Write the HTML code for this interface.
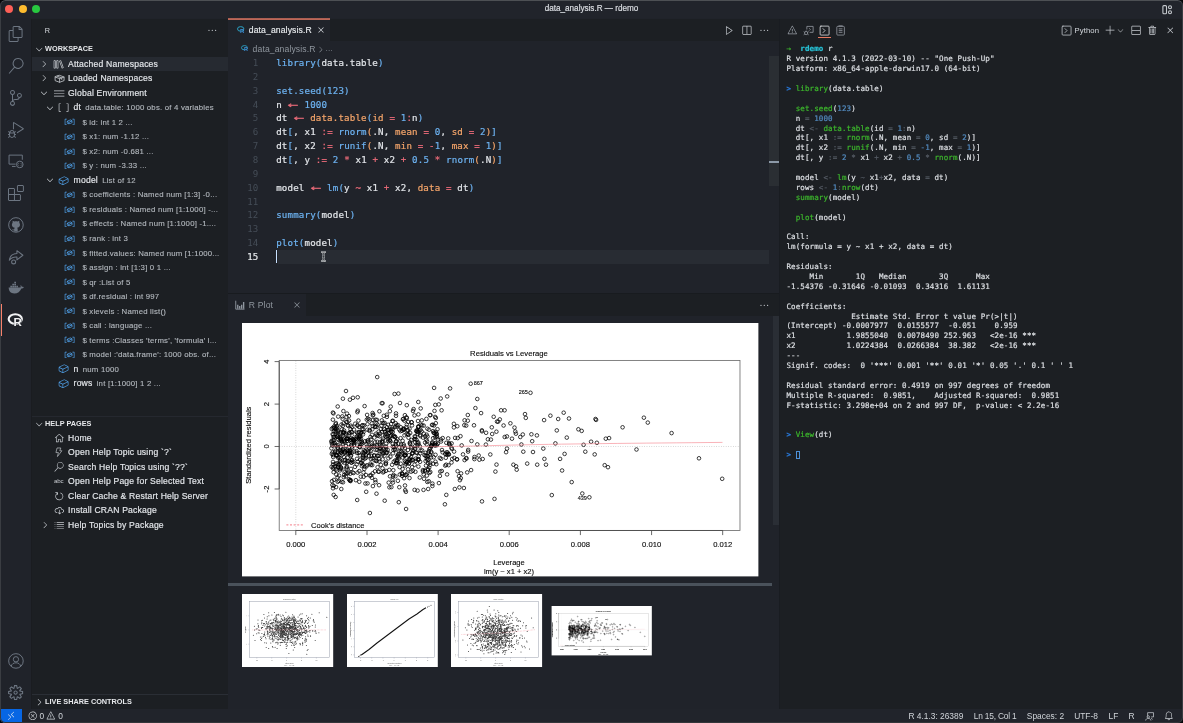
<!DOCTYPE html>
<html lang="en">
<head>
<meta charset="utf-8">
<title>data_analysis.R — rdemo</title>
<style>
*{box-sizing:border-box;margin:0;padding:0}
html,body{width:1183px;height:723px;overflow:hidden;background:#050608}
body{font-family:"Liberation Sans",sans-serif;color:#d5d9de;position:relative;-webkit-font-smoothing:antialiased}
.abs{position:absolute}
#win{will-change:transform;position:absolute;left:0;top:0;width:1183px;height:723px;background:#20232a;border-radius:5.5px;overflow:hidden}
#title{position:absolute;left:0;top:0;width:1183px;height:18.3px;background:#21242b}
#title .t{position:absolute;left:0;width:1183px;top:4.2px;text-align:center;font-size:8.15px;color:#d9dce1;line-height:10px;-webkit-text-stroke:0.2px}
.tl{position:absolute;top:5.2px;width:8px;height:8px;border-radius:50%}
#act{position:absolute;left:0;top:18.5px;width:31.5px;height:690px;background:#20232a;border-right:1px solid #1a1c20}
#side{position:absolute;left:31.5px;top:18.5px;width:196px;height:690px;background:#1c1f23}
#status{position:absolute;left:0;top:708.5px;width:1183px;height:14.5px;background:#21242b;font-size:8.4px;color:#d0d4d9}
.row{position:absolute;left:0;width:196px;height:14.54px;line-height:14.54px;font-size:8.6px;white-space:nowrap;color:#e3e6ea;letter-spacing:.19px;-webkit-text-stroke:0.17px}
.row .d{font-size:7.8px;color:#b3b8be;letter-spacing:.2px;-webkit-text-stroke:0.12px}
.row .l{position:absolute;top:0}
.sec{position:absolute;left:13.6px;font-size:7.3px;font-weight:bold;color:#e6e8eb;line-height:14.54px;letter-spacing:0}
svg{position:absolute;overflow:visible}
.ic{fill:none;stroke:#c5c9ce;stroke-width:1;stroke-linecap:round;stroke-linejoin:round}
#wb{position:absolute;left:0;top:0;width:1183px;height:723px;border-radius:5.5px;border:1px solid #3a3d42;border-top-color:#4d5054;border-bottom-color:#33363a;pointer-events:none;z-index:50}
</style>
</head>
<body>
<div id="win">
<div id="wb"></div>

<div id="title"><div class="t">data_analysis.R — rdemo</div>
<div class="tl" style="left:5.3px;background:#fe5f57"></div>
<div class="tl" style="left:18.5px;background:#febc2e"></div>
<div class="tl" style="left:31.6px;background:#28c840"></div>
<svg style="left:1161.5px;top:4.5px" width="11" height="10" viewBox="0 0 11 10"><rect x="0.9" y="0.6" width="3.6" height="8.2" rx="1" class="ic" style="stroke-width:1.1"/><circle cx="8" cy="2.3" r="1.5" class="ic" style="stroke-width:1.1"/><circle cx="8" cy="7.2" r="1.5" class="ic" style="stroke-width:1.1"/></svg>
</div>
<div id="act">
</div>
<svg style="left:7.85px;top:26.45px" width="15.9" height="15.9" viewBox="0 0 24 24"><path d="M17.5 0h-9L7 1.5V6H2.5L1 7.5v15.07L2.5 24h12.07L16 22.57V18h4.7l1.3-1.43V4.5L17.5 0zm0 2.12l2.38 2.38H17.5V2.12zm-3 20.38h-12v-15H7v9.07L8.5 18h6v4.5zm6-6h-12v-15H16V6h4.5v10.5z" fill="#6c7581" /></svg>
<svg style="left:7.85px;top:58.18px" width="15.9" height="15.9" viewBox="0 0 24 24"><path d="M15.25 0a8.25 8.25 0 0 0-6.18 13.72L1 22.88l1.12 1 8.05-9.12A8.251 8.251 0 1 0 15.25.01V0zm0 15a6.75 6.75 0 1 1 0-13.5 6.75 6.75 0 0 1 0 13.5z" fill="#6c7581" /></svg>
<svg style="left:7.85px;top:89.91px" width="15.9" height="15.9" viewBox="0 0 24 24"><path d="M21.007 8.222A3.738 3.738 0 0 0 15.045 5.2a3.737 3.737 0 0 0 1.156 6.583 2.988 2.988 0 0 1-2.668 1.67h-2.99a4.456 4.456 0 0 0-2.989 1.165V7.4a3.737 3.737 0 1 0-1.494 0v9.117a3.776 3.776 0 1 0 1.816.099 2.99 2.99 0 0 1 2.668-1.667h2.99a4.484 4.484 0 0 0 4.223-3.039 3.736 3.736 0 0 0 3.25-3.687zM4.565 3.738a2.242 2.242 0 1 1 4.484 0 2.242 2.242 0 0 1-4.484 0zm4.484 16.441a2.242 2.242 0 1 1-4.484 0 2.242 2.242 0 0 1 4.484 0zm8.221-9.715a2.242 2.242 0 1 1 0-4.485 2.242 2.242 0 0 1 0 4.485z" fill="#6c7581" /></svg>
<svg style="left:7.85px;top:121.64px" width="15.9" height="15.9" viewBox="0 0 24 24"><path d="M10.94 13.5l-1.32 1.32a3.73 3.73 0 0 0-7.24 0L1.06 13.5 0 14.56l1.72 1.72-.22.22V18H0v1.5h1.5v.08c.077.489.214.966.41 1.42L0 22.94 1.06 24l1.65-1.65A4.308 4.308 0 0 0 6 24a4.31 4.31 0 0 0 3.29-1.65L10.94 24 12 22.94 10.09 21c.198-.464.336-.951.41-1.45v-.1H12V18h-1.5v-1.5l-.22-.22L12 14.56l-1.06-1.06zM6 13.5a2.25 2.25 0 0 1 2.25 2.25h-4.5A2.25 2.25 0 0 1 6 13.5zm3 6a3.33 3.33 0 0 1-3 3 3.33 3.33 0 0 1-3-3v-2.25h6v2.25zm14.76-9.9v1.26L13.5 17.37V15.6l8.5-5.37L9 2v9.46a5.07 5.07 0 0 0-1.5-.72V.63L8.64 0l15.12 9.6z" fill="#6c7581" /></svg>
<svg style="left:7.85px;top:185.10px" width="15.9" height="15.9" viewBox="0 0 24 24"><path d="M13.5 1.5L15 0h7.5L24 1.5V9l-1.5 1.5H15L13.5 9V1.5zm1.5 0V9h7.5V1.5H15zM0 15V6l1.5-1.5H9L10.5 6v7.5H18l1.5 1.5v7.5L18 24H1.5L0 22.5V15zm9-1.5V6H1.5v7.5H9zM9 15H1.5v7.5H9V15zm1.5 7.5H18V15h-7.5v7.5z" fill="#6c7581" /></svg>
<svg style="left:7.85px;top:153.37px" width="15.9" height="15.9" viewBox="0 0 24 24" fill="none" stroke="#6c7581" stroke-width="1.5"><path d="M11.5 16.8H1.6V3.2h20v7"/><path d="M6 20.3h5.5"/><circle cx="17.8" cy="17.3" r="5"/><path d="M16.3 15.2l-1.9 2 1.9 2M19.3 15.4l1.9 2-1.9 2" stroke-width="1.1"/></svg>
<svg style="left:7.85px;top:216.83px" width="15.9" height="15.9" viewBox="0 0 24 24"><circle cx="12" cy="12" r="11" fill="none" stroke="#6c7581" stroke-width="1.5"/><path d="M7.2 5.6l2.3 1.3c1.6-.4 3.4-.4 5 0l2.3-1.3c.5 1.3.5 2.4.2 3.2 1 1.100 1.300 2.400 1.100 3.800-.4 2.300-2.200 3.400-4.300 3.700.6.600.8 1.300.8 2.200v3.300H9.400v-1.700c-2 .5-3.100-.4-3.800-1.900 1 .7 2.500 1.300 3.800.3 0-.8.300-1.600.8-2.200-2.100-.3-3.900-1.400-4.300-3.700-.2-1.400.1-2.700 1.100-3.800-.3-.8-.3-1.900.2-3.200z" fill="#6c7581"/></svg>
<svg style="left:7.85px;top:248.56px" width="15.9" height="15.9" viewBox="0 0 24 24" fill="none" stroke="#6c7581" stroke-width="1.6" stroke-linejoin="round"><path d="M13.500 2.500l9 7-9 7v-4.300c-5-.3-8.500 1-11.500 4.800.8-6.200 5-10 11.500-10.300z"/><circle cx="8.500" cy="19.500" r="3"/></svg>
<svg style="left:7.85px;top:280.29px" width="15.9" height="15.9" viewBox="0 0 24 24"><path d="M1 11.500h17.800c.6-1.600.3-3 .0-4 1.200.6 1.900 1.600 2.100 2.800 1-.3 2-.1 2.900.5-.7 1.500-2 2.200-3.600 2.200-1.800 4.800-5.500 7.500-10.700 7.500-5.300 0-8.400-3.200-8.500-9zM3.500 8.500h2.600v2.500H3.500zM6.500 8.500h2.600v2.500H6.500zM9.500 8.500h2.600v2.500H9.500zM12.500 8.500h2.600v2.500h-2.600zM6.500 5.500h2.600v2.500H6.500zM9.500 5.500h2.600v2.500H9.500zM9.500 2.500h2.600v2.500H9.500z" fill="#6c7581"/></svg>
<svg style="left:6.85px;top:312.02px" width="17.9" height="15.9" viewBox="-1.500 0 27 24"><ellipse cx="11" cy="10.500" rx="10" ry="7.200" fill="none" stroke="#f2f3f5" stroke-width="3.200"/><text x="8.200" y="21.500" font-family="Liberation Sans, sans-serif" font-weight="bold" font-size="17.500" fill="#f2f3f5" stroke="#20232a" stroke-width="1.200" paint-order="stroke">R</text></svg>
<div class="abs" style="left:0;top:304px;width:1.6px;height:31.5px;background:#f9826c"></div>
<svg style="left:7.85px;top:652.75px" width="15.9" height="15.9" viewBox="0 0 24 24" fill="none" stroke="#6c7581" stroke-width="1.5"><circle cx="12" cy="12" r="11"/><circle cx="12" cy="9.500" r="4"/><path d="M4.800 20c.8-3.500 3.700-5.200 7.200-5.200s6.400 1.700 7.200 5.200"/></svg>
<svg style="left:7.20px;top:683.70px" width="17.2" height="17.2" viewBox="0 0 16 16"><path d="M9.1 4.4L8.6 2H7.4l-.5 2.4-.7.3-2-1.3-.9.8 1.3 2-.2.7-2.4.5v1.2l2.4.5.3.8-1.3 2 .8.8 2-1.3.8.3.4 2.3h1.2l.5-2.4.8-.3 2 1.3.8-.8-1.3-2 .3-.8 2.3-.4V7.4l-2.4-.5-.3-.8 1.3-2-.8-.8-2 1.3-.7-.2zM9.4 1l.5 2.4L12 2.1l2 2-1.4 2.1 2.4.4v2.8l-2.4.5L14 12l-2 2-2.1-1.4-.5 2.4H6.6l-.5-2.4L4 13.9l-2-2 1.4-2.1L1 9.4V6.6l2.4-.5L2.1 4l2-2 2.1 1.4.4-2.4h2.8zm.6 7c0 1.1-.9 2-2 2s-2-.9-2-2 .9-2 2-2 2 .9 2 2zM8 9c.6 0 1-.4 1-1s-.4-1-1-1-1 .4-1 1 .4 1 1 1z" fill="#6c7581" /></svg>
<div id="status">
<div class="abs" style="left:0;top:0;width:22.3px;height:14.5px;background:#0766e4"></div>
<svg style="left:6.10px;top:2.20px" width="10.2" height="10.2" viewBox="0 0 16 16"><path d="M12.904 9.57L8.928 5.596l3.976-3.976-.619-.62L8 5.286v.619l4.285 4.285.62-.618zM3 5.62l4.072 4.05L3 13.647l.619.618L8 9.979v-.619L3.619 5 3 5.619z" fill="#e8ebef" /></svg>
<svg style="left:27.50px;top:2.20px" width="9.6" height="9.6" viewBox="0 0 16 16"><path d="M8.6 1c1.6.1 3.1.9 4.2 2 1.3 1.4 2 3.1 2 5.1 0 1.6-.6 3.1-1.6 4.4-1 1.2-2.4 2.1-4 2.4-1.6.3-3.2.1-4.6-.7-1.4-.8-2.5-2-3.1-3.5C.9 9.2.8 7.5 1.3 6c.5-1.6 1.4-2.9 2.8-3.8C5.4 1.3 7 .9 8.6 1zm.5 12.9c1.3-.3 2.5-1 3.4-2.1.8-1.1 1.3-2.4 1.2-3.8 0-1.6-.6-3.2-1.7-4.3-1-1-2.2-1.6-3.6-1.7-1.3-.1-2.7.2-3.8 1-1.1.8-1.9 1.9-2.3 3.3-.4 1.3-.4 2.7.2 4 .6 1.3 1.5 2.3 2.7 3 1.2.7 2.6.9 3.9.6zM7.9 7.5L10.3 5l.7.7-2.4 2.5 2.4 2.5-.7.7-2.4-2.5-2.4 2.5-.7-.7 2.4-2.5-2.4-2.5.7-.7 2.4 2.5z" fill="#d0d4d9" /></svg>
<span class="abs" style="left:39.5px;top:0;line-height:14.5px">0</span>
<svg style="left:46.40px;top:2.20px" width="9.6" height="9.6" viewBox="0 0 16 16"><path d="M7.56 1h.88l6.54 12.26-.44.74H1.44L1 13.26 7.56 1zM8 2.28L2.28 13H13.7L8 2.28zM8.625 12v-1h-1.25v1h1.25zm-1.25-2V6h1.25v4h-1.25z" fill="#d0d4d9" /></svg>
<span class="abs" style="left:58.2px;top:0;line-height:14.5px">0</span>
<span class="abs st" style="left:908.4px;top:0;line-height:14.5px;white-space:nowrap">R 4.1.3: 26389</span>
<span class="abs st" style="left:973.7px;top:0;line-height:14.5px;white-space:nowrap;letter-spacing:-0.2px">Ln 15, Col 1</span>
<span class="abs st" style="left:1026.8px;top:0;line-height:14.5px;white-space:nowrap">Spaces: 2</span>
<span class="abs st" style="left:1074.2px;top:0;line-height:14.5px;white-space:nowrap">UTF-8</span>
<span class="abs st" style="left:1108.6px;top:0;line-height:14.5px;white-space:nowrap">LF</span>
<span class="abs st" style="left:1128.5px;top:0;line-height:14.5px;white-space:nowrap">R</span>
<svg style="left:1143.500px;top:2.200px" width="10.500" height="10.500" viewBox="0 0 16 16" fill="none" stroke="#d0d4d9" stroke-width="1.100"><path d="M5.500 9.500v-7h9v6.500h-3.500"/><circle cx="6.500" cy="9" r="1.800" fill="#21242b"/><path d="M2.500 14.500c.4-2.200 1.900-3.300 4-3.300s3.600 1.100 4 3.300"/><path d="M11 10.500l1.800 2.500"/></svg>
<svg style="left:1164.00px;top:2.40px" width="9.8" height="9.8" viewBox="0 0 16 16"><path d="M13.377 10.573a7.63 7.63 0 0 1-.383-2.38V6.195a5.115 5.115 0 0 0-1.268-3.446 5.138 5.138 0 0 0-3.242-1.722c-.694-.072-1.4 0-2.07.227-.67.215-1.28.574-1.794 1.053a4.923 4.923 0 0 0-1.208 1.675 5.067 5.067 0 0 0-.431 2.022v2.2a7.61 7.61 0 0 1-.383 2.37L2 12.343l.479.658h3.505c0 .526.215 1.04.586 1.412.37.37.885.586 1.412.586.526 0 1.04-.215 1.411-.586s.587-.886.587-1.412h3.505l.478-.658-.586-1.77zm-4.69 3.147a.997.997 0 0 1-.705.299.997.997 0 0 1-.706-.3.997.997 0 0 1-.3-.705h1.999a.939.939 0 0 1-.287.706zm-5.515-1.71l.371-1.114a8.633 8.633 0 0 0 .443-2.691V6.004c0-.563.12-1.113.347-1.616.227-.514.55-.969.969-1.34.419-.382.91-.67 1.436-.837.538-.18 1.1-.24 1.65-.18a4.147 4.147 0 0 1 2.597 1.4 4.133 4.133 0 0 1 1.004 2.776v2.01c0 .909.144 1.818.443 2.691l.371 1.113h-9.63v-.012z" fill="#d0d4d9" /></svg>
</div>
<div id="side">
<div class="abs" style="left:13.300px;top:6.200px;font-size:7.300px;line-height:12px;color:#d5d9de">R</div>
<svg style="left:175.30px;top:6.70px" width="10.6" height="10.6" viewBox="0 0 16 16"><path d="M4 8a1 1 0 1 1-2 0 1 1 0 0 1 2 0zm5 0a1 1 0 1 1-2 0 1 1 0 0 1 2 0zm5 0a1 1 0 1 1-2 0 1 1 0 0 1 2 0z" fill="#c8ccd1" /></svg>
<svg style="left:2.60px;top:25.64px" width="10.4" height="10.4" viewBox="0 0 16 16"><path d="M7.976 10.072l4.357-4.357.62.618L8.284 11h-.618L3 6.333l.619-.618 4.357 4.357z" fill="#c8ccd1" /></svg><div class="sec" style="top:23.44px">WORKSPACE</div>
<div class="abs" style="left:0;top:38.13px;width:196px;height:14.53px;background:#262a31"></div>
<svg style="left:7.60px;top:40.43px" width="10" height="10" viewBox="0 0 16 16"><path d="M10.072 8.024L5.715 3.667l.618-.62L11 7.716v.618L6.333 13l-.618-.619 4.357-4.357z" fill="#c8ccd1" /></svg>
<svg style="left:21.90px;top:40.03px" width="10.8" height="10.8" viewBox="0 0 16 16"><path d="M5 2.5l.5-.5h2l.5.5v11l-.5.5h-2l-.5-.5v-11zM6 3v10h1V3H6zm3.171.345l.299-.641 1.88-.684.64.299 3.762 10.336-.299.641-1.879.684-.64-.299L9.17 3.345zm1.11.128l3.42 9.396.94-.341-3.42-9.397-.94.342zM1 2.5l.5-.5h2l.5.5v11l-.5.5h-2l-.5-.5v-11zM2 3v10h1V3H2z" fill="#c8ccd1" /></svg>
<div class="row" style="top:38.13px"><span class="l" style="left:36.50px">Attached Namespaces</span></div>
<svg style="left:7.60px;top:54.96px" width="10" height="10" viewBox="0 0 16 16"><path d="M10.072 8.024L5.715 3.667l.618-.62L11 7.716v.618L6.333 13l-.618-.619 4.357-4.357z" fill="#c8ccd1" /></svg>
<svg style="left:22.10px;top:54.26px" width="11.2" height="11.2" viewBox="0 0 16 16"><path d="M8 3.400l6.400 2.300v5.200L8 13.300 1.600 10.900V5.700zM1.800 5.800L8 8.100l6.200-2.300M8 8.100v5M4.800 4.600l6.300 2.400v2.200" fill="none" stroke="#c8ccd1" stroke-width="1.15" stroke-linejoin="round" stroke-linecap="round"/></svg>
<div class="row" style="top:52.66px"><span class="l" style="left:36.50px">Loaded Namespaces</span></div>
<svg style="left:7.70px;top:69.49px" width="10" height="10" viewBox="0 0 16 16"><path d="M7.976 10.072l4.357-4.357.62.618L8.284 11h-.618L3 6.333l.619-.618 4.357 4.357z" fill="#c8ccd1" /></svg>
<svg style="left:22.10px;top:69.29px" width="10.4" height="10.4" viewBox="0 0 16 16"><path d="M16 5H0V4h16v1zm0 8H0v-1h16v1zm0-4.008H0V8h16v.992z" fill="#c8ccd1" /></svg>
<div class="row" style="top:67.19px"><span class="l" style="left:36.50px">Global Environment</span></div>
<svg style="left:13.40px;top:84.02px" width="10" height="10" viewBox="0 0 16 16"><path d="M7.976 10.072l4.357-4.357.62.618L8.284 11h-.618L3 6.333l.619-.618 4.357 4.357z" fill="#c8ccd1" /></svg>
<svg style="left:26.90px;top:83.42px" width="11.2" height="11.2" viewBox="0 0 16 16"><path d="M1.5 2l-.5.5v11l.5.5H4v-1H2V3h2V2H1.5zm13 12l.5-.5v-11l-.5-.5H12v1h2v10h-2v1h2.5z" fill="#c8ccd1" /></svg>
<div class="row" style="top:81.72px"><span class="l" style="left:42.10px">dt<span class="d" style="margin-left:4.200px">data.table: 1000 obs. of 4 variables</span></span></div>
<svg style="left:32.20px;top:97.95px" width="11.2" height="11.2" viewBox="0 0 16 16"><path d="M2 5h2V4H1.5l-.5.5v8l.5.5H4v-1H2V5zm12.5-1H12v1h2v7h-2v1h2.5l.5-.5v-8l-.5-.5zm-2.74 2.57L12 7v2.51l-.3.45-4.5 2h-.46l-2.5-1.5-.24-.43v-2.5l.3-.46 4.5-2h.46l2.5 1.5zM5 9.71l1.5.9V9.28L5 8.38v1.33zm.58-2.15l1.45.87 3.39-1.5-1.45-.87-3.39 1.5zm1.95 3.17l3.5-1.56v-1.4l-3.5 1.55v1.41z" fill="#4f9fe6" /></svg><div class="row" style="top:96.25px"><span class="l" style="left:50.90px"><span class="d">$ id: int 1 2 ...</span></span></div>
<svg style="left:32.20px;top:112.48px" width="11.2" height="11.2" viewBox="0 0 16 16"><path d="M2 5h2V4H1.5l-.5.5v8l.5.5H4v-1H2V5zm12.5-1H12v1h2v7h-2v1h2.5l.5-.5v-8l-.5-.5zm-2.74 2.57L12 7v2.51l-.3.45-4.5 2h-.46l-2.5-1.5-.24-.43v-2.5l.3-.46 4.5-2h.46l2.5 1.5zM5 9.71l1.5.9V9.28L5 8.38v1.33zm.58-2.15l1.45.87 3.39-1.5-1.45-.87-3.39 1.5zm1.95 3.17l3.5-1.56v-1.4l-3.5 1.55v1.41z" fill="#4f9fe6" /></svg><div class="row" style="top:110.78px"><span class="l" style="left:50.90px"><span class="d">$ x1: num -1.12 ...</span></span></div>
<svg style="left:32.20px;top:127.01px" width="11.2" height="11.2" viewBox="0 0 16 16"><path d="M2 5h2V4H1.5l-.5.5v8l.5.5H4v-1H2V5zm12.5-1H12v1h2v7h-2v1h2.5l.5-.5v-8l-.5-.5zm-2.74 2.57L12 7v2.51l-.3.45-4.5 2h-.46l-2.5-1.5-.24-.43v-2.5l.3-.46 4.5-2h.46l2.5 1.5zM5 9.71l1.5.9V9.28L5 8.38v1.33zm.58-2.15l1.45.87 3.39-1.5-1.45-.87-3.39 1.5zm1.95 3.17l3.5-1.56v-1.4l-3.5 1.55v1.41z" fill="#4f9fe6" /></svg><div class="row" style="top:125.31px"><span class="l" style="left:50.90px"><span class="d">$ x2: num -0.681 ...</span></span></div>
<svg style="left:32.20px;top:141.54px" width="11.2" height="11.2" viewBox="0 0 16 16"><path d="M2 5h2V4H1.5l-.5.5v8l.5.5H4v-1H2V5zm12.5-1H12v1h2v7h-2v1h2.5l.5-.5v-8l-.5-.5zm-2.74 2.57L12 7v2.51l-.3.45-4.5 2h-.46l-2.5-1.5-.24-.43v-2.5l.3-.46 4.5-2h.46l2.5 1.5zM5 9.71l1.5.9V9.28L5 8.38v1.33zm.58-2.15l1.45.87 3.39-1.5-1.45-.87-3.39 1.5zm1.95 3.17l3.5-1.56v-1.4l-3.5 1.55v1.41z" fill="#4f9fe6" /></svg><div class="row" style="top:139.84px"><span class="l" style="left:50.90px"><span class="d">$ y : num -3.33 ...</span></span></div>
<svg style="left:13.40px;top:156.68px" width="10" height="10" viewBox="0 0 16 16"><path d="M7.976 10.072l4.357-4.357.62.618L8.284 11h-.618L3 6.333l.619-.618 4.357 4.357z" fill="#c8ccd1" /></svg>
<svg style="left:26.90px;top:156.07px" width="11.2" height="11.2" viewBox="0 0 16 16"><path d="M14.45 4.5l-5-2.5h-.9l-7 3.5-.55.89v4.5l.55.9 5 2.5h.9l7-3.5.55-.9v-4.5l-.55-.89zm-8 8.64l-4.5-2.25V7.17l4.5 2v3.97zm.5-4.8L2.29 6.23l6.66-3.34 4.67 2.34-6.67 3.11zm7 1.55l-6.5 3.25V9.21l6.5-3v3.68z" fill="#4f9fe6" /></svg>
<div class="row" style="top:154.38px"><span class="l" style="left:42.10px">model<span class="d" style="margin-left:4.200px">List of 12</span></span></div>
<svg style="left:32.20px;top:170.60px" width="11.2" height="11.2" viewBox="0 0 16 16"><path d="M2 5h2V4H1.5l-.5.5v8l.5.5H4v-1H2V5zm12.5-1H12v1h2v7h-2v1h2.5l.5-.5v-8l-.5-.5zm-2.74 2.57L12 7v2.51l-.3.45-4.5 2h-.46l-2.5-1.5-.24-.43v-2.5l.3-.46 4.5-2h.46l2.5 1.5zM5 9.71l1.5.9V9.28L5 8.38v1.33zm.58-2.15l1.45.87 3.39-1.5-1.45-.87-3.39 1.5zm1.95 3.17l3.5-1.56v-1.4l-3.5 1.55v1.41z" fill="#4f9fe6" /></svg><div class="row" style="top:168.91px"><span class="l" style="left:50.90px"><span class="d">$ coefficients : Named num [1:3] -0...</span></span></div>
<svg style="left:32.20px;top:185.13px" width="11.2" height="11.2" viewBox="0 0 16 16"><path d="M2 5h2V4H1.5l-.5.5v8l.5.5H4v-1H2V5zm12.5-1H12v1h2v7h-2v1h2.5l.5-.5v-8l-.5-.5zm-2.74 2.57L12 7v2.51l-.3.45-4.5 2h-.46l-2.5-1.5-.24-.43v-2.5l.3-.46 4.5-2h.46l2.5 1.5zM5 9.71l1.5.9V9.28L5 8.38v1.33zm.58-2.15l1.45.87 3.39-1.5-1.45-.87-3.39 1.5zm1.95 3.17l3.5-1.56v-1.4l-3.5 1.55v1.41z" fill="#4f9fe6" /></svg><div class="row" style="top:183.44px"><span class="l" style="left:50.90px"><span class="d">$ residuals : Named num [1:1000] -...</span></span></div>
<svg style="left:32.20px;top:199.66px" width="11.2" height="11.2" viewBox="0 0 16 16"><path d="M2 5h2V4H1.5l-.5.5v8l.5.5H4v-1H2V5zm12.5-1H12v1h2v7h-2v1h2.5l.5-.5v-8l-.5-.5zm-2.74 2.57L12 7v2.51l-.3.45-4.5 2h-.46l-2.5-1.5-.24-.43v-2.5l.3-.46 4.5-2h.46l2.5 1.5zM5 9.71l1.5.9V9.28L5 8.38v1.33zm.58-2.15l1.45.87 3.39-1.5-1.45-.87-3.39 1.5zm1.95 3.17l3.5-1.56v-1.4l-3.5 1.55v1.41z" fill="#4f9fe6" /></svg><div class="row" style="top:197.97px"><span class="l" style="left:50.90px"><span class="d">$ effects : Named num [1:1000] -1....</span></span></div>
<svg style="left:32.20px;top:214.19px" width="11.2" height="11.2" viewBox="0 0 16 16"><path d="M2 5h2V4H1.5l-.5.5v8l.5.5H4v-1H2V5zm12.5-1H12v1h2v7h-2v1h2.5l.5-.5v-8l-.5-.5zm-2.74 2.57L12 7v2.51l-.3.45-4.5 2h-.46l-2.5-1.5-.24-.43v-2.5l.3-.46 4.5-2h.46l2.5 1.5zM5 9.71l1.5.9V9.28L5 8.38v1.33zm.58-2.15l1.45.87 3.39-1.5-1.45-.87-3.39 1.5zm1.95 3.17l3.5-1.56v-1.4l-3.5 1.55v1.41z" fill="#4f9fe6" /></svg><div class="row" style="top:212.50px"><span class="l" style="left:50.90px"><span class="d">$ rank : int 3</span></span></div>
<svg style="left:32.20px;top:228.72px" width="11.2" height="11.2" viewBox="0 0 16 16"><path d="M2 5h2V4H1.5l-.5.5v8l.5.5H4v-1H2V5zm12.5-1H12v1h2v7h-2v1h2.5l.5-.5v-8l-.5-.5zm-2.74 2.57L12 7v2.51l-.3.45-4.5 2h-.46l-2.5-1.5-.24-.43v-2.5l.3-.46 4.5-2h.46l2.5 1.5zM5 9.71l1.5.9V9.28L5 8.38v1.33zm.58-2.15l1.45.87 3.39-1.5-1.45-.87-3.39 1.5zm1.95 3.17l3.5-1.56v-1.4l-3.5 1.55v1.41z" fill="#4f9fe6" /></svg><div class="row" style="top:227.03px"><span class="l" style="left:50.90px"><span class="d">$ fitted.values: Named num [1:1000...</span></span></div>
<svg style="left:32.20px;top:243.25px" width="11.2" height="11.2" viewBox="0 0 16 16"><path d="M2 5h2V4H1.5l-.5.5v8l.5.5H4v-1H2V5zm12.5-1H12v1h2v7h-2v1h2.5l.5-.5v-8l-.5-.5zm-2.74 2.57L12 7v2.51l-.3.45-4.5 2h-.46l-2.5-1.5-.24-.43v-2.5l.3-.46 4.5-2h.46l2.5 1.5zM5 9.71l1.5.9V9.28L5 8.38v1.33zm.58-2.15l1.45.87 3.39-1.5-1.45-.87-3.39 1.5zm1.95 3.17l3.5-1.56v-1.4l-3.5 1.55v1.41z" fill="#4f9fe6" /></svg><div class="row" style="top:241.56px"><span class="l" style="left:50.90px"><span class="d">$ assign : int [1:3] 0 1 ...</span></span></div>
<svg style="left:32.20px;top:257.78px" width="11.2" height="11.2" viewBox="0 0 16 16"><path d="M2 5h2V4H1.5l-.5.5v8l.5.5H4v-1H2V5zm12.5-1H12v1h2v7h-2v1h2.5l.5-.5v-8l-.5-.5zm-2.74 2.57L12 7v2.51l-.3.45-4.5 2h-.46l-2.5-1.5-.24-.43v-2.5l.3-.46 4.5-2h.46l2.5 1.5zM5 9.71l1.5.9V9.28L5 8.38v1.33zm.58-2.15l1.45.87 3.39-1.5-1.45-.87-3.39 1.5zm1.95 3.17l3.5-1.56v-1.4l-3.5 1.55v1.41z" fill="#4f9fe6" /></svg><div class="row" style="top:256.08px"><span class="l" style="left:50.90px"><span class="d">$ qr :List of 5</span></span></div>
<svg style="left:32.20px;top:272.31px" width="11.2" height="11.2" viewBox="0 0 16 16"><path d="M2 5h2V4H1.5l-.5.5v8l.5.5H4v-1H2V5zm12.5-1H12v1h2v7h-2v1h2.5l.5-.5v-8l-.5-.5zm-2.74 2.57L12 7v2.51l-.3.45-4.5 2h-.46l-2.5-1.5-.24-.43v-2.5l.3-.46 4.5-2h.46l2.5 1.5zM5 9.71l1.5.9V9.28L5 8.38v1.33zm.58-2.15l1.45.87 3.39-1.5-1.45-.87-3.39 1.5zm1.95 3.17l3.5-1.56v-1.4l-3.5 1.55v1.41z" fill="#4f9fe6" /></svg><div class="row" style="top:270.62px"><span class="l" style="left:50.90px"><span class="d">$ df.residual : int 997</span></span></div>
<svg style="left:32.20px;top:286.84px" width="11.2" height="11.2" viewBox="0 0 16 16"><path d="M2 5h2V4H1.5l-.5.5v8l.5.5H4v-1H2V5zm12.5-1H12v1h2v7h-2v1h2.5l.5-.5v-8l-.5-.5zm-2.74 2.57L12 7v2.51l-.3.45-4.5 2h-.46l-2.5-1.5-.24-.43v-2.5l.3-.46 4.5-2h.46l2.5 1.5zM5 9.71l1.5.9V9.28L5 8.38v1.33zm.58-2.15l1.45.87 3.39-1.5-1.45-.87-3.39 1.5zm1.95 3.17l3.5-1.56v-1.4l-3.5 1.55v1.41z" fill="#4f9fe6" /></svg><div class="row" style="top:285.14px"><span class="l" style="left:50.90px"><span class="d">$ xlevels : Named list()</span></span></div>
<svg style="left:32.20px;top:301.37px" width="11.2" height="11.2" viewBox="0 0 16 16"><path d="M2 5h2V4H1.5l-.5.5v8l.5.5H4v-1H2V5zm12.5-1H12v1h2v7h-2v1h2.5l.5-.5v-8l-.5-.5zm-2.74 2.57L12 7v2.51l-.3.45-4.5 2h-.46l-2.5-1.5-.24-.43v-2.5l.3-.46 4.5-2h.46l2.5 1.5zM5 9.71l1.5.9V9.28L5 8.38v1.33zm.58-2.15l1.45.87 3.39-1.5-1.45-.87-3.39 1.5zm1.95 3.17l3.5-1.56v-1.4l-3.5 1.55v1.41z" fill="#4f9fe6" /></svg><div class="row" style="top:299.67px"><span class="l" style="left:50.90px"><span class="d">$ call : language ...</span></span></div>
<svg style="left:32.20px;top:315.90px" width="11.2" height="11.2" viewBox="0 0 16 16"><path d="M2 5h2V4H1.5l-.5.5v8l.5.5H4v-1H2V5zm12.5-1H12v1h2v7h-2v1h2.5l.5-.5v-8l-.5-.5zm-2.74 2.57L12 7v2.51l-.3.45-4.5 2h-.46l-2.5-1.5-.24-.43v-2.5l.3-.46 4.5-2h.46l2.5 1.5zM5 9.71l1.5.9V9.28L5 8.38v1.33zm.58-2.15l1.45.87 3.39-1.5-1.45-.87-3.39 1.5zm1.95 3.17l3.5-1.56v-1.4l-3.5 1.55v1.41z" fill="#4f9fe6" /></svg><div class="row" style="top:314.20px"><span class="l" style="left:50.90px"><span class="d">$ terms :Classes 'terms', 'formula' l...</span></span></div>
<svg style="left:32.20px;top:330.43px" width="11.2" height="11.2" viewBox="0 0 16 16"><path d="M2 5h2V4H1.5l-.5.5v8l.5.5H4v-1H2V5zm12.5-1H12v1h2v7h-2v1h2.5l.5-.5v-8l-.5-.5zm-2.74 2.57L12 7v2.51l-.3.45-4.5 2h-.46l-2.5-1.5-.24-.43v-2.5l.3-.46 4.5-2h.46l2.5 1.5zM5 9.71l1.5.9V9.28L5 8.38v1.33zm.58-2.15l1.45.87 3.39-1.5-1.45-.87-3.39 1.5zm1.95 3.17l3.5-1.56v-1.4l-3.5 1.55v1.41z" fill="#4f9fe6" /></svg><div class="row" style="top:328.73px"><span class="l" style="left:50.90px"><span class="d">$ model :'data.frame': 1000 obs. of...</span></span></div>
<svg style="left:26.90px;top:344.96px" width="11.2" height="11.2" viewBox="0 0 16 16"><path d="M14.45 4.5l-5-2.5h-.9l-7 3.5-.55.89v4.5l.55.9 5 2.5h.9l7-3.5.55-.9v-4.5l-.55-.89zm-8 8.64l-4.5-2.25V7.17l4.5 2v3.97zm.5-4.8L2.29 6.23l6.66-3.34 4.67 2.34-6.67 3.11zm7 1.55l-6.5 3.25V9.21l6.5-3v3.68z" fill="#4f9fe6" /></svg>
<div class="row" style="top:343.26px"><span class="l" style="left:42.10px">n<span class="d" style="margin-left:4.200px">num 1000</span></span></div>
<svg style="left:26.90px;top:359.49px" width="11.2" height="11.2" viewBox="0 0 16 16"><path d="M14.45 4.5l-5-2.5h-.9l-7 3.5-.55.89v4.5l.55.9 5 2.5h.9l7-3.5.55-.9v-4.5l-.55-.89zm-8 8.64l-4.5-2.25V7.17l4.5 2v3.97zm.5-4.8L2.29 6.23l6.66-3.34 4.67 2.34-6.67 3.11zm7 1.55l-6.5 3.25V9.21l6.5-3v3.68z" fill="#4f9fe6" /></svg>
<div class="row" style="top:357.79px"><span class="l" style="left:42.10px">rows<span class="d" style="margin-left:4.200px">int [1:1000] 1 2 ...</span></span></div>
<div class="abs" style="left:0;top:397.00px;width:196px;height:1px;background:#25282f"></div>
<svg style="left:2.60px;top:400.33px" width="10.4" height="10.4" viewBox="0 0 16 16"><path d="M7.976 10.072l4.357-4.357.62.618L8.284 11h-.618L3 6.333l.619-.618 4.357 4.357z" fill="#c8ccd1" /></svg><div class="sec" style="top:398.13px">HELP PAGES</div>
<svg style="left:22.30px;top:414.04px" width="10.6" height="10.6" viewBox="0 0 16 16"><path d="M8.36 1.37l6.36 5.8-.71.71L13 6.964v6.526l-.5.5h-3l-.5-.5v-3.5H7v3.5l-.5.5h-3l-.5-.5V6.972L2 7.88l-.71-.71 6.35-5.8h.72zM4 6.063v6.927h2v-3.5l.5-.5h3l.5.5v3.5h2V6.057L8 2.43 4 6.063z" fill="#c8ccd1" /></svg>
<div class="row" style="top:412.04px"><span class="l" style="left:36.60px">Home</span></div>
<svg style="left:22.50px;top:428.56px" width="10.4" height="10.4" viewBox="0 0 16 16"><path d="M5.3 1.5h5.2l-1.6 4.3h3.3l-6.9 8.9 1.5-6.1H3.6z" fill="none" stroke="#c8ccd1" stroke-width="1.0" stroke-linejoin="round" stroke-linecap="round"/></svg>
<div class="row" style="top:426.56px"><span class="l" style="left:36.60px">Open Help Topic using `?`</span></div>
<svg style="left:22.80px;top:443.50px" width="9.8" height="9.8" viewBox="0 0 24 24"><path d="M15.25 0a8.25 8.25 0 0 0-6.18 13.72L1 22.88l1.12 1 8.05-9.12A8.251 8.251 0 1 0 15.25.01V0zm0 15a6.75 6.75 0 1 1 0-13.5 6.75 6.75 0 0 1 0 13.5z" fill="#c8ccd1" /></svg>
<div class="row" style="top:441.10px"><span class="l" style="left:36.60px">Search Help Topics using `??`</span></div>
<div class="abs" style="left:22.50px;top:455.62px;font-size:6.200px;line-height:13.53px;color:#c8ccd1;letter-spacing:-0.2px">abc</div>
<div class="row" style="top:455.62px"><span class="l" style="left:36.60px">Open Help Page for Selected Text</span></div>
<svg style="left:22.30px;top:472.16px" width="10.6" height="10.6" viewBox="0 0 16 16"><path d="M4.681 3H2V2h3.5l.5.5V6H5V4a5 5 0 1 0 4.53-.761l.302-.954A6 6 0 1 1 4.681 3z" fill="#c8ccd1" /></svg>
<div class="row" style="top:470.16px"><span class="l" style="left:36.60px">Clear Cache &amp; Restart Help Server</span></div>
<svg style="left:22.30px;top:486.69px" width="10.6" height="10.6" viewBox="0 0 16 16"><path d="M11.957 6h.05a2.99 2.99 0 0 1 2.116.879 3.003 3.003 0 0 1 0 4.242 2.99 2.99 0 0 1-2.117.879v-1a2.002 2.002 0 0 0 0-4h-.914l-.123-.857a2.49 2.49 0 0 0-2.126-2.122A2.478 2.478 0 0 0 6.231 5.5l-.333.762-.809-.189A2.49 2.49 0 0 0 4.523 6c-.662 0-1.297.263-1.764.732A2.503 2.503 0 0 0 4.523 11h.498v1h-.498a3.486 3.486 0 0 1-2.628-1.16 3.502 3.502 0 0 1 1.958-5.78 3.462 3.462 0 0 1 1.468.04 3.486 3.486 0 0 1 3.657-2.06A3.479 3.479 0 0 1 11.957 6zm-5.25 5.121l1.314 1.314V7h.994v5.4l1.278-1.279.707.707-2.146 2.147h-.708L6 11.829l.707-.708z" fill="#c8ccd1" /></svg>
<div class="row" style="top:484.69px"><span class="l" style="left:36.60px">Install CRAN Package</span></div>
<svg style="left:22.30px;top:501.22px" width="10.6" height="10.6" viewBox="0 0 16 16"><path d="M2 3H1v1h1V3zm0 3H1v1h1V6zM1 9h1v1H1V9zm1 3H1v1h1v-1zm2-9h11v1H4V3zm11 3H4v1h11V6zM4 9h11v1H4V9zm11 3H4v1h11v-1z" fill="#c8ccd1" /></svg>
<div class="row" style="top:499.22px"><span class="l" style="left:36.60px">Help Topics by Package</span></div>
<svg style="left:8.10px;top:501.52px" width="10" height="10" viewBox="0 0 16 16"><path d="M10.072 8.024L5.715 3.667l.618-.62L11 7.716v.618L6.333 13l-.618-.619 4.357-4.357z" fill="#c8ccd1" /></svg>
<div class="abs" style="left:0;top:675.90px;width:196px;height:1px;background:#2a2e35"></div>
<svg style="left:2.40px;top:678.64px" width="10.4" height="10.4" viewBox="0 0 16 16"><path d="M10.072 8.024L5.715 3.667l.618-.62L11 7.716v.618L6.333 13l-.618-.619 4.357-4.357z" fill="#c8ccd1" /></svg><div class="sec" style="top:676.44px">LIVE SHARE CONTROLS</div>
</div>
<style>
#ed{position:absolute;left:227.5px;top:18.5px;width:551.9px;height:275px;background:#20232a}
.tabs{position:absolute;left:0;top:0;width:551.9px;height:22.9px;background:#1c1f23}
.tab{position:absolute;left:0;top:0;height:22.9px;background:#20232a;font-size:8.6px;letter-spacing:.12px;line-height:22.9px;white-space:nowrap}
.code{position:absolute;font-family:"DejaVu Sans Mono","Liberation Mono",monospace;font-size:9.15px;letter-spacing:0.164px;white-space:pre;color:#e2e5e9;-webkit-text-stroke:0.2px;height:13.85px;line-height:13.85px}
.ln{position:absolute;left:0;width:31px;text-align:right;font-family:"DejaVu Sans Mono","Liberation Mono",monospace;font-size:9.15px;letter-spacing:0.164px;color:#454d57;height:13.85px;line-height:13.85px}
.f{color:#6db3f2}.n{color:#6db3f2}.p{color:#f5a56a}.o{color:#ee6c7a}
.arr{display:inline-block;width:11.32px;text-align:center;letter-spacing:0}.arr span{display:inline-block;transform:scale(1.95,1.15) translateY(-0.2px)}
</style>
<div id="ed">
<div class="tabs"></div>
<div class="tab" style="width:102.7px"><div class="abs" style="left:0;top:-0.500px;width:102.7px;height:2px;background:linear-gradient(#a35c52,#c46a58)"></div>
<svg style="left:9.10px;top:7.90px" width="8.6" height="6.88" viewBox="0 0 20 16"><ellipse cx="8.600" cy="6.800" rx="7.400" ry="5.300" fill="none" stroke="#2aa5c8" stroke-width="2.300"/><text x="7.200" y="15.800" font-family="Liberation Sans, sans-serif" font-weight="bold" font-size="14" fill="#3f93dc" stroke="#20232a" stroke-width="0.900" paint-order="stroke">R</text></svg>
<span class="abs" style="left:21.300px;top:0.300px;color:#e8ebee;-webkit-text-stroke:0.15px">data_analysis.R</span>
<svg style="left:88.10px;top:6.60px" width="10" height="10" viewBox="0 0 16 16"><path d="M8 8.707l3.646 3.647.708-.707L8.707 8l3.647-3.646-.707-.708L8 7.293 4.354 3.646l-.707.708L7.293 8l-3.646 3.646.707.708L8 8.707z" fill="#d5d9de" /></svg>
</div>
<svg style="left:496.70px;top:6.60px" width="10.6" height="10.6" viewBox="0 0 16 16"><path d="M3.78 2L3 2.41v12l.78.42 9-6V8l-9-6zM4 13.48V3.35l7.6 5.07L4 13.48z" fill="#c8ccd1" /></svg>
<svg style="left:513.70px;top:6.30px" width="11.2" height="11.2" viewBox="0 0 16 16"><path d="M14 1H3L2 2v11l1 1h11l1-1V2l-1-1zM8 13H3V2h5v11zm6 0H9V2h5v11z" fill="#c8ccd1" /></svg>
<svg style="left:531.30px;top:6.60px" width="10.6" height="10.6" viewBox="0 0 16 16"><path d="M4 8a1 1 0 1 1-2 0 1 1 0 0 1 2 0zm5 0a1 1 0 1 1-2 0 1 1 0 0 1 2 0zm5 0a1 1 0 1 1-2 0 1 1 0 0 1 2 0z" fill="#c8ccd1" /></svg>
<svg style="left:13.50px;top:26.90px" width="8" height="6.40" viewBox="0 0 20 16"><ellipse cx="8.600" cy="6.800" rx="7.400" ry="5.300" fill="none" stroke="#2aa5c8" stroke-width="2.300"/><text x="7.200" y="15.800" font-family="Liberation Sans, sans-serif" font-weight="bold" font-size="14" fill="#3f93dc" stroke="#20232a" stroke-width="0.900" paint-order="stroke">R</text></svg>
<div class="abs" style="left:25.10px;top:22.90px;height:14.6px;line-height:16.600px;font-size:8.6px;letter-spacing:.12px;color:#8f969e;white-space:nowrap">data_analysis.R</div>
<svg style="left:88.20px;top:26.40px" width="9.2" height="9.2" viewBox="0 0 16 16"><path d="M10.072 8.024L5.715 3.667l.618-.62L11 7.716v.618L6.333 13l-.618-.619 4.357-4.357z" fill="#8f969e" /></svg>
<div class="abs" style="left:97.80px;top:22.90px;height:14.6px;line-height:16.800px;font-size:7.800px;color:#8f969e">…</div>
<div class="abs" style="left:50.00px;top:231.40px;width:491.90px;height:13.85px;background:#282c33"></div>
<div class="ln" style="top:38.50px">1</div>
<div class="code" style="left:48.70px;top:38.50px"><span class="f">library(</span>data.table<span class="f">)</span></div>
<div class="ln" style="top:52.35px">2</div>
<div class="ln" style="top:66.20px">3</div>
<div class="code" style="left:48.70px;top:66.20px"><span class="f">set.seed(123)</span></div>
<div class="ln" style="top:80.05px">4</div>
<div class="code" style="left:48.70px;top:80.05px">n <span class="o"><span class="arr"><span>←</span></span></span><span class="n"> 1000</span></div>
<div class="ln" style="top:93.90px">5</div>
<div class="code" style="left:48.70px;top:93.90px">dt <span class="o"><span class="arr"><span>←</span></span></span><span class="p"> data.table</span><span class="f">(</span><span class="p">id</span><span class="o"> = </span><span class="n">1</span><span class="o">:</span>n<span class="f">)</span></div>
<div class="ln" style="top:107.75px">6</div>
<div class="code" style="left:48.70px;top:107.75px">dt<span class="f">[</span>, x1 <span class="o">:=</span><span class="f"> rnorm</span><span class="p">(</span>.N, <span class="p">mean</span><span class="o"> = </span><span class="n">0</span>, <span class="p">sd</span><span class="o"> = </span><span class="n">2</span><span class="p">)</span><span class="f">]</span></div>
<div class="ln" style="top:121.60px">7</div>
<div class="code" style="left:48.70px;top:121.60px">dt<span class="f">[</span>, x2 <span class="o">:=</span><span class="f"> runif</span><span class="p">(</span>.N, <span class="p">min</span><span class="o"> = -</span><span class="n">1</span>, <span class="p">max</span><span class="o"> = </span><span class="n">1</span><span class="p">)</span><span class="f">]</span></div>
<div class="ln" style="top:135.45px">8</div>
<div class="code" style="left:48.70px;top:135.45px">dt<span class="f">[</span>, y <span class="o">:=</span><span class="n"> 2</span><span class="o"> * </span>x1<span class="o"> + </span>x2<span class="o"> + </span><span class="n">0.5</span><span class="o"> * </span><span class="f">rnorm</span><span class="p">(</span>.N<span class="p">)</span><span class="f">]</span></div>
<div class="ln" style="top:149.30px">9</div>
<div class="ln" style="top:163.15px">10</div>
<div class="code" style="left:48.70px;top:163.15px">model <span class="o"><span class="arr"><span>←</span></span></span><span class="f"> lm(</span>y<span class="o"> ~ </span>x1<span class="o"> + </span>x2, <span class="p">data</span><span class="o"> = </span>dt<span class="f">)</span></div>
<div class="ln" style="top:177.00px">11</div>
<div class="ln" style="top:190.85px">12</div>
<div class="code" style="left:48.70px;top:190.85px"><span class="f">summary(</span>model<span class="f">)</span></div>
<div class="ln" style="top:204.70px">13</div>
<div class="ln" style="top:218.55px">14</div>
<div class="code" style="left:48.70px;top:218.55px"><span class="f">plot(</span>model<span class="f">)</span></div>
<div class="ln" style="top:232.40px;color:#e6e9ec;-webkit-text-stroke:0.2px">15</div>
<div class="abs" style="left:48.80px;top:231.70px;width:1px;height:13.25px;background:#c8e1ff"></div>
<svg style="left:92.00px;top:232.50px" width="7" height="11" viewBox="0 0 7 11"><path d="M1 0.800C2.300 0.800 3.500 1.300 3.500 2.500C3.500 1.300 4.700 0.800 6 0.800M1 10.200C2.300 10.200 3.500 9.700 3.500 8.500C3.500 9.700 4.700 10.200 6 10.200M3.500 2.500V8.500M2.300 5.600H4.700" fill="none" stroke="#e9ebee" stroke-width="1.700"/><path d="M1 0.800C2.300 0.800 3.500 1.300 3.500 2.500C3.500 1.300 4.700 0.800 6 0.800M1 10.200C2.300 10.200 3.500 9.700 3.500 8.500C3.500 9.700 4.700 10.200 6 10.200M3.500 2.500V8.500M2.300 5.600H4.700" fill="none" stroke="#23262b" stroke-width="0.700"/></svg>
<div class="abs" style="left:541.90px;top:37.50px;width:9.6px;height:130px;background:#2a2e33"></div>
<div class="abs" style="left:541.90px;top:142.80px;width:10px;height:1.5px;background:#8c99a8"></div>
</div>
<style>
#g2{position:absolute;left:227.5px;top:293px;width:551.9px;height:415.5px;background:#20232a;border-top:1px solid #181b1f}
</style>
<div id="g2">
<div class="abs" style="left:0;top:0;width:551.9px;height:22.3px;background:#1c1f23"></div>
<div class="abs" style="left:0;top:0;width:78.6px;height:22.3px;background:#20232a"></div>
<svg style="left:7.10px;top:6.10px" width="9.800" height="10" viewBox="0 0 16 16" fill="none" stroke="#9097a0" stroke-width="1.500"><path d="M1.200 1v13.800H15.500"/><path d="M4.500 14V7.500M7.700 14V9.500M10.900 14V7.500M14.100 14V3" stroke-width="2.200"/></svg>
<div class="abs" style="left:21.30px;top:0;height:22.3px;line-height:22.600px;font-size:8.6px;letter-spacing:.15px;color:#8f969e;white-space:nowrap">R Plot</div>
<svg style="left:64.65px;top:6.30px" width="10" height="10" viewBox="0 0 16 16"><path d="M8 8.707l3.646 3.647.708-.707L8.707 8l3.647-3.646-.707-.708L8 7.293 4.354 3.646l-.707.708L7.293 8l-3.646 3.646.707.708L8 8.707z" fill="#8f969e" /></svg>
<svg style="left:531.30px;top:6.00px" width="10.6" height="10.6" viewBox="0 0 16 16"><path d="M4 8a1 1 0 1 1-2 0 1 1 0 0 1 2 0zm5 0a1 1 0 1 1-2 0 1 1 0 0 1 2 0zm5 0a1 1 0 1 1-2 0 1 1 0 0 1 2 0z" fill="#c8ccd1" /></svg>
<svg style="left:14.40px;top:28.80px" width="516.400" height="253.400" viewBox="0 0 516.400 253.400"><rect width="516.400" height="253.400" fill="#fff"/><path d="M53.8 37.7V207.2M37.4 123.5H497.8" stroke="#b9b9b9" stroke-width="0.7" stroke-dasharray="0.8 1.6" fill="none"/><g fill="none" stroke="#000" stroke-width="0.76"><circle cx="120.3" cy="102.3" r="1.8"/><circle cx="89.7" cy="117.8" r="1.8"/><circle cx="150.8" cy="123.6" r="1.8"/><circle cx="188.2" cy="139.7" r="1.8"/><circle cx="175.2" cy="107.1" r="1.8"/><circle cx="140.6" cy="130.3" r="1.8"/><circle cx="145.9" cy="116.2" r="1.8"/><circle cx="106.9" cy="156.2" r="1.8"/><circle cx="139.9" cy="109.1" r="1.8"/><circle cx="115.0" cy="135.8" r="1.8"/><circle cx="123.0" cy="135.6" r="1.8"/><circle cx="189.5" cy="129.7" r="1.8"/><circle cx="180.1" cy="127.4" r="1.8"/><circle cx="149.2" cy="108.4" r="1.8"/><circle cx="98.3" cy="115.0" r="1.8"/><circle cx="155.5" cy="140.0" r="1.8"/><circle cx="188.2" cy="141.8" r="1.8"/><circle cx="169.5" cy="117.0" r="1.8"/><circle cx="142.6" cy="106.3" r="1.8"/><circle cx="148.0" cy="153.3" r="1.8"/><circle cx="189.4" cy="123.0" r="1.8"/><circle cx="99.5" cy="129.6" r="1.8"/><circle cx="138.2" cy="121.8" r="1.8"/><circle cx="116.8" cy="130.0" r="1.8"/><circle cx="122.1" cy="130.4" r="1.8"/><circle cx="137.4" cy="138.5" r="1.8"/><circle cx="245.9" cy="116.3" r="1.8"/><circle cx="170.0" cy="102.4" r="1.8"/><circle cx="210.2" cy="135.9" r="1.8"/><circle cx="186.0" cy="147.1" r="1.8"/><circle cx="95.0" cy="102.9" r="1.8"/><circle cx="130.2" cy="142.1" r="1.8"/><circle cx="173.1" cy="123.2" r="1.8"/><circle cx="151.0" cy="153.3" r="1.8"/><circle cx="123.9" cy="132.2" r="1.8"/><circle cx="195.8" cy="120.7" r="1.8"/><circle cx="144.0" cy="139.5" r="1.8"/><circle cx="104.1" cy="150.4" r="1.8"/><circle cx="98.4" cy="135.4" r="1.8"/><circle cx="119.0" cy="115.6" r="1.8"/><circle cx="121.0" cy="111.4" r="1.8"/><circle cx="185.3" cy="158.9" r="1.8"/><circle cx="153.0" cy="113.6" r="1.8"/><circle cx="198.3" cy="148.5" r="1.8"/><circle cx="148.4" cy="118.2" r="1.8"/><circle cx="243.9" cy="121.6" r="1.8"/><circle cx="95.5" cy="128.6" r="1.8"/><circle cx="95.9" cy="124.8" r="1.8"/><circle cx="209.5" cy="139.5" r="1.8"/><circle cx="142.8" cy="109.0" r="1.8"/><circle cx="117.7" cy="119.1" r="1.8"/><circle cx="150.7" cy="109.0" r="1.8"/><circle cx="152.8" cy="126.2" r="1.8"/><circle cx="97.9" cy="110.4" r="1.8"/><circle cx="166.8" cy="140.9" r="1.8"/><circle cx="119.0" cy="139.9" r="1.8"/><circle cx="191.7" cy="134.3" r="1.8"/><circle cx="211.9" cy="104.4" r="1.8"/><circle cx="256.2" cy="98.7" r="1.8"/><circle cx="172.6" cy="141.7" r="1.8"/><circle cx="196.9" cy="160.1" r="1.8"/><circle cx="177.8" cy="154.5" r="1.8"/><circle cx="109.0" cy="145.9" r="1.8"/><circle cx="126.1" cy="128.4" r="1.8"/><circle cx="130.7" cy="103.0" r="1.8"/><circle cx="190.0" cy="102.0" r="1.8"/><circle cx="120.4" cy="137.8" r="1.8"/><circle cx="95.0" cy="113.4" r="1.8"/><circle cx="150.7" cy="106.2" r="1.8"/><circle cx="164.9" cy="95.1" r="1.8"/><circle cx="157.5" cy="128.3" r="1.8"/><circle cx="191.2" cy="140.7" r="1.8"/><circle cx="121.5" cy="109.0" r="1.8"/><circle cx="154.0" cy="92.8" r="1.8"/><circle cx="137.2" cy="136.0" r="1.8"/><circle cx="148.7" cy="83.6" r="1.8"/><circle cx="107.8" cy="130.5" r="1.8"/><circle cx="90.0" cy="158.2" r="1.8"/><circle cx="162.2" cy="132.4" r="1.8"/><circle cx="95.7" cy="113.6" r="1.8"/><circle cx="125.5" cy="160.4" r="1.8"/><circle cx="94.9" cy="140.3" r="1.8"/><circle cx="217.4" cy="164.4" r="1.8"/><circle cx="98.2" cy="128.5" r="1.8"/><circle cx="105.8" cy="115.9" r="1.8"/><circle cx="257.8" cy="96.4" r="1.8"/><circle cx="107.5" cy="109.9" r="1.8"/><circle cx="99.6" cy="114.1" r="1.8"/><circle cx="95.5" cy="107.1" r="1.8"/><circle cx="140.6" cy="131.6" r="1.8"/><circle cx="119.3" cy="119.2" r="1.8"/><circle cx="144.2" cy="120.7" r="1.8"/><circle cx="178.3" cy="130.2" r="1.8"/><circle cx="121.5" cy="149.5" r="1.8"/><circle cx="97.6" cy="117.7" r="1.8"/><circle cx="167.5" cy="155.1" r="1.8"/><circle cx="96.1" cy="144.1" r="1.8"/><circle cx="181.0" cy="114.6" r="1.8"/><circle cx="143.7" cy="140.5" r="1.8"/><circle cx="109.2" cy="117.0" r="1.8"/><circle cx="95.7" cy="129.5" r="1.8"/><circle cx="115.0" cy="113.7" r="1.8"/><circle cx="138.8" cy="141.8" r="1.8"/><circle cx="150.9" cy="159.6" r="1.8"/><circle cx="206.7" cy="131.0" r="1.8"/><circle cx="162.7" cy="132.5" r="1.8"/><circle cx="108.6" cy="157.0" r="1.8"/><circle cx="99.1" cy="139.7" r="1.8"/><circle cx="190.4" cy="160.6" r="1.8"/><circle cx="139.8" cy="122.6" r="1.8"/><circle cx="132.2" cy="133.0" r="1.8"/><circle cx="209.5" cy="124.8" r="1.8"/><circle cx="207.8" cy="121.7" r="1.8"/><circle cx="130.0" cy="111.8" r="1.8"/><circle cx="107.9" cy="128.0" r="1.8"/><circle cx="98.1" cy="137.6" r="1.8"/><circle cx="99.9" cy="106.5" r="1.8"/><circle cx="215.3" cy="103.2" r="1.8"/><circle cx="112.1" cy="128.5" r="1.8"/><circle cx="94.1" cy="132.3" r="1.8"/><circle cx="155.1" cy="137.1" r="1.8"/><circle cx="104.2" cy="98.8" r="1.8"/><circle cx="215.0" cy="136.5" r="1.8"/><circle cx="145.8" cy="106.8" r="1.8"/><circle cx="237.4" cy="136.7" r="1.8"/><circle cx="148.4" cy="133.8" r="1.8"/><circle cx="107.3" cy="109.7" r="1.8"/><circle cx="163.7" cy="140.8" r="1.8"/><circle cx="226.1" cy="128.6" r="1.8"/><circle cx="253.4" cy="148.6" r="1.8"/><circle cx="112.9" cy="143.9" r="1.8"/><circle cx="244.1" cy="109.8" r="1.8"/><circle cx="145.6" cy="112.7" r="1.8"/><circle cx="141.1" cy="149.4" r="1.8"/><circle cx="105.7" cy="150.3" r="1.8"/><circle cx="178.1" cy="138.8" r="1.8"/><circle cx="105.0" cy="143.7" r="1.8"/><circle cx="193.1" cy="114.3" r="1.8"/><circle cx="120.9" cy="141.6" r="1.8"/><circle cx="155.3" cy="132.9" r="1.8"/><circle cx="195.5" cy="106.2" r="1.8"/><circle cx="145.0" cy="104.0" r="1.8"/><circle cx="121.3" cy="129.4" r="1.8"/><circle cx="90.9" cy="96.7" r="1.8"/><circle cx="187.0" cy="128.2" r="1.8"/><circle cx="146.6" cy="130.3" r="1.8"/><circle cx="138.9" cy="125.3" r="1.8"/><circle cx="163.1" cy="131.7" r="1.8"/><circle cx="128.5" cy="114.0" r="1.8"/><circle cx="140.2" cy="119.2" r="1.8"/><circle cx="254.5" cy="141.6" r="1.8"/><circle cx="176.6" cy="121.4" r="1.8"/><circle cx="118.3" cy="136.7" r="1.8"/><circle cx="106.4" cy="128.2" r="1.8"/><circle cx="154.7" cy="103.6" r="1.8"/><circle cx="102.7" cy="119.3" r="1.8"/><circle cx="188.5" cy="92.1" r="1.8"/><circle cx="209.9" cy="125.9" r="1.8"/><circle cx="105.3" cy="138.0" r="1.8"/><circle cx="168.1" cy="119.3" r="1.8"/><circle cx="178.6" cy="106.8" r="1.8"/><circle cx="131.3" cy="91.6" r="1.8"/><circle cx="160.2" cy="152.9" r="1.8"/><circle cx="261.6" cy="102.5" r="1.8"/><circle cx="119.4" cy="121.2" r="1.8"/><circle cx="172.8" cy="125.8" r="1.8"/><circle cx="107.7" cy="157.3" r="1.8"/><circle cx="180.9" cy="148.5" r="1.8"/><circle cx="108.0" cy="157.6" r="1.8"/><circle cx="200.0" cy="127.0" r="1.8"/><circle cx="174.6" cy="116.9" r="1.8"/><circle cx="175.5" cy="108.9" r="1.8"/><circle cx="121.8" cy="127.0" r="1.8"/><circle cx="181.7" cy="102.6" r="1.8"/><circle cx="180.1" cy="102.4" r="1.8"/><circle cx="150.5" cy="157.2" r="1.8"/><circle cx="105.5" cy="130.8" r="1.8"/><circle cx="94.3" cy="151.5" r="1.8"/><circle cx="104.5" cy="145.7" r="1.8"/><circle cx="106.6" cy="121.0" r="1.8"/><circle cx="171.4" cy="127.6" r="1.8"/><circle cx="193.1" cy="93.9" r="1.8"/><circle cx="104.4" cy="116.0" r="1.8"/><circle cx="93.2" cy="129.0" r="1.8"/><circle cx="163.0" cy="125.1" r="1.8"/><circle cx="101.2" cy="112.7" r="1.8"/><circle cx="186.3" cy="140.4" r="1.8"/><circle cx="134.7" cy="112.4" r="1.8"/><circle cx="170.2" cy="130.0" r="1.8"/><circle cx="122.1" cy="102.4" r="1.8"/><circle cx="161.4" cy="95.9" r="1.8"/><circle cx="192.5" cy="87.9" r="1.8"/><circle cx="114.5" cy="128.1" r="1.8"/><circle cx="103.8" cy="153.4" r="1.8"/><circle cx="123.4" cy="160.5" r="1.8"/><circle cx="89.8" cy="130.9" r="1.8"/><circle cx="129.9" cy="154.8" r="1.8"/><circle cx="146.7" cy="159.6" r="1.8"/><circle cx="156.3" cy="132.2" r="1.8"/><circle cx="99.4" cy="145.6" r="1.8"/><circle cx="101.8" cy="110.0" r="1.8"/><circle cx="90.6" cy="129.4" r="1.8"/><circle cx="229.5" cy="118.0" r="1.8"/><circle cx="89.9" cy="120.7" r="1.8"/><circle cx="109.6" cy="139.5" r="1.8"/><circle cx="143.9" cy="147.9" r="1.8"/><circle cx="149.4" cy="164.1" r="1.8"/><circle cx="105.0" cy="90.6" r="1.8"/><circle cx="117.3" cy="158.8" r="1.8"/><circle cx="159.8" cy="150.2" r="1.8"/><circle cx="117.9" cy="124.3" r="1.8"/><circle cx="102.1" cy="118.4" r="1.8"/><circle cx="154.3" cy="118.3" r="1.8"/><circle cx="134.7" cy="122.2" r="1.8"/><circle cx="124.5" cy="143.4" r="1.8"/><circle cx="158.4" cy="108.2" r="1.8"/><circle cx="190.0" cy="120.3" r="1.8"/><circle cx="162.1" cy="155.2" r="1.8"/><circle cx="91.5" cy="90.4" r="1.8"/><circle cx="163.5" cy="131.7" r="1.8"/><circle cx="218.8" cy="155.2" r="1.8"/><circle cx="175.7" cy="136.5" r="1.8"/><circle cx="165.3" cy="139.0" r="1.8"/><circle cx="106.2" cy="102.8" r="1.8"/><circle cx="99.5" cy="158.8" r="1.8"/><circle cx="150.8" cy="120.8" r="1.8"/><circle cx="98.5" cy="145.8" r="1.8"/><circle cx="183.2" cy="113.3" r="1.8"/><circle cx="112.0" cy="119.9" r="1.8"/><circle cx="240.7" cy="136.0" r="1.8"/><circle cx="110.1" cy="125.2" r="1.8"/><circle cx="149.1" cy="101.0" r="1.8"/><circle cx="129.0" cy="152.4" r="1.8"/><circle cx="153.4" cy="126.9" r="1.8"/><circle cx="175.4" cy="122.3" r="1.8"/><circle cx="205.5" cy="131.5" r="1.8"/><circle cx="150.1" cy="141.8" r="1.8"/><circle cx="215.0" cy="136.2" r="1.8"/><circle cx="122.5" cy="143.6" r="1.8"/><circle cx="144.7" cy="129.6" r="1.8"/><circle cx="89.7" cy="105.9" r="1.8"/><circle cx="192.0" cy="102.5" r="1.8"/><circle cx="134.1" cy="110.7" r="1.8"/><circle cx="136.7" cy="108.6" r="1.8"/><circle cx="91.4" cy="111.5" r="1.8"/><circle cx="163.4" cy="129.6" r="1.8"/><circle cx="203.2" cy="130.9" r="1.8"/><circle cx="107.7" cy="116.9" r="1.8"/><circle cx="239.9" cy="107.3" r="1.8"/><circle cx="205.1" cy="151.4" r="1.8"/><circle cx="154.2" cy="118.2" r="1.8"/><circle cx="104.9" cy="115.3" r="1.8"/><circle cx="136.1" cy="112.7" r="1.8"/><circle cx="197.9" cy="152.9" r="1.8"/><circle cx="91.8" cy="162.9" r="1.8"/><circle cx="94.5" cy="132.2" r="1.8"/><circle cx="173.1" cy="119.1" r="1.8"/><circle cx="225.2" cy="149.4" r="1.8"/><circle cx="195.9" cy="116.5" r="1.8"/><circle cx="106.2" cy="130.1" r="1.8"/><circle cx="193.4" cy="120.0" r="1.8"/><circle cx="184.4" cy="133.2" r="1.8"/><circle cx="160.1" cy="151.1" r="1.8"/><circle cx="212.3" cy="134.9" r="1.8"/><circle cx="174.9" cy="108.5" r="1.8"/><circle cx="107.1" cy="97.6" r="1.8"/><circle cx="166.0" cy="146.3" r="1.8"/><circle cx="125.5" cy="101.2" r="1.8"/><circle cx="112.1" cy="122.2" r="1.8"/><circle cx="190.3" cy="119.3" r="1.8"/><circle cx="134.9" cy="96.9" r="1.8"/><circle cx="138.1" cy="126.1" r="1.8"/><circle cx="112.1" cy="117.9" r="1.8"/><circle cx="147.2" cy="109.7" r="1.8"/><circle cx="138.9" cy="105.9" r="1.8"/><circle cx="126.0" cy="95.7" r="1.8"/><circle cx="96.0" cy="111.8" r="1.8"/><circle cx="95.6" cy="132.4" r="1.8"/><circle cx="125.3" cy="123.6" r="1.8"/><circle cx="213.1" cy="114.9" r="1.8"/><circle cx="193.5" cy="138.7" r="1.8"/><circle cx="165.0" cy="139.3" r="1.8"/><circle cx="235.3" cy="121.4" r="1.8"/><circle cx="103.5" cy="111.5" r="1.8"/><circle cx="92.8" cy="122.2" r="1.8"/><circle cx="135.6" cy="101.7" r="1.8"/><circle cx="178.7" cy="101.8" r="1.8"/><circle cx="154.0" cy="122.6" r="1.8"/><circle cx="153.6" cy="121.0" r="1.8"/><circle cx="107.6" cy="127.3" r="1.8"/><circle cx="143.9" cy="141.2" r="1.8"/><circle cx="130.8" cy="92.4" r="1.8"/><circle cx="188.3" cy="149.0" r="1.8"/><circle cx="129.0" cy="124.2" r="1.8"/><circle cx="165.8" cy="106.9" r="1.8"/><circle cx="91.5" cy="117.9" r="1.8"/><circle cx="186.2" cy="129.7" r="1.8"/><circle cx="99.9" cy="118.5" r="1.8"/><circle cx="167.8" cy="120.4" r="1.8"/><circle cx="164.8" cy="101.5" r="1.8"/><circle cx="149.4" cy="112.5" r="1.8"/><circle cx="186.8" cy="158.3" r="1.8"/><circle cx="169.6" cy="99.2" r="1.8"/><circle cx="161.2" cy="105.7" r="1.8"/><circle cx="108.5" cy="106.3" r="1.8"/><circle cx="162.5" cy="112.3" r="1.8"/><circle cx="102.5" cy="137.6" r="1.8"/><circle cx="112.8" cy="111.3" r="1.8"/><circle cx="160.6" cy="130.3" r="1.8"/><circle cx="105.1" cy="127.6" r="1.8"/><circle cx="186.0" cy="146.1" r="1.8"/><circle cx="183.7" cy="129.8" r="1.8"/><circle cx="225.8" cy="92.0" r="1.8"/><circle cx="95.9" cy="134.7" r="1.8"/><circle cx="176.4" cy="91.4" r="1.8"/><circle cx="141.1" cy="115.6" r="1.8"/><circle cx="129.4" cy="133.1" r="1.8"/><circle cx="102.1" cy="107.4" r="1.8"/><circle cx="124.9" cy="142.2" r="1.8"/><circle cx="95.1" cy="147.5" r="1.8"/><circle cx="120.6" cy="102.4" r="1.8"/><circle cx="121.4" cy="133.5" r="1.8"/><circle cx="192.9" cy="122.3" r="1.8"/><circle cx="90.8" cy="104.9" r="1.8"/><circle cx="91.5" cy="120.3" r="1.8"/><circle cx="191.1" cy="108.1" r="1.8"/><circle cx="135.7" cy="132.7" r="1.8"/><circle cx="117.1" cy="103.9" r="1.8"/><circle cx="120.4" cy="120.2" r="1.8"/><circle cx="172.5" cy="92.4" r="1.8"/><circle cx="107.7" cy="129.4" r="1.8"/><circle cx="184.7" cy="111.7" r="1.8"/><circle cx="175.0" cy="129.9" r="1.8"/><circle cx="236.7" cy="132.5" r="1.8"/><circle cx="173.3" cy="125.8" r="1.8"/><circle cx="268.4" cy="100.3" r="1.8"/><circle cx="109.8" cy="119.5" r="1.8"/><circle cx="153.4" cy="153.3" r="1.8"/><circle cx="203.2" cy="142.6" r="1.8"/><circle cx="204.6" cy="129.3" r="1.8"/><circle cx="111.2" cy="116.1" r="1.8"/><circle cx="119.8" cy="139.8" r="1.8"/><circle cx="184.8" cy="152.6" r="1.8"/><circle cx="135.6" cy="144.2" r="1.8"/><circle cx="157.3" cy="133.7" r="1.8"/><circle cx="114.7" cy="141.4" r="1.8"/><circle cx="184.4" cy="116.7" r="1.8"/><circle cx="102.8" cy="140.0" r="1.8"/><circle cx="162.0" cy="122.9" r="1.8"/><circle cx="115.4" cy="89.2" r="1.8"/><circle cx="127.1" cy="124.8" r="1.8"/><circle cx="157.8" cy="151.5" r="1.8"/><circle cx="95.7" cy="158.8" r="1.8"/><circle cx="141.5" cy="130.0" r="1.8"/><circle cx="137.6" cy="125.0" r="1.8"/><circle cx="113.9" cy="157.2" r="1.8"/><circle cx="135.1" cy="123.6" r="1.8"/><circle cx="101.0" cy="159.3" r="1.8"/><circle cx="117.3" cy="123.9" r="1.8"/><circle cx="144.3" cy="110.9" r="1.8"/><circle cx="117.3" cy="116.0" r="1.8"/><circle cx="99.4" cy="101.6" r="1.8"/><circle cx="176.3" cy="103.7" r="1.8"/><circle cx="159.3" cy="128.4" r="1.8"/><circle cx="108.8" cy="102.7" r="1.8"/><circle cx="104.9" cy="139.9" r="1.8"/><circle cx="144.5" cy="114.1" r="1.8"/><circle cx="144.5" cy="129.7" r="1.8"/><circle cx="100.5" cy="131.5" r="1.8"/><circle cx="211.9" cy="100.8" r="1.8"/><circle cx="96.3" cy="122.2" r="1.8"/><circle cx="147.9" cy="88.2" r="1.8"/><circle cx="129.6" cy="120.4" r="1.8"/><circle cx="127.4" cy="128.9" r="1.8"/><circle cx="90.6" cy="111.2" r="1.8"/><circle cx="131.0" cy="96.9" r="1.8"/><circle cx="138.0" cy="110.5" r="1.8"/><circle cx="96.2" cy="93.6" r="1.8"/><circle cx="179.7" cy="108.5" r="1.8"/><circle cx="98.7" cy="116.1" r="1.8"/><circle cx="232.0" cy="102.3" r="1.8"/><circle cx="164.4" cy="94.3" r="1.8"/><circle cx="130.6" cy="90.0" r="1.8"/><circle cx="141.7" cy="105.8" r="1.8"/><circle cx="178.1" cy="112.0" r="1.8"/><circle cx="102.0" cy="134.1" r="1.8"/><circle cx="102.0" cy="117.5" r="1.8"/><circle cx="116.8" cy="109.4" r="1.8"/><circle cx="121.6" cy="153.8" r="1.8"/><circle cx="120.2" cy="106.4" r="1.8"/><circle cx="156.5" cy="120.7" r="1.8"/><circle cx="174.1" cy="107.9" r="1.8"/><circle cx="141.8" cy="126.0" r="1.8"/><circle cx="207.1" cy="121.1" r="1.8"/><circle cx="176.0" cy="108.6" r="1.8"/><circle cx="126.1" cy="119.1" r="1.8"/><circle cx="194.6" cy="110.6" r="1.8"/><circle cx="153.3" cy="137.4" r="1.8"/><circle cx="169.2" cy="148.7" r="1.8"/><circle cx="189.1" cy="134.4" r="1.8"/><circle cx="97.1" cy="152.6" r="1.8"/><circle cx="151.8" cy="138.7" r="1.8"/><circle cx="115.6" cy="114.7" r="1.8"/><circle cx="91.9" cy="156.9" r="1.8"/><circle cx="133.0" cy="148.3" r="1.8"/><circle cx="147.1" cy="106.6" r="1.8"/><circle cx="155.8" cy="133.5" r="1.8"/><circle cx="193.3" cy="122.4" r="1.8"/><circle cx="136.2" cy="148.5" r="1.8"/><circle cx="99.0" cy="144.4" r="1.8"/><circle cx="189.1" cy="128.7" r="1.8"/><circle cx="151.8" cy="112.8" r="1.8"/><circle cx="155.9" cy="157.8" r="1.8"/><circle cx="148.7" cy="112.7" r="1.8"/><circle cx="139.5" cy="102.7" r="1.8"/><circle cx="177.4" cy="107.6" r="1.8"/><circle cx="215.6" cy="148.2" r="1.8"/><circle cx="143.9" cy="123.6" r="1.8"/><circle cx="128.8" cy="142.0" r="1.8"/><circle cx="200.7" cy="115.1" r="1.8"/><circle cx="155.2" cy="138.2" r="1.8"/><circle cx="102.6" cy="149.2" r="1.8"/><circle cx="221.0" cy="131.4" r="1.8"/><circle cx="134.4" cy="100.4" r="1.8"/><circle cx="162.3" cy="97.6" r="1.8"/><circle cx="166.9" cy="132.3" r="1.8"/><circle cx="98.9" cy="109.3" r="1.8"/><circle cx="154.0" cy="90.4" r="1.8"/><circle cx="132.1" cy="132.1" r="1.8"/><circle cx="104.5" cy="94.0" r="1.8"/><circle cx="166.2" cy="99.0" r="1.8"/><circle cx="200.6" cy="129.3" r="1.8"/><circle cx="109.3" cy="122.2" r="1.8"/><circle cx="114.9" cy="129.9" r="1.8"/><circle cx="111.8" cy="117.0" r="1.8"/><circle cx="204.2" cy="141.7" r="1.8"/><circle cx="98.0" cy="147.4" r="1.8"/><circle cx="92.1" cy="103.5" r="1.8"/><circle cx="193.4" cy="120.8" r="1.8"/><circle cx="137.1" cy="162.2" r="1.8"/><circle cx="93.0" cy="143.5" r="1.8"/><circle cx="197.8" cy="134.9" r="1.8"/><circle cx="109.3" cy="115.1" r="1.8"/><circle cx="169.6" cy="125.4" r="1.8"/><circle cx="89.4" cy="118.8" r="1.8"/><circle cx="162.8" cy="137.7" r="1.8"/><circle cx="101.6" cy="100.3" r="1.8"/><circle cx="100.3" cy="93.4" r="1.8"/><circle cx="98.8" cy="127.5" r="1.8"/><circle cx="134.1" cy="137.6" r="1.8"/><circle cx="93.5" cy="140.8" r="1.8"/><circle cx="96.8" cy="157.8" r="1.8"/><circle cx="103.0" cy="128.1" r="1.8"/><circle cx="127.3" cy="96.4" r="1.8"/><circle cx="176.7" cy="133.4" r="1.8"/><circle cx="135.2" cy="127.0" r="1.8"/><circle cx="117.9" cy="132.3" r="1.8"/><circle cx="93.6" cy="108.0" r="1.8"/><circle cx="162.9" cy="92.2" r="1.8"/><circle cx="142.0" cy="148.5" r="1.8"/><circle cx="123.1" cy="127.9" r="1.8"/><circle cx="101.1" cy="126.0" r="1.8"/><circle cx="224.2" cy="135.0" r="1.8"/><circle cx="180.9" cy="147.1" r="1.8"/><circle cx="158.8" cy="104.3" r="1.8"/><circle cx="185.1" cy="118.4" r="1.8"/><circle cx="121.3" cy="106.4" r="1.8"/><circle cx="90.9" cy="89.6" r="1.8"/><circle cx="205.6" cy="129.5" r="1.8"/><circle cx="151.0" cy="130.3" r="1.8"/><circle cx="118.1" cy="123.6" r="1.8"/><circle cx="132.4" cy="114.6" r="1.8"/><circle cx="188.4" cy="125.1" r="1.8"/><circle cx="118.8" cy="153.7" r="1.8"/><circle cx="199.0" cy="118.5" r="1.8"/><circle cx="122.3" cy="146.0" r="1.8"/><circle cx="194.8" cy="122.2" r="1.8"/><circle cx="160.1" cy="107.8" r="1.8"/><circle cx="193.8" cy="100.2" r="1.8"/><circle cx="150.4" cy="97.9" r="1.8"/><circle cx="99.2" cy="129.7" r="1.8"/><circle cx="127.5" cy="107.9" r="1.8"/><circle cx="95.6" cy="154.4" r="1.8"/><circle cx="99.9" cy="118.4" r="1.8"/><circle cx="222.3" cy="102.2" r="1.8"/><circle cx="124.2" cy="134.6" r="1.8"/><circle cx="138.0" cy="119.4" r="1.8"/><circle cx="119.9" cy="118.7" r="1.8"/><circle cx="187.2" cy="144.6" r="1.8"/><circle cx="106.9" cy="93.1" r="1.8"/><circle cx="183.1" cy="148.1" r="1.8"/><circle cx="199.1" cy="135.8" r="1.8"/><circle cx="134.6" cy="138.1" r="1.8"/><circle cx="130.6" cy="123.5" r="1.8"/><circle cx="182.4" cy="132.1" r="1.8"/><circle cx="143.2" cy="111.4" r="1.8"/><circle cx="159.1" cy="121.4" r="1.8"/><circle cx="264.9" cy="113.4" r="1.8"/><circle cx="165.9" cy="127.0" r="1.8"/><circle cx="92.1" cy="113.7" r="1.8"/><circle cx="194.0" cy="108.9" r="1.8"/><circle cx="265.0" cy="125.6" r="1.8"/><circle cx="97.8" cy="138.7" r="1.8"/><circle cx="160.6" cy="117.8" r="1.8"/><circle cx="134.6" cy="103.9" r="1.8"/><circle cx="177.9" cy="123.4" r="1.8"/><circle cx="191.7" cy="109.6" r="1.8"/><circle cx="91.3" cy="132.1" r="1.8"/><circle cx="172.3" cy="116.1" r="1.8"/><circle cx="151.0" cy="97.9" r="1.8"/><circle cx="141.8" cy="92.8" r="1.8"/><circle cx="103.3" cy="129.5" r="1.8"/><circle cx="126.1" cy="117.3" r="1.8"/><circle cx="119.9" cy="143.1" r="1.8"/><circle cx="115.5" cy="102.1" r="1.8"/><circle cx="170.4" cy="130.7" r="1.8"/><circle cx="115.6" cy="149.6" r="1.8"/><circle cx="109.1" cy="132.2" r="1.8"/><circle cx="155.3" cy="116.3" r="1.8"/><circle cx="164.4" cy="151.7" r="1.8"/><circle cx="113.2" cy="100.7" r="1.8"/><circle cx="175.5" cy="119.6" r="1.8"/><circle cx="94.7" cy="122.6" r="1.8"/><circle cx="182.0" cy="155.8" r="1.8"/><circle cx="140.6" cy="99.9" r="1.8"/><circle cx="161.7" cy="106.8" r="1.8"/><circle cx="140.5" cy="145.3" r="1.8"/><circle cx="102.0" cy="109.4" r="1.8"/><circle cx="179.8" cy="97.4" r="1.8"/><circle cx="139.6" cy="128.6" r="1.8"/><circle cx="101.0" cy="127.0" r="1.8"/><circle cx="193.5" cy="131.8" r="1.8"/><circle cx="117.0" cy="109.0" r="1.8"/><circle cx="145.6" cy="126.7" r="1.8"/><circle cx="123.2" cy="128.5" r="1.8"/><circle cx="127.8" cy="152.6" r="1.8"/><circle cx="133.3" cy="157.0" r="1.8"/><circle cx="146.2" cy="101.8" r="1.8"/><circle cx="137.4" cy="88.3" r="1.8"/><circle cx="176.6" cy="103.4" r="1.8"/><circle cx="108.7" cy="133.2" r="1.8"/><circle cx="189.4" cy="122.8" r="1.8"/><circle cx="91.5" cy="113.9" r="1.8"/><circle cx="89.4" cy="125.3" r="1.8"/><circle cx="111.6" cy="150.0" r="1.8"/><circle cx="91.2" cy="134.0" r="1.8"/><circle cx="264.1" cy="129.2" r="1.8"/><circle cx="103.1" cy="136.8" r="1.8"/><circle cx="110.1" cy="103.9" r="1.8"/><circle cx="157.3" cy="164.2" r="1.8"/><circle cx="225.8" cy="97.7" r="1.8"/><circle cx="215.7" cy="115.1" r="1.8"/><circle cx="187.9" cy="92.2" r="1.8"/><circle cx="105.0" cy="117.9" r="1.8"/><circle cx="130.3" cy="106.3" r="1.8"/><circle cx="147.9" cy="113.4" r="1.8"/><circle cx="181.8" cy="110.6" r="1.8"/><circle cx="94.7" cy="132.4" r="1.8"/><circle cx="176.6" cy="136.9" r="1.8"/><circle cx="254.4" cy="108.7" r="1.8"/><circle cx="142.5" cy="132.7" r="1.8"/><circle cx="190.6" cy="101.8" r="1.8"/><circle cx="95.4" cy="104.7" r="1.8"/><circle cx="156.4" cy="131.0" r="1.8"/><circle cx="173.2" cy="113.8" r="1.8"/><circle cx="204.3" cy="119.8" r="1.8"/><circle cx="95.7" cy="124.4" r="1.8"/><circle cx="139.8" cy="97.4" r="1.8"/><circle cx="100.9" cy="120.6" r="1.8"/><circle cx="198.9" cy="116.5" r="1.8"/><circle cx="163.0" cy="162.5" r="1.8"/><circle cx="149.2" cy="108.7" r="1.8"/><circle cx="151.5" cy="151.9" r="1.8"/><circle cx="102.2" cy="129.6" r="1.8"/><circle cx="109.9" cy="129.6" r="1.8"/><circle cx="199.8" cy="148.0" r="1.8"/><circle cx="194.6" cy="112.9" r="1.8"/><circle cx="125.9" cy="129.8" r="1.8"/><circle cx="153.2" cy="114.1" r="1.8"/><circle cx="187.4" cy="149.9" r="1.8"/><circle cx="116.4" cy="97.6" r="1.8"/><circle cx="124.0" cy="152.0" r="1.8"/><circle cx="168.9" cy="137.7" r="1.8"/><circle cx="128.9" cy="136.0" r="1.8"/><circle cx="185.4" cy="105.7" r="1.8"/><circle cx="190.4" cy="163.0" r="1.8"/><circle cx="147.9" cy="116.9" r="1.8"/><circle cx="143.9" cy="126.1" r="1.8"/><circle cx="183.6" cy="138.1" r="1.8"/><circle cx="149.1" cy="106.4" r="1.8"/><circle cx="130.7" cy="150.3" r="1.8"/><circle cx="173.7" cy="137.9" r="1.8"/><circle cx="93.4" cy="106.2" r="1.8"/><circle cx="159.6" cy="128.6" r="1.8"/><circle cx="163.7" cy="138.8" r="1.8"/><circle cx="164.6" cy="111.0" r="1.8"/><circle cx="204.6" cy="131.4" r="1.8"/><circle cx="121.3" cy="134.9" r="1.8"/><circle cx="142.9" cy="127.6" r="1.8"/><circle cx="262.7" cy="114.0" r="1.8"/><circle cx="170.1" cy="144.2" r="1.8"/><circle cx="191.1" cy="115.2" r="1.8"/><circle cx="157.4" cy="124.4" r="1.8"/><circle cx="105.6" cy="126.6" r="1.8"/><circle cx="187.0" cy="106.7" r="1.8"/><circle cx="91.0" cy="138.9" r="1.8"/><circle cx="166.5" cy="114.7" r="1.8"/><circle cx="226.2" cy="126.9" r="1.8"/><circle cx="185.9" cy="133.0" r="1.8"/><circle cx="161.3" cy="106.6" r="1.8"/><circle cx="93.8" cy="146.4" r="1.8"/><circle cx="166.8" cy="136.2" r="1.8"/><circle cx="176.4" cy="104.1" r="1.8"/><circle cx="111.9" cy="106.6" r="1.8"/><circle cx="111.1" cy="138.8" r="1.8"/><circle cx="167.5" cy="105.8" r="1.8"/><circle cx="173.7" cy="135.7" r="1.8"/><circle cx="125.1" cy="91.9" r="1.8"/><circle cx="133.2" cy="103.9" r="1.8"/><circle cx="175.6" cy="110.8" r="1.8"/><circle cx="101.4" cy="88.1" r="1.8"/><circle cx="178.4" cy="113.2" r="1.8"/><circle cx="232.5" cy="134.0" r="1.8"/><circle cx="117.3" cy="113.2" r="1.8"/><circle cx="112.2" cy="117.2" r="1.8"/><circle cx="100.6" cy="95.8" r="1.8"/><circle cx="151.3" cy="147.2" r="1.8"/><circle cx="249.8" cy="104.3" r="1.8"/><circle cx="90.4" cy="162.0" r="1.8"/><circle cx="108.6" cy="158.1" r="1.8"/><circle cx="219.1" cy="150.4" r="1.8"/><circle cx="206.2" cy="115.4" r="1.8"/><circle cx="250.2" cy="111.0" r="1.8"/><circle cx="109.6" cy="137.6" r="1.8"/><circle cx="133.1" cy="103.6" r="1.8"/><circle cx="185.5" cy="113.5" r="1.8"/><circle cx="153.7" cy="100.2" r="1.8"/><circle cx="203.8" cy="134.8" r="1.8"/><circle cx="106.4" cy="116.0" r="1.8"/><circle cx="109.9" cy="123.7" r="1.8"/><circle cx="193.0" cy="110.4" r="1.8"/><circle cx="104.9" cy="115.8" r="1.8"/><circle cx="183.1" cy="119.6" r="1.8"/><circle cx="92.2" cy="105.0" r="1.8"/><circle cx="135.4" cy="118.8" r="1.8"/><circle cx="150.4" cy="104.5" r="1.8"/><circle cx="133.1" cy="119.3" r="1.8"/><circle cx="189.2" cy="123.4" r="1.8"/><circle cx="129.9" cy="100.5" r="1.8"/><circle cx="142.7" cy="99.9" r="1.8"/><circle cx="251.7" cy="93.8" r="1.8"/><circle cx="125.4" cy="106.7" r="1.8"/><circle cx="160.3" cy="124.5" r="1.8"/><circle cx="113.9" cy="116.0" r="1.8"/><circle cx="91.6" cy="116.7" r="1.8"/><circle cx="217.9" cy="157.2" r="1.8"/><circle cx="89.6" cy="143.8" r="1.8"/><circle cx="115.8" cy="87.7" r="1.8"/><circle cx="161.6" cy="121.3" r="1.8"/><circle cx="115.2" cy="122.5" r="1.8"/><circle cx="248.9" cy="116.6" r="1.8"/><circle cx="160.6" cy="146.0" r="1.8"/><circle cx="160.9" cy="96.2" r="1.8"/><circle cx="100.8" cy="102.9" r="1.8"/><circle cx="169.0" cy="124.1" r="1.8"/><circle cx="191.9" cy="109.9" r="1.8"/><circle cx="156.2" cy="102.2" r="1.8"/><circle cx="168.2" cy="110.0" r="1.8"/><circle cx="97.0" cy="134.3" r="1.8"/><circle cx="99.1" cy="116.1" r="1.8"/><circle cx="147.7" cy="117.3" r="1.8"/><circle cx="117.5" cy="113.9" r="1.8"/><circle cx="95.8" cy="142.2" r="1.8"/><circle cx="117.4" cy="114.6" r="1.8"/><circle cx="92.8" cy="120.1" r="1.8"/><circle cx="158.6" cy="115.2" r="1.8"/><circle cx="173.2" cy="116.0" r="1.8"/><circle cx="160.4" cy="150.7" r="1.8"/><circle cx="105.6" cy="102.2" r="1.8"/><circle cx="93.7" cy="104.5" r="1.8"/><circle cx="137.0" cy="148.8" r="1.8"/><circle cx="219.7" cy="122.4" r="1.8"/><circle cx="106.6" cy="138.4" r="1.8"/><circle cx="170.7" cy="130.0" r="1.8"/><circle cx="169.6" cy="99.3" r="1.8"/><circle cx="109.5" cy="109.3" r="1.8"/><circle cx="91.4" cy="144.3" r="1.8"/><circle cx="122.9" cy="118.3" r="1.8"/><circle cx="122.6" cy="83.1" r="1.8"/><circle cx="116.6" cy="115.3" r="1.8"/><circle cx="107.2" cy="111.5" r="1.8"/><circle cx="125.3" cy="117.8" r="1.8"/><circle cx="139.5" cy="123.6" r="1.8"/><circle cx="120.9" cy="132.0" r="1.8"/><circle cx="93.6" cy="114.3" r="1.8"/><circle cx="147.3" cy="146.9" r="1.8"/><circle cx="157.6" cy="144.1" r="1.8"/><circle cx="164.4" cy="104.1" r="1.8"/><circle cx="130.6" cy="135.2" r="1.8"/><circle cx="117.3" cy="148.1" r="1.8"/><circle cx="95.4" cy="113.7" r="1.8"/><circle cx="111.3" cy="118.5" r="1.8"/><circle cx="133.5" cy="126.8" r="1.8"/><circle cx="132.3" cy="123.4" r="1.8"/><circle cx="146.4" cy="135.4" r="1.8"/><circle cx="137.6" cy="113.3" r="1.8"/><circle cx="162.9" cy="132.6" r="1.8"/><circle cx="189.5" cy="122.0" r="1.8"/><circle cx="105.4" cy="99.1" r="1.8"/><circle cx="165.1" cy="150.6" r="1.8"/><circle cx="105.6" cy="134.7" r="1.8"/><circle cx="110.1" cy="137.0" r="1.8"/><circle cx="109.3" cy="139.6" r="1.8"/><circle cx="109.6" cy="108.8" r="1.8"/><circle cx="91.9" cy="108.3" r="1.8"/><circle cx="190.5" cy="121.6" r="1.8"/><circle cx="98.7" cy="144.3" r="1.8"/><circle cx="96.7" cy="141.3" r="1.8"/><circle cx="164.8" cy="82.2" r="1.8"/><circle cx="172.7" cy="113.3" r="1.8"/><circle cx="184.0" cy="142.6" r="1.8"/><circle cx="124.8" cy="96.7" r="1.8"/><circle cx="171.0" cy="88.0" r="1.8"/><circle cx="156.8" cy="135.5" r="1.8"/><circle cx="118.4" cy="113.5" r="1.8"/><circle cx="93.4" cy="127.8" r="1.8"/><circle cx="165.3" cy="107.5" r="1.8"/><circle cx="170.4" cy="136.8" r="1.8"/><circle cx="152.9" cy="104.1" r="1.8"/><circle cx="248.3" cy="131.5" r="1.8"/><circle cx="206.6" cy="142.2" r="1.8"/><circle cx="166.4" cy="111.4" r="1.8"/><circle cx="113.4" cy="118.5" r="1.8"/><circle cx="152.0" cy="124.3" r="1.8"/><circle cx="124.5" cy="121.3" r="1.8"/><circle cx="176.4" cy="119.5" r="1.8"/><circle cx="167.4" cy="137.0" r="1.8"/><circle cx="98.5" cy="123.8" r="1.8"/><circle cx="133.5" cy="159.3" r="1.8"/><circle cx="101.8" cy="154.2" r="1.8"/><circle cx="224.5" cy="135.6" r="1.8"/><circle cx="187.4" cy="126.2" r="1.8"/><circle cx="178.6" cy="127.7" r="1.8"/><circle cx="118.9" cy="110.1" r="1.8"/><circle cx="154.6" cy="102.2" r="1.8"/><circle cx="151.5" cy="127.0" r="1.8"/><circle cx="115.7" cy="138.7" r="1.8"/><circle cx="104.8" cy="115.9" r="1.8"/><circle cx="143.4" cy="113.3" r="1.8"/><circle cx="169.1" cy="134.1" r="1.8"/><circle cx="170.8" cy="137.3" r="1.8"/><circle cx="185.4" cy="137.0" r="1.8"/><circle cx="168.3" cy="121.3" r="1.8"/><circle cx="96.2" cy="116.5" r="1.8"/><circle cx="100.0" cy="127.9" r="1.8"/><circle cx="108.3" cy="150.7" r="1.8"/><circle cx="108.0" cy="129.8" r="1.8"/><circle cx="173.4" cy="148.8" r="1.8"/><circle cx="110.5" cy="116.1" r="1.8"/><circle cx="144.9" cy="91.7" r="1.8"/><circle cx="93.6" cy="101.3" r="1.8"/><circle cx="232.4" cy="136.1" r="1.8"/><circle cx="104.5" cy="144.4" r="1.8"/><circle cx="217.0" cy="153.1" r="1.8"/><circle cx="195.1" cy="114.2" r="1.8"/><circle cx="166.3" cy="111.5" r="1.8"/><circle cx="127.7" cy="106.9" r="1.8"/><circle cx="129.1" cy="116.4" r="1.8"/><circle cx="91.6" cy="149.2" r="1.8"/><circle cx="147.4" cy="164.3" r="1.8"/><circle cx="93.9" cy="100.0" r="1.8"/><circle cx="91.2" cy="141.4" r="1.8"/><circle cx="95.7" cy="83.5" r="1.8"/><circle cx="229.1" cy="147.1" r="1.8"/><circle cx="176.4" cy="143.6" r="1.8"/><circle cx="146.5" cy="118.2" r="1.8"/><circle cx="115.0" cy="109.7" r="1.8"/><circle cx="184.9" cy="135.5" r="1.8"/><circle cx="194.6" cy="111.2" r="1.8"/><circle cx="181.7" cy="151.4" r="1.8"/><circle cx="160.6" cy="134.5" r="1.8"/><circle cx="110.6" cy="149.5" r="1.8"/><circle cx="168.0" cy="135.7" r="1.8"/><circle cx="132.7" cy="137.5" r="1.8"/><circle cx="140.5" cy="117.5" r="1.8"/><circle cx="129.0" cy="128.2" r="1.8"/><circle cx="119.4" cy="109.4" r="1.8"/><circle cx="129.7" cy="122.4" r="1.8"/><circle cx="144.9" cy="93.9" r="1.8"/><circle cx="91.2" cy="145.6" r="1.8"/><circle cx="145.8" cy="107.5" r="1.8"/><circle cx="128.4" cy="140.6" r="1.8"/><circle cx="157.3" cy="106.6" r="1.8"/><circle cx="209.6" cy="120.4" r="1.8"/><circle cx="140.4" cy="118.7" r="1.8"/><circle cx="186.5" cy="136.4" r="1.8"/><circle cx="130.9" cy="163.1" r="1.8"/><circle cx="182.9" cy="147.4" r="1.8"/><circle cx="174.0" cy="129.5" r="1.8"/><circle cx="240.0" cy="108.3" r="1.8"/><circle cx="163.7" cy="152.0" r="1.8"/><circle cx="103.6" cy="110.4" r="1.8"/><circle cx="224.2" cy="102.6" r="1.8"/><circle cx="98.8" cy="117.1" r="1.8"/><circle cx="167.2" cy="139.9" r="1.8"/><circle cx="115.5" cy="102.8" r="1.8"/><circle cx="104.0" cy="123.0" r="1.8"/><circle cx="162.2" cy="105.8" r="1.8"/><circle cx="188.1" cy="132.1" r="1.8"/><circle cx="154.1" cy="140.3" r="1.8"/><circle cx="136.8" cy="132.9" r="1.8"/><circle cx="206.9" cy="131.6" r="1.8"/><circle cx="140.6" cy="136.3" r="1.8"/><circle cx="162.9" cy="142.5" r="1.8"/><circle cx="141.6" cy="100.4" r="1.8"/><circle cx="176.6" cy="136.1" r="1.8"/><circle cx="106.5" cy="149.4" r="1.8"/><circle cx="96.6" cy="143.7" r="1.8"/><circle cx="151.5" cy="113.5" r="1.8"/><circle cx="218.5" cy="113.2" r="1.8"/><circle cx="95.9" cy="108.6" r="1.8"/><circle cx="133.5" cy="96.7" r="1.8"/><circle cx="126.9" cy="133.1" r="1.8"/><circle cx="194.3" cy="141.2" r="1.8"/><circle cx="207.1" cy="120.1" r="1.8"/><circle cx="184.4" cy="95.9" r="1.8"/><circle cx="90.5" cy="122.6" r="1.8"/><circle cx="183.5" cy="132.7" r="1.8"/><circle cx="102.2" cy="151.9" r="1.8"/><circle cx="137.4" cy="128.1" r="1.8"/><circle cx="255.0" cy="98.6" r="1.8"/><circle cx="184.7" cy="121.4" r="1.8"/><circle cx="193.9" cy="95.0" r="1.8"/><circle cx="222.6" cy="97.3" r="1.8"/><circle cx="154.3" cy="139.9" r="1.8"/><circle cx="170.8" cy="147.8" r="1.8"/><circle cx="222.6" cy="137.1" r="1.8"/><circle cx="212.1" cy="128.6" r="1.8"/><circle cx="158.7" cy="140.7" r="1.8"/><circle cx="93.9" cy="108.8" r="1.8"/><circle cx="101.0" cy="109.3" r="1.8"/><circle cx="176.0" cy="98.0" r="1.8"/><circle cx="135.3" cy="132.8" r="1.8"/><circle cx="288.5" cy="69.8" r="1.8"/><circle cx="283.0" cy="91.1" r="1.8"/><circle cx="283.8" cy="94.9" r="1.8"/><circle cx="308.4" cy="92.7" r="1.8"/><circle cx="302.1" cy="97.1" r="1.8"/><circle cx="316.2" cy="96.0" r="1.8"/><circle cx="321.7" cy="89.7" r="1.8"/><circle cx="327.0" cy="95.5" r="1.8"/><circle cx="353.5" cy="96.0" r="1.8"/><circle cx="354.1" cy="96.9" r="1.8"/><circle cx="401.9" cy="94.7" r="1.8"/><circle cx="405.8" cy="99.6" r="1.8"/><circle cx="380.6" cy="104.3" r="1.8"/><circle cx="429.6" cy="110.1" r="1.8"/><circle cx="272.5" cy="104.6" r="1.8"/><circle cx="273.3" cy="108.5" r="1.8"/><circle cx="273.9" cy="110.7" r="1.8"/><circle cx="280.8" cy="111.5" r="1.8"/><circle cx="278.3" cy="114.0" r="1.8"/><circle cx="270.0" cy="115.7" r="1.8"/><circle cx="289.4" cy="111.3" r="1.8"/><circle cx="294.9" cy="112.4" r="1.8"/><circle cx="290.2" cy="118.2" r="1.8"/><circle cx="314.8" cy="107.4" r="1.8"/><circle cx="324.8" cy="114.6" r="1.8"/><circle cx="336.4" cy="106.3" r="1.8"/><circle cx="339.7" cy="107.9" r="1.8"/><circle cx="279.4" cy="121.5" r="1.8"/><circle cx="313.4" cy="120.4" r="1.8"/><circle cx="341.6" cy="121.8" r="1.8"/><circle cx="349.1" cy="118.7" r="1.8"/><circle cx="354.9" cy="119.8" r="1.8"/><circle cx="363.8" cy="115.7" r="1.8"/><circle cx="367.1" cy="115.1" r="1.8"/><circle cx="301.3" cy="125.6" r="1.8"/><circle cx="281.3" cy="128.7" r="1.8"/><circle cx="291.0" cy="129.0" r="1.8"/><circle cx="322.6" cy="130.9" r="1.8"/><circle cx="343.3" cy="128.7" r="1.8"/><circle cx="352.7" cy="131.4" r="1.8"/><circle cx="394.5" cy="126.5" r="1.8"/><circle cx="302.4" cy="135.9" r="1.8"/><circle cx="318.1" cy="135.9" r="1.8"/><circle cx="285.2" cy="140.6" r="1.8"/><circle cx="295.2" cy="141.7" r="1.8"/><circle cx="304.0" cy="141.7" r="1.8"/><circle cx="271.4" cy="141.7" r="1.8"/><circle cx="274.1" cy="143.3" r="1.8"/><circle cx="362.7" cy="142.2" r="1.8"/><circle cx="366.0" cy="144.2" r="1.8"/><circle cx="274.7" cy="146.7" r="1.8"/><circle cx="320.1" cy="147.5" r="1.8"/><circle cx="457.0" cy="135.3" r="1.8"/><circle cx="329.7" cy="159.1" r="1.8"/><circle cx="480.2" cy="155.8" r="1.8"/><circle cx="309.8" cy="172.1" r="1.8"/><circle cx="340.3" cy="170.5" r="1.8"/><circle cx="347.4" cy="174.3" r="1.8"/><circle cx="135.2" cy="54.1" r="1.8"/><circle cx="104.0" cy="68.0" r="1.8"/><circle cx="100.9" cy="75.7" r="1.8"/><circle cx="107.9" cy="76.7" r="1.8"/><circle cx="111.0" cy="74.8" r="1.8"/><circle cx="115.7" cy="74.3" r="1.8"/><circle cx="152.6" cy="71.0" r="1.8"/><circle cx="156.4" cy="70.6" r="1.8"/><circle cx="158.0" cy="80.0" r="1.8"/><circle cx="139.7" cy="80.2" r="1.8"/><circle cx="140.6" cy="80.2" r="1.8"/><circle cx="176.3" cy="79.0" r="1.8"/><circle cx="192.1" cy="64.9" r="1.8"/><circle cx="208.1" cy="65.4" r="1.8"/><circle cx="205.2" cy="73.4" r="1.8"/><circle cx="198.7" cy="75.5" r="1.8"/><circle cx="193.3" cy="81.9" r="1.8"/><circle cx="196.8" cy="81.4" r="1.8"/><circle cx="199.6" cy="87.3" r="1.8"/><circle cx="171.6" cy="86.1" r="1.8"/><circle cx="178.7" cy="85.4" r="1.8"/><circle cx="228.7" cy="60.7" r="1.8"/><circle cx="235.3" cy="76.0" r="1.8"/><circle cx="233.4" cy="85.1" r="1.8"/><circle cx="239.1" cy="90.1" r="1.8"/><circle cx="259.1" cy="87.3" r="1.8"/><circle cx="262.6" cy="87.3" r="1.8"/><circle cx="127.9" cy="190.0" r="1.8"/><circle cx="164.1" cy="186.0" r="1.8"/><circle cx="156.8" cy="179.2" r="1.8"/><circle cx="142.7" cy="177.7" r="1.8"/><circle cx="115.2" cy="177.0" r="1.8"/><circle cx="93.6" cy="174.0" r="1.8"/><circle cx="91.7" cy="171.9" r="1.8"/><circle cx="202.9" cy="181.3" r="1.8"/><circle cx="204.3" cy="171.9" r="1.8"/><circle cx="212.8" cy="166.0" r="1.8"/><circle cx="221.9" cy="165.0" r="1.8"/><circle cx="240.0" cy="178.4" r="1.8"/><circle cx="252.5" cy="175.9" r="1.8"/><circle cx="91.0" cy="165.3" r="1.8"/><circle cx="94.1" cy="164.1" r="1.8"/><circle cx="99.3" cy="166.0" r="1.8"/><circle cx="124.2" cy="168.8" r="1.8"/><circle cx="134.5" cy="170.7" r="1.8"/><circle cx="163.2" cy="167.2" r="1.8"/><circle cx="163.9" cy="168.8" r="1.8"/><circle cx="172.6" cy="166.9" r="1.8"/><circle cx="175.6" cy="167.6" r="1.8"/><circle cx="181.5" cy="166.9" r="1.8"/><circle cx="186.2" cy="166.0" r="1.8"/></g><path d="M89.1 123.1C138.1 124.4 198.1 124.0 258.1 122.4S398.1 120.2 480.5 119.4" stroke="#f5808a" stroke-width="0.6" fill="none"/><rect x="37.2" y="37.4" width="460.8" height="170.1" fill="none" stroke="#666" stroke-width="0.8"/><path d="M37.2 38.6h-4.6M37.2 81.1h-4.6M37.2 123.5h-4.6M37.2 166.0h-4.6M37.2 38.6V166.0M53.8 207.5v4.6M125.0 207.5v4.6M196.1 207.5v4.6M267.2 207.5v4.6M338.4 207.5v4.6M409.6 207.5v4.6M480.7 207.5v4.6M53.8 207.5H480.7" stroke="#444" stroke-width="0.8" fill="none"/><g font-family="Liberation Sans, sans-serif" fill="#0a0a0a" stroke="#0a0a0a" stroke-width="0.12" font-size="7.600" text-anchor="middle"><text x="267.0" y="32.9" font-size="7.700">Residuals vs Leverage</text><text x="53.8" y="224.4" font-size="7.650">0.000</text><text x="125.0" y="224.4" font-size="7.650">0.002</text><text x="196.1" y="224.4" font-size="7.650">0.004</text><text x="267.2" y="224.4" font-size="7.650">0.006</text><text x="338.4" y="224.4" font-size="7.650">0.008</text><text x="409.6" y="224.4" font-size="7.650">0.010</text><text x="480.7" y="224.4" font-size="7.650">0.012</text><text x="267.0" y="241.9">Leverage</text><text x="267.0" y="251.4">lm(y ~ x1 + x2)</text><text transform="translate(27.3 38.6) rotate(-90)" font-size="7.650">4</text><text transform="translate(27.3 81.1) rotate(-90)" font-size="7.650">2</text><text transform="translate(27.3 123.5) rotate(-90)" font-size="7.650">0</text><text transform="translate(27.3 166.0) rotate(-90)" font-size="7.650">-2</text><text transform="translate(8.5 122.2) rotate(-90)">Standardized residuals</text><text x="69.1" y="204.6" text-anchor="start">Cook's distance</text><text x="231.7" y="62.2" text-anchor="start" font-size="5.500">867</text><text x="285.9" y="71.2" text-anchor="end" font-size="5.500">265</text><text x="344.9" y="176.6" text-anchor="end" font-size="5.500">439</text></g><path d="M44.4 201.9H60.8" stroke="#f2606e" stroke-width="0.8" stroke-dasharray="2 1.6" fill="none"/></svg>
<div class="abs" style="left:0;top:289.20px;width:544.2px;height:2.6px;background:#4a525b"></div>
<svg style="left:14.40px;top:299.90px" width="91.2" height="73" viewBox="0 0 91.2 73"><rect width="91.2" height="73" fill="#fff"/><rect x="7.3" y="7.3" width="80.3" height="56.2" fill="none" stroke="#8d93a3" stroke-width="0.45"/><g fill="#111" opacity="0.85"><circle cx="65.8" cy="41.0" r="0.520"/><circle cx="41.1" cy="26.8" r="0.520"/><circle cx="38.7" cy="43.0" r="0.520"/><circle cx="12.4" cy="32.3" r="0.520"/><circle cx="44.5" cy="26.7" r="0.520"/><circle cx="40.7" cy="42.6" r="0.520"/><circle cx="38.1" cy="20.9" r="0.520"/><circle cx="48.4" cy="29.7" r="0.520"/><circle cx="49.7" cy="51.3" r="0.520"/><circle cx="31.7" cy="25.9" r="0.520"/><circle cx="33.9" cy="22.3" r="0.520"/><circle cx="38.8" cy="37.6" r="0.520"/><circle cx="53.0" cy="37.1" r="0.520"/><circle cx="51.4" cy="33.1" r="0.520"/><circle cx="28.8" cy="49.1" r="0.520"/><circle cx="31.0" cy="34.6" r="0.520"/><circle cx="53.5" cy="29.2" r="0.520"/><circle cx="63.7" cy="39.6" r="0.520"/><circle cx="44.2" cy="27.9" r="0.520"/><circle cx="36.3" cy="20.2" r="0.520"/><circle cx="57.9" cy="49.6" r="0.520"/><circle cx="40.8" cy="48.5" r="0.520"/><circle cx="53.4" cy="40.7" r="0.520"/><circle cx="63.4" cy="31.3" r="0.520"/><circle cx="52.2" cy="33.1" r="0.520"/><circle cx="45.5" cy="42.2" r="0.520"/><circle cx="53.5" cy="43.8" r="0.520"/><circle cx="36.8" cy="40.9" r="0.520"/><circle cx="42.4" cy="23.8" r="0.520"/><circle cx="37.6" cy="42.5" r="0.520"/><circle cx="42.1" cy="39.9" r="0.520"/><circle cx="38.7" cy="29.0" r="0.520"/><circle cx="42.3" cy="37.7" r="0.520"/><circle cx="40.0" cy="42.8" r="0.520"/><circle cx="45.7" cy="25.7" r="0.520"/><circle cx="45.4" cy="33.4" r="0.520"/><circle cx="48.2" cy="40.6" r="0.520"/><circle cx="61.6" cy="38.4" r="0.520"/><circle cx="25.9" cy="29.2" r="0.520"/><circle cx="60.3" cy="38.3" r="0.520"/><circle cx="41.7" cy="33.9" r="0.520"/><circle cx="29.7" cy="29.4" r="0.520"/><circle cx="42.5" cy="28.7" r="0.520"/><circle cx="45.7" cy="48.6" r="0.520"/><circle cx="57.5" cy="39.1" r="0.520"/><circle cx="31.7" cy="38.0" r="0.520"/><circle cx="47.2" cy="34.9" r="0.520"/><circle cx="46.0" cy="30.2" r="0.520"/><circle cx="24.2" cy="27.4" r="0.520"/><circle cx="30.2" cy="38.8" r="0.520"/><circle cx="51.9" cy="43.4" r="0.520"/><circle cx="53.0" cy="34.2" r="0.520"/><circle cx="57.8" cy="39.8" r="0.520"/><circle cx="51.1" cy="23.4" r="0.520"/><circle cx="49.4" cy="33.0" r="0.520"/><circle cx="46.1" cy="35.2" r="0.520"/><circle cx="59.3" cy="28.5" r="0.520"/><circle cx="34.4" cy="40.2" r="0.520"/><circle cx="42.9" cy="37.9" r="0.520"/><circle cx="49.3" cy="36.8" r="0.520"/><circle cx="25.5" cy="30.9" r="0.520"/><circle cx="60.5" cy="26.3" r="0.520"/><circle cx="35.0" cy="30.0" r="0.520"/><circle cx="43.7" cy="30.2" r="0.520"/><circle cx="70.7" cy="37.1" r="0.520"/><circle cx="34.5" cy="32.9" r="0.520"/><circle cx="38.2" cy="37.1" r="0.520"/><circle cx="63.5" cy="27.4" r="0.520"/><circle cx="31.5" cy="39.9" r="0.520"/><circle cx="39.4" cy="36.0" r="0.520"/><circle cx="50.9" cy="33.8" r="0.520"/><circle cx="50.1" cy="30.0" r="0.520"/><circle cx="51.8" cy="40.6" r="0.520"/><circle cx="49.1" cy="37.1" r="0.520"/><circle cx="60.9" cy="41.3" r="0.520"/><circle cx="56.9" cy="44.9" r="0.520"/><circle cx="51.8" cy="27.9" r="0.520"/><circle cx="36.3" cy="32.3" r="0.520"/><circle cx="36.0" cy="46.1" r="0.520"/><circle cx="21.5" cy="42.4" r="0.520"/><circle cx="52.9" cy="31.6" r="0.520"/><circle cx="22.5" cy="39.8" r="0.520"/><circle cx="55.3" cy="42.9" r="0.520"/><circle cx="67.0" cy="26.7" r="0.520"/><circle cx="31.7" cy="39.0" r="0.520"/><circle cx="36.3" cy="38.2" r="0.520"/><circle cx="38.8" cy="31.6" r="0.520"/><circle cx="54.7" cy="40.6" r="0.520"/><circle cx="34.1" cy="35.4" r="0.520"/><circle cx="43.0" cy="34.4" r="0.520"/><circle cx="38.3" cy="30.4" r="0.520"/><circle cx="41.6" cy="40.8" r="0.520"/><circle cx="60.3" cy="28.0" r="0.520"/><circle cx="32.9" cy="33.2" r="0.520"/><circle cx="45.5" cy="23.0" r="0.520"/><circle cx="47.9" cy="34.1" r="0.520"/><circle cx="55.0" cy="39.4" r="0.520"/><circle cx="29.3" cy="39.4" r="0.520"/><circle cx="58.1" cy="43.6" r="0.520"/><circle cx="49.9" cy="35.7" r="0.520"/><circle cx="55.2" cy="36.1" r="0.520"/><circle cx="45.5" cy="29.4" r="0.520"/><circle cx="24.7" cy="35.1" r="0.520"/><circle cx="36.8" cy="41.6" r="0.520"/><circle cx="54.5" cy="28.5" r="0.520"/><circle cx="45.0" cy="38.7" r="0.520"/><circle cx="44.0" cy="33.8" r="0.520"/><circle cx="66.3" cy="25.5" r="0.520"/><circle cx="71.3" cy="26.8" r="0.520"/><circle cx="44.2" cy="40.9" r="0.520"/><circle cx="68.0" cy="36.6" r="0.520"/><circle cx="20.4" cy="26.3" r="0.520"/><circle cx="19.8" cy="28.8" r="0.520"/><circle cx="55.1" cy="32.0" r="0.520"/><circle cx="41.4" cy="29.5" r="0.520"/><circle cx="51.6" cy="51.0" r="0.520"/><circle cx="50.9" cy="37.9" r="0.520"/><circle cx="43.5" cy="46.0" r="0.520"/><circle cx="52.9" cy="40.3" r="0.520"/><circle cx="46.4" cy="38.6" r="0.520"/><circle cx="26.0" cy="32.6" r="0.520"/><circle cx="47.3" cy="27.7" r="0.520"/><circle cx="46.9" cy="30.4" r="0.520"/><circle cx="66.8" cy="34.1" r="0.520"/><circle cx="30.9" cy="38.5" r="0.520"/><circle cx="44.8" cy="27.0" r="0.520"/><circle cx="39.5" cy="34.2" r="0.520"/><circle cx="43.0" cy="48.5" r="0.520"/><circle cx="64.7" cy="36.6" r="0.520"/><circle cx="49.2" cy="32.6" r="0.520"/><circle cx="39.0" cy="42.9" r="0.520"/><circle cx="46.5" cy="34.6" r="0.520"/><circle cx="53.9" cy="25.5" r="0.520"/><circle cx="32.6" cy="38.0" r="0.520"/><circle cx="41.4" cy="36.6" r="0.520"/><circle cx="63.3" cy="36.5" r="0.520"/><circle cx="55.0" cy="43.1" r="0.520"/><circle cx="44.1" cy="39.6" r="0.520"/><circle cx="38.8" cy="43.4" r="0.520"/><circle cx="42.7" cy="38.4" r="0.520"/><circle cx="25.8" cy="42.0" r="0.520"/><circle cx="56.0" cy="29.6" r="0.520"/><circle cx="48.7" cy="37.2" r="0.520"/><circle cx="46.3" cy="30.4" r="0.520"/><circle cx="28.9" cy="45.3" r="0.520"/><circle cx="35.9" cy="36.6" r="0.520"/><circle cx="50.8" cy="32.3" r="0.520"/><circle cx="47.7" cy="31.5" r="0.520"/><circle cx="38.6" cy="40.8" r="0.520"/><circle cx="50.7" cy="37.2" r="0.520"/><circle cx="56.0" cy="35.7" r="0.520"/><circle cx="36.4" cy="38.9" r="0.520"/><circle cx="38.2" cy="39.4" r="0.520"/><circle cx="34.1" cy="32.7" r="0.520"/><circle cx="30.6" cy="44.8" r="0.520"/><circle cx="54.3" cy="49.2" r="0.520"/><circle cx="50.8" cy="39.9" r="0.520"/><circle cx="48.7" cy="34.4" r="0.520"/><circle cx="30.4" cy="52.6" r="0.520"/><circle cx="31.9" cy="26.8" r="0.520"/><circle cx="43.8" cy="35.7" r="0.520"/><circle cx="39.6" cy="32.3" r="0.520"/><circle cx="46.1" cy="42.3" r="0.520"/><circle cx="36.1" cy="36.7" r="0.520"/><circle cx="52.5" cy="23.5" r="0.520"/><circle cx="66.4" cy="23.2" r="0.520"/><circle cx="63.3" cy="31.9" r="0.520"/><circle cx="64.1" cy="38.3" r="0.520"/><circle cx="45.5" cy="37.1" r="0.520"/><circle cx="55.8" cy="27.0" r="0.520"/><circle cx="40.0" cy="41.4" r="0.520"/><circle cx="55.8" cy="42.9" r="0.520"/><circle cx="40.0" cy="37.3" r="0.520"/><circle cx="38.7" cy="29.9" r="0.520"/><circle cx="36.8" cy="44.0" r="0.520"/><circle cx="53.1" cy="33.9" r="0.520"/><circle cx="47.9" cy="33.8" r="0.520"/><circle cx="46.9" cy="35.5" r="0.520"/><circle cx="30.8" cy="37.5" r="0.520"/><circle cx="46.3" cy="29.9" r="0.520"/><circle cx="27.1" cy="32.4" r="0.520"/><circle cx="62.5" cy="46.8" r="0.520"/><circle cx="43.0" cy="25.1" r="0.520"/><circle cx="47.0" cy="33.3" r="0.520"/><circle cx="43.3" cy="34.3" r="0.520"/><circle cx="25.4" cy="39.1" r="0.520"/><circle cx="28.0" cy="38.6" r="0.520"/><circle cx="44.3" cy="54.4" r="0.520"/><circle cx="62.7" cy="38.3" r="0.520"/><circle cx="31.1" cy="32.4" r="0.520"/><circle cx="36.1" cy="32.3" r="0.520"/><circle cx="44.0" cy="41.5" r="0.520"/><circle cx="24.2" cy="53.4" r="0.520"/><circle cx="24.0" cy="44.7" r="0.520"/><circle cx="39.6" cy="38.9" r="0.520"/><circle cx="44.1" cy="27.7" r="0.520"/><circle cx="39.9" cy="48.2" r="0.520"/><circle cx="63.2" cy="36.6" r="0.520"/><circle cx="42.6" cy="32.5" r="0.520"/><circle cx="49.0" cy="32.3" r="0.520"/><circle cx="64.0" cy="37.4" r="0.520"/><circle cx="65.2" cy="56.4" r="0.520"/><circle cx="25.3" cy="32.4" r="0.520"/><circle cx="40.0" cy="35.8" r="0.520"/><circle cx="58.7" cy="32.9" r="0.520"/><circle cx="27.9" cy="43.4" r="0.520"/><circle cx="33.4" cy="40.1" r="0.520"/><circle cx="28.9" cy="26.0" r="0.520"/><circle cx="28.1" cy="37.3" r="0.520"/><circle cx="30.9" cy="36.7" r="0.520"/><circle cx="46.7" cy="41.7" r="0.520"/><circle cx="60.0" cy="27.7" r="0.520"/><circle cx="63.1" cy="48.2" r="0.520"/><circle cx="44.7" cy="40.2" r="0.520"/><circle cx="20.7" cy="33.5" r="0.520"/><circle cx="43.9" cy="36.8" r="0.520"/><circle cx="40.5" cy="30.2" r="0.520"/><circle cx="48.9" cy="33.5" r="0.520"/><circle cx="43.0" cy="26.2" r="0.520"/><circle cx="22.8" cy="38.0" r="0.520"/><circle cx="49.6" cy="37.3" r="0.520"/><circle cx="19.5" cy="34.4" r="0.520"/><circle cx="36.2" cy="49.0" r="0.520"/><circle cx="48.4" cy="26.3" r="0.520"/><circle cx="48.8" cy="42.8" r="0.520"/><circle cx="63.6" cy="28.2" r="0.520"/><circle cx="16.0" cy="26.0" r="0.520"/><circle cx="48.7" cy="29.1" r="0.520"/><circle cx="53.0" cy="34.8" r="0.520"/><circle cx="40.6" cy="40.7" r="0.520"/><circle cx="52.3" cy="51.3" r="0.520"/><circle cx="31.2" cy="32.2" r="0.520"/><circle cx="52.6" cy="37.9" r="0.520"/><circle cx="51.1" cy="24.0" r="0.520"/><circle cx="32.7" cy="38.2" r="0.520"/><circle cx="36.5" cy="31.7" r="0.520"/><circle cx="42.3" cy="39.0" r="0.520"/><circle cx="36.6" cy="33.1" r="0.520"/><circle cx="57.3" cy="38.6" r="0.520"/><circle cx="46.7" cy="37.3" r="0.520"/><circle cx="60.5" cy="49.5" r="0.520"/><circle cx="58.8" cy="41.2" r="0.520"/><circle cx="45.3" cy="37.2" r="0.520"/><circle cx="42.3" cy="27.1" r="0.520"/><circle cx="33.1" cy="34.2" r="0.520"/><circle cx="34.8" cy="44.8" r="0.520"/><circle cx="34.9" cy="24.8" r="0.520"/><circle cx="48.8" cy="33.6" r="0.520"/><circle cx="33.9" cy="28.2" r="0.520"/><circle cx="45.6" cy="42.5" r="0.520"/><circle cx="46.9" cy="59.5" r="0.520"/><circle cx="38.6" cy="41.6" r="0.520"/><circle cx="42.3" cy="43.4" r="0.520"/><circle cx="62.1" cy="34.2" r="0.520"/><circle cx="64.1" cy="47.1" r="0.520"/><circle cx="35.1" cy="42.5" r="0.520"/><circle cx="42.2" cy="45.8" r="0.520"/><circle cx="40.1" cy="35.1" r="0.520"/><circle cx="41.3" cy="42.7" r="0.520"/><circle cx="63.2" cy="26.3" r="0.520"/><circle cx="52.9" cy="30.4" r="0.520"/><circle cx="59.9" cy="30.1" r="0.520"/><circle cx="66.1" cy="37.6" r="0.520"/><circle cx="39.3" cy="34.3" r="0.520"/><circle cx="42.3" cy="29.9" r="0.520"/><circle cx="45.1" cy="42.0" r="0.520"/><circle cx="57.0" cy="27.1" r="0.520"/><circle cx="43.5" cy="36.5" r="0.520"/><circle cx="52.4" cy="27.0" r="0.520"/><circle cx="58.8" cy="19.9" r="0.520"/><circle cx="58.7" cy="24.8" r="0.520"/><circle cx="50.0" cy="43.6" r="0.520"/><circle cx="35.0" cy="27.3" r="0.520"/><circle cx="25.8" cy="38.2" r="0.520"/><circle cx="58.2" cy="39.0" r="0.520"/><circle cx="50.1" cy="37.6" r="0.520"/><circle cx="33.2" cy="44.3" r="0.520"/><circle cx="38.5" cy="34.2" r="0.520"/><circle cx="39.2" cy="41.0" r="0.520"/><circle cx="24.3" cy="28.0" r="0.520"/><circle cx="47.6" cy="33.6" r="0.520"/><circle cx="35.1" cy="54.4" r="0.520"/><circle cx="41.0" cy="42.8" r="0.520"/><circle cx="53.6" cy="43.2" r="0.520"/><circle cx="43.4" cy="40.9" r="0.520"/><circle cx="51.2" cy="40.7" r="0.520"/><circle cx="49.7" cy="34.5" r="0.520"/><circle cx="45.0" cy="37.1" r="0.520"/><circle cx="45.2" cy="43.8" r="0.520"/><circle cx="67.2" cy="32.9" r="0.520"/><circle cx="42.5" cy="29.5" r="0.520"/><circle cx="64.3" cy="35.9" r="0.520"/><circle cx="33.5" cy="27.6" r="0.520"/><circle cx="53.4" cy="32.9" r="0.520"/><circle cx="46.7" cy="40.0" r="0.520"/><circle cx="35.8" cy="38.8" r="0.520"/><circle cx="12.5" cy="36.0" r="0.520"/><circle cx="63.9" cy="32.2" r="0.520"/><circle cx="30.6" cy="34.8" r="0.520"/><circle cx="32.9" cy="29.0" r="0.520"/><circle cx="46.2" cy="27.8" r="0.520"/><circle cx="45.3" cy="43.1" r="0.520"/><circle cx="48.0" cy="44.2" r="0.520"/><circle cx="41.5" cy="36.7" r="0.520"/><circle cx="26.4" cy="32.8" r="0.520"/><circle cx="55.1" cy="29.5" r="0.520"/><circle cx="33.6" cy="31.4" r="0.520"/><circle cx="47.3" cy="31.6" r="0.520"/><circle cx="51.6" cy="42.6" r="0.520"/><circle cx="58.9" cy="33.3" r="0.520"/><circle cx="42.0" cy="40.5" r="0.520"/><circle cx="40.9" cy="33.0" r="0.520"/><circle cx="41.8" cy="29.6" r="0.520"/><circle cx="22.2" cy="40.7" r="0.520"/><circle cx="35.5" cy="37.7" r="0.520"/><circle cx="32.4" cy="18.6" r="0.520"/><circle cx="30.7" cy="41.3" r="0.520"/><circle cx="46.6" cy="39.5" r="0.520"/><circle cx="40.8" cy="43.7" r="0.520"/><circle cx="63.9" cy="46.1" r="0.520"/><circle cx="62.6" cy="28.9" r="0.520"/><circle cx="21.8" cy="40.8" r="0.520"/><circle cx="46.1" cy="40.4" r="0.520"/><circle cx="32.5" cy="41.6" r="0.520"/><circle cx="51.3" cy="55.9" r="0.520"/><circle cx="46.5" cy="30.7" r="0.520"/><circle cx="55.9" cy="39.9" r="0.520"/><circle cx="48.4" cy="36.4" r="0.520"/><circle cx="53.8" cy="26.3" r="0.520"/><circle cx="41.0" cy="37.0" r="0.520"/><circle cx="14.2" cy="35.1" r="0.520"/><circle cx="30.2" cy="34.7" r="0.520"/><circle cx="34.2" cy="26.9" r="0.520"/><circle cx="38.7" cy="45.5" r="0.520"/><circle cx="32.3" cy="40.0" r="0.520"/><circle cx="64.4" cy="51.4" r="0.520"/><circle cx="42.6" cy="35.8" r="0.520"/><circle cx="60.3" cy="31.4" r="0.520"/><circle cx="40.5" cy="39.0" r="0.520"/><circle cx="64.6" cy="21.8" r="0.520"/><circle cx="30.1" cy="29.0" r="0.520"/><circle cx="51.9" cy="22.0" r="0.520"/><circle cx="28.5" cy="34.7" r="0.520"/><circle cx="50.0" cy="23.0" r="0.520"/><circle cx="63.8" cy="39.4" r="0.520"/><circle cx="24.8" cy="32.8" r="0.520"/><circle cx="34.0" cy="34.8" r="0.520"/><circle cx="47.6" cy="38.7" r="0.520"/><circle cx="42.3" cy="24.0" r="0.520"/><circle cx="28.0" cy="26.3" r="0.520"/><circle cx="58.6" cy="40.5" r="0.520"/><circle cx="45.2" cy="30.7" r="0.520"/><circle cx="60.3" cy="34.9" r="0.520"/><circle cx="48.5" cy="34.4" r="0.520"/><circle cx="30.6" cy="31.2" r="0.520"/><circle cx="38.8" cy="39.0" r="0.520"/><circle cx="61.4" cy="34.1" r="0.520"/><circle cx="27.8" cy="33.3" r="0.520"/><circle cx="39.0" cy="39.7" r="0.520"/><circle cx="51.9" cy="39.0" r="0.520"/><circle cx="56.9" cy="29.3" r="0.520"/><circle cx="54.6" cy="35.2" r="0.520"/><circle cx="26.7" cy="18.7" r="0.520"/><circle cx="69.9" cy="20.3" r="0.520"/><circle cx="42.6" cy="40.6" r="0.520"/><circle cx="44.7" cy="33.3" r="0.520"/><circle cx="44.6" cy="49.9" r="0.520"/><circle cx="41.8" cy="40.3" r="0.520"/><circle cx="32.9" cy="42.1" r="0.520"/><circle cx="40.6" cy="41.2" r="0.520"/><circle cx="60.6" cy="51.0" r="0.520"/><circle cx="28.1" cy="33.9" r="0.520"/><circle cx="15.1" cy="34.8" r="0.520"/><circle cx="51.1" cy="41.6" r="0.520"/><circle cx="48.7" cy="36.4" r="0.520"/><circle cx="53.4" cy="29.4" r="0.520"/><circle cx="65.5" cy="24.5" r="0.520"/><circle cx="35.8" cy="45.3" r="0.520"/><circle cx="46.7" cy="24.7" r="0.520"/><circle cx="50.7" cy="48.1" r="0.520"/><circle cx="59.5" cy="41.8" r="0.520"/><circle cx="57.0" cy="38.7" r="0.520"/><circle cx="34.4" cy="25.0" r="0.520"/><circle cx="27.9" cy="31.7" r="0.520"/><circle cx="41.3" cy="31.8" r="0.520"/><circle cx="25.1" cy="24.9" r="0.520"/><circle cx="58.0" cy="34.3" r="0.520"/><circle cx="39.8" cy="39.1" r="0.520"/><circle cx="40.3" cy="25.6" r="0.520"/><circle cx="33.8" cy="37.5" r="0.520"/><circle cx="63.1" cy="44.9" r="0.520"/><circle cx="48.1" cy="48.2" r="0.520"/><circle cx="39.6" cy="34.8" r="0.520"/><circle cx="52.0" cy="22.7" r="0.520"/><circle cx="43.6" cy="30.7" r="0.520"/><circle cx="51.8" cy="35.6" r="0.520"/><circle cx="60.6" cy="27.3" r="0.520"/><circle cx="41.4" cy="46.5" r="0.520"/><circle cx="50.8" cy="32.9" r="0.520"/><circle cx="50.4" cy="39.7" r="0.520"/><circle cx="58.3" cy="26.2" r="0.520"/><circle cx="51.8" cy="41.9" r="0.520"/><circle cx="45.0" cy="30.3" r="0.520"/><circle cx="36.8" cy="34.5" r="0.520"/><circle cx="48.2" cy="35.8" r="0.520"/><circle cx="31.9" cy="31.0" r="0.520"/><circle cx="52.5" cy="36.9" r="0.520"/><circle cx="45.3" cy="25.8" r="0.520"/><circle cx="51.3" cy="37.4" r="0.520"/><circle cx="38.3" cy="51.3" r="0.520"/><circle cx="34.9" cy="25.7" r="0.520"/><circle cx="33.5" cy="26.5" r="0.520"/><circle cx="58.0" cy="32.3" r="0.520"/><circle cx="41.9" cy="26.1" r="0.520"/><circle cx="41.8" cy="31.0" r="0.520"/><circle cx="22.9" cy="41.8" r="0.520"/><circle cx="43.9" cy="50.4" r="0.520"/><circle cx="61.1" cy="38.0" r="0.520"/><circle cx="41.7" cy="32.3" r="0.520"/><circle cx="44.9" cy="46.0" r="0.520"/><circle cx="27.3" cy="42.3" r="0.520"/><circle cx="31.3" cy="25.2" r="0.520"/><circle cx="51.9" cy="40.9" r="0.520"/><circle cx="42.1" cy="41.1" r="0.520"/><circle cx="49.8" cy="42.7" r="0.520"/><circle cx="60.0" cy="24.5" r="0.520"/><circle cx="52.6" cy="30.4" r="0.520"/><circle cx="21.6" cy="29.6" r="0.520"/><circle cx="32.7" cy="24.3" r="0.520"/><circle cx="30.8" cy="29.1" r="0.520"/><circle cx="33.6" cy="26.5" r="0.520"/><circle cx="19.4" cy="33.4" r="0.520"/><circle cx="19.7" cy="29.8" r="0.520"/><circle cx="35.6" cy="31.5" r="0.520"/><circle cx="37.4" cy="31.0" r="0.520"/><circle cx="50.9" cy="44.2" r="0.520"/><circle cx="40.7" cy="37.5" r="0.520"/><circle cx="61.8" cy="38.5" r="0.520"/><circle cx="22.5" cy="40.6" r="0.520"/><circle cx="27.7" cy="36.3" r="0.520"/><circle cx="47.6" cy="23.2" r="0.520"/><circle cx="41.3" cy="29.3" r="0.520"/><circle cx="32.6" cy="35.3" r="0.520"/><circle cx="53.9" cy="33.6" r="0.520"/><circle cx="57.8" cy="26.0" r="0.520"/><circle cx="60.5" cy="44.6" r="0.520"/><circle cx="39.7" cy="33.2" r="0.520"/><circle cx="44.5" cy="24.3" r="0.520"/><circle cx="47.3" cy="23.3" r="0.520"/><circle cx="45.3" cy="29.7" r="0.520"/><circle cx="56.9" cy="32.1" r="0.520"/><circle cx="38.6" cy="48.8" r="0.520"/><circle cx="49.1" cy="41.0" r="0.520"/><circle cx="17.8" cy="36.3" r="0.520"/><circle cx="53.7" cy="33.4" r="0.520"/><circle cx="64.4" cy="33.1" r="0.520"/><circle cx="44.3" cy="52.2" r="0.520"/><circle cx="57.1" cy="39.8" r="0.520"/><circle cx="24.4" cy="34.1" r="0.520"/><circle cx="40.5" cy="41.5" r="0.520"/><circle cx="25.9" cy="37.7" r="0.520"/><circle cx="48.4" cy="32.5" r="0.520"/><circle cx="50.9" cy="33.9" r="0.520"/><circle cx="28.0" cy="34.8" r="0.520"/><circle cx="34.3" cy="30.9" r="0.520"/><circle cx="37.5" cy="28.1" r="0.520"/><circle cx="73.9" cy="38.1" r="0.520"/><circle cx="43.7" cy="43.5" r="0.520"/><circle cx="46.0" cy="41.0" r="0.520"/><circle cx="49.0" cy="39.5" r="0.520"/><circle cx="48.2" cy="36.4" r="0.520"/><circle cx="41.7" cy="46.7" r="0.520"/><circle cx="28.4" cy="41.4" r="0.520"/><circle cx="36.3" cy="37.8" r="0.520"/><circle cx="64.4" cy="26.5" r="0.520"/><circle cx="47.7" cy="32.4" r="0.520"/><circle cx="40.1" cy="37.1" r="0.520"/><circle cx="28.2" cy="29.8" r="0.520"/><circle cx="43.9" cy="34.8" r="0.520"/><circle cx="45.0" cy="34.4" r="0.520"/><circle cx="36.7" cy="28.5" r="0.520"/><circle cx="55.4" cy="33.6" r="0.520"/><circle cx="37.4" cy="34.9" r="0.520"/><circle cx="42.5" cy="30.9" r="0.520"/><circle cx="54.8" cy="39.8" r="0.520"/><circle cx="47.3" cy="35.6" r="0.520"/><circle cx="58.2" cy="50.7" r="0.520"/><circle cx="41.8" cy="38.9" r="0.520"/><circle cx="39.3" cy="25.1" r="0.520"/><circle cx="50.3" cy="38.5" r="0.520"/><circle cx="47.2" cy="35.9" r="0.520"/><circle cx="59.0" cy="38.9" r="0.520"/><circle cx="49.5" cy="43.1" r="0.520"/><circle cx="44.3" cy="32.5" r="0.520"/><circle cx="50.0" cy="36.1" r="0.520"/><circle cx="52.5" cy="28.3" r="0.520"/><circle cx="31.0" cy="42.2" r="0.520"/><circle cx="42.9" cy="35.7" r="0.520"/><circle cx="40.5" cy="38.3" r="0.520"/><circle cx="59.1" cy="40.0" r="0.520"/><circle cx="38.7" cy="28.3" r="0.520"/><circle cx="57.5" cy="41.0" r="0.520"/><circle cx="29.3" cy="41.0" r="0.520"/><circle cx="43.9" cy="18.2" r="0.520"/><circle cx="57.5" cy="36.4" r="0.520"/><circle cx="41.4" cy="37.3" r="0.520"/><circle cx="58.6" cy="32.6" r="0.520"/><circle cx="20.0" cy="42.9" r="0.520"/><circle cx="44.9" cy="33.4" r="0.520"/><circle cx="46.6" cy="44.2" r="0.520"/><circle cx="43.1" cy="39.2" r="0.520"/><circle cx="26.3" cy="39.9" r="0.520"/><circle cx="52.7" cy="26.4" r="0.520"/><circle cx="16.4" cy="31.4" r="0.520"/><circle cx="56.1" cy="22.9" r="0.520"/><circle cx="48.1" cy="24.1" r="0.520"/><circle cx="56.6" cy="40.7" r="0.520"/><circle cx="41.5" cy="32.2" r="0.520"/><circle cx="31.1" cy="38.9" r="0.520"/><circle cx="38.3" cy="40.3" r="0.520"/><circle cx="39.0" cy="27.5" r="0.520"/><circle cx="51.9" cy="25.8" r="0.520"/><circle cx="40.8" cy="35.0" r="0.520"/><circle cx="49.6" cy="33.5" r="0.520"/><circle cx="50.5" cy="33.8" r="0.520"/><circle cx="61.8" cy="33.6" r="0.520"/><circle cx="20.5" cy="33.4" r="0.520"/><circle cx="39.7" cy="42.9" r="0.520"/><circle cx="53.0" cy="31.6" r="0.520"/><circle cx="53.0" cy="40.7" r="0.520"/><circle cx="37.9" cy="44.2" r="0.520"/><circle cx="41.5" cy="36.9" r="0.520"/><circle cx="43.6" cy="34.0" r="0.520"/><circle cx="46.3" cy="30.0" r="0.520"/><circle cx="37.9" cy="33.2" r="0.520"/><circle cx="37.0" cy="33.8" r="0.520"/><circle cx="31.2" cy="40.5" r="0.520"/><circle cx="40.2" cy="33.1" r="0.520"/><circle cx="61.6" cy="34.4" r="0.520"/><circle cx="33.3" cy="33.8" r="0.520"/><circle cx="56.5" cy="41.1" r="0.520"/><circle cx="68.3" cy="24.0" r="0.520"/><circle cx="47.3" cy="30.6" r="0.520"/><circle cx="73.4" cy="31.1" r="0.520"/><circle cx="43.2" cy="35.2" r="0.520"/><circle cx="65.1" cy="37.9" r="0.520"/><circle cx="44.4" cy="29.4" r="0.520"/><circle cx="30.3" cy="45.2" r="0.520"/><circle cx="49.2" cy="39.1" r="0.520"/><circle cx="67.8" cy="38.0" r="0.520"/><circle cx="37.9" cy="31.9" r="0.520"/><circle cx="50.8" cy="38.1" r="0.520"/><circle cx="33.0" cy="26.0" r="0.520"/><circle cx="34.3" cy="48.3" r="0.520"/><circle cx="50.6" cy="24.9" r="0.520"/><circle cx="42.8" cy="33.7" r="0.520"/><circle cx="51.9" cy="29.3" r="0.520"/><circle cx="60.5" cy="39.5" r="0.520"/><circle cx="30.8" cy="28.7" r="0.520"/><circle cx="36.8" cy="38.2" r="0.520"/><circle cx="45.7" cy="34.1" r="0.520"/><circle cx="73.2" cy="46.4" r="0.520"/><circle cx="41.3" cy="32.1" r="0.520"/><circle cx="39.4" cy="35.1" r="0.520"/><circle cx="50.5" cy="49.2" r="0.520"/><circle cx="70.8" cy="36.7" r="0.520"/><circle cx="38.2" cy="38.2" r="0.520"/><circle cx="41.6" cy="30.2" r="0.520"/><circle cx="45.8" cy="40.7" r="0.520"/><circle cx="54.5" cy="34.6" r="0.520"/><circle cx="71.8" cy="26.9" r="0.520"/><circle cx="30.3" cy="42.1" r="0.520"/><circle cx="25.3" cy="22.8" r="0.520"/><circle cx="47.4" cy="34.2" r="0.520"/><circle cx="52.0" cy="37.6" r="0.520"/><circle cx="18.5" cy="45.6" r="0.520"/><circle cx="38.1" cy="48.5" r="0.520"/><circle cx="57.2" cy="29.2" r="0.520"/><circle cx="39.2" cy="39.2" r="0.520"/><circle cx="51.5" cy="40.4" r="0.520"/><circle cx="47.7" cy="28.5" r="0.520"/><circle cx="53.5" cy="31.2" r="0.520"/><circle cx="50.9" cy="35.1" r="0.520"/><circle cx="48.8" cy="46.3" r="0.520"/><circle cx="60.8" cy="49.7" r="0.520"/><circle cx="38.9" cy="29.3" r="0.520"/><circle cx="47.2" cy="36.3" r="0.520"/><circle cx="59.4" cy="37.8" r="0.520"/><circle cx="39.0" cy="22.5" r="0.520"/><circle cx="41.3" cy="38.9" r="0.520"/><circle cx="36.7" cy="33.4" r="0.520"/><circle cx="34.4" cy="20.8" r="0.520"/><circle cx="70.3" cy="31.6" r="0.520"/><circle cx="51.5" cy="39.8" r="0.520"/><circle cx="68.6" cy="41.9" r="0.520"/><circle cx="54.7" cy="27.4" r="0.520"/><circle cx="46.8" cy="44.6" r="0.520"/><circle cx="42.5" cy="30.0" r="0.520"/><circle cx="49.1" cy="24.5" r="0.520"/><circle cx="45.3" cy="36.6" r="0.520"/><circle cx="56.9" cy="30.1" r="0.520"/><circle cx="35.3" cy="35.4" r="0.520"/><circle cx="47.9" cy="25.9" r="0.520"/><circle cx="51.5" cy="33.9" r="0.520"/><circle cx="43.1" cy="40.8" r="0.520"/><circle cx="43.1" cy="33.3" r="0.520"/><circle cx="52.5" cy="34.8" r="0.520"/><circle cx="52.7" cy="40.2" r="0.520"/><circle cx="44.6" cy="37.5" r="0.520"/><circle cx="45.7" cy="44.3" r="0.520"/><circle cx="39.1" cy="41.7" r="0.520"/><circle cx="52.6" cy="31.3" r="0.520"/><circle cx="44.4" cy="48.8" r="0.520"/><circle cx="26.9" cy="33.9" r="0.520"/><circle cx="42.0" cy="35.7" r="0.520"/><circle cx="53.2" cy="40.0" r="0.520"/><circle cx="49.2" cy="25.9" r="0.520"/><circle cx="35.0" cy="31.0" r="0.520"/><circle cx="54.6" cy="40.0" r="0.520"/><circle cx="53.0" cy="34.4" r="0.520"/><circle cx="53.0" cy="29.4" r="0.520"/><circle cx="64.1" cy="46.9" r="0.520"/><circle cx="41.6" cy="34.3" r="0.520"/><circle cx="52.9" cy="37.6" r="0.520"/><circle cx="42.4" cy="33.1" r="0.520"/><circle cx="57.4" cy="21.0" r="0.520"/><circle cx="59.5" cy="40.4" r="0.520"/><circle cx="51.4" cy="38.2" r="0.520"/><circle cx="54.4" cy="44.3" r="0.520"/><circle cx="35.6" cy="34.3" r="0.520"/><circle cx="52.9" cy="31.5" r="0.520"/><circle cx="30.9" cy="53.2" r="0.520"/><circle cx="71.5" cy="25.5" r="0.520"/><circle cx="59.2" cy="24.6" r="0.520"/><circle cx="26.7" cy="54.6" r="0.520"/><circle cx="13.0" cy="46.5" r="0.520"/><circle cx="60.9" cy="32.5" r="0.520"/><circle cx="34.7" cy="35.2" r="0.520"/><circle cx="51.6" cy="27.5" r="0.520"/><circle cx="29.3" cy="37.8" r="0.520"/><circle cx="45.8" cy="26.7" r="0.520"/><circle cx="37.1" cy="45.4" r="0.520"/><circle cx="52.2" cy="32.8" r="0.520"/><circle cx="40.9" cy="38.8" r="0.520"/><circle cx="62.9" cy="39.0" r="0.520"/><circle cx="35.7" cy="48.2" r="0.520"/><circle cx="60.4" cy="38.6" r="0.520"/><circle cx="44.6" cy="26.0" r="0.520"/><circle cx="51.1" cy="40.2" r="0.520"/><circle cx="25.5" cy="37.3" r="0.520"/><circle cx="23.6" cy="34.7" r="0.520"/><circle cx="57.5" cy="42.5" r="0.520"/><circle cx="29.9" cy="33.8" r="0.520"/><circle cx="40.6" cy="31.7" r="0.520"/><circle cx="40.9" cy="37.3" r="0.520"/><circle cx="33.8" cy="48.7" r="0.520"/><circle cx="47.2" cy="24.8" r="0.520"/><circle cx="27.6" cy="35.2" r="0.520"/><circle cx="30.3" cy="35.7" r="0.520"/><circle cx="55.9" cy="37.1" r="0.520"/><circle cx="35.0" cy="39.8" r="0.520"/><circle cx="53.7" cy="47.3" r="0.520"/><circle cx="52.7" cy="35.9" r="0.520"/><circle cx="63.1" cy="34.5" r="0.520"/><circle cx="50.2" cy="28.6" r="0.520"/><circle cx="22.5" cy="24.1" r="0.520"/><circle cx="36.8" cy="40.7" r="0.520"/><circle cx="39.7" cy="24.2" r="0.520"/><circle cx="59.5" cy="34.9" r="0.520"/><circle cx="48.8" cy="31.4" r="0.520"/><circle cx="38.7" cy="42.7" r="0.520"/><circle cx="49.9" cy="33.1" r="0.520"/><circle cx="40.3" cy="42.2" r="0.520"/><circle cx="51.3" cy="30.8" r="0.520"/><circle cx="46.5" cy="44.4" r="0.520"/><circle cx="58.0" cy="35.3" r="0.520"/><circle cx="48.7" cy="38.5" r="0.520"/><circle cx="56.7" cy="33.0" r="0.520"/><circle cx="44.5" cy="33.7" r="0.520"/><circle cx="53.2" cy="34.4" r="0.520"/><circle cx="42.8" cy="39.1" r="0.520"/><circle cx="52.4" cy="29.4" r="0.520"/><circle cx="47.3" cy="31.5" r="0.520"/><circle cx="43.1" cy="41.0" r="0.520"/><circle cx="39.5" cy="30.2" r="0.520"/><circle cx="41.3" cy="40.0" r="0.520"/><circle cx="50.3" cy="34.8" r="0.520"/><circle cx="16.8" cy="36.1" r="0.520"/><circle cx="59.6" cy="36.1" r="0.520"/><circle cx="15.9" cy="29.8" r="0.520"/><circle cx="42.3" cy="48.1" r="0.520"/><circle cx="40.6" cy="26.4" r="0.520"/><circle cx="53.6" cy="47.9" r="0.520"/><circle cx="47.5" cy="26.6" r="0.520"/><circle cx="44.1" cy="31.4" r="0.520"/><circle cx="45.6" cy="45.8" r="0.520"/><circle cx="56.1" cy="32.8" r="0.520"/><circle cx="73.0" cy="37.5" r="0.520"/><circle cx="49.2" cy="43.6" r="0.520"/><circle cx="19.6" cy="26.7" r="0.520"/><circle cx="39.5" cy="27.3" r="0.520"/><circle cx="49.7" cy="32.5" r="0.520"/><circle cx="84.8" cy="23.3" r="0.520"/><circle cx="35.3" cy="34.1" r="0.520"/><circle cx="40.1" cy="37.1" r="0.520"/><circle cx="51.4" cy="25.8" r="0.520"/><circle cx="48.5" cy="40.3" r="0.520"/><circle cx="28.6" cy="29.5" r="0.520"/><circle cx="56.1" cy="27.2" r="0.520"/><circle cx="28.6" cy="33.5" r="0.520"/><circle cx="41.4" cy="34.3" r="0.520"/><circle cx="60.7" cy="31.6" r="0.520"/><circle cx="28.6" cy="33.3" r="0.520"/><circle cx="40.4" cy="40.0" r="0.520"/><circle cx="64.8" cy="60.3" r="0.520"/><circle cx="41.4" cy="38.6" r="0.520"/><circle cx="31.9" cy="45.4" r="0.520"/><circle cx="37.5" cy="28.1" r="0.520"/><circle cx="54.7" cy="38.2" r="0.520"/><circle cx="25.6" cy="33.3" r="0.520"/><circle cx="36.9" cy="29.7" r="0.520"/><circle cx="26.9" cy="27.7" r="0.520"/><circle cx="30.6" cy="41.6" r="0.520"/><circle cx="60.2" cy="19.7" r="0.520"/><circle cx="43.6" cy="28.5" r="0.520"/><circle cx="39.3" cy="30.4" r="0.520"/><circle cx="49.8" cy="41.4" r="0.520"/><circle cx="35.9" cy="20.7" r="0.520"/><circle cx="30.0" cy="30.3" r="0.520"/><circle cx="58.5" cy="27.0" r="0.520"/><circle cx="55.2" cy="37.1" r="0.520"/><circle cx="34.3" cy="21.5" r="0.520"/><circle cx="53.1" cy="24.5" r="0.520"/><circle cx="62.3" cy="35.7" r="0.520"/><circle cx="50.6" cy="20.8" r="0.520"/><circle cx="50.7" cy="42.5" r="0.520"/><circle cx="29.5" cy="28.8" r="0.520"/><circle cx="43.0" cy="30.4" r="0.520"/><circle cx="21.9" cy="30.1" r="0.520"/><circle cx="58.1" cy="40.1" r="0.520"/><circle cx="42.5" cy="37.7" r="0.520"/><circle cx="60.7" cy="28.3" r="0.520"/><circle cx="35.2" cy="27.6" r="0.520"/><circle cx="55.2" cy="35.6" r="0.520"/><circle cx="25.3" cy="37.1" r="0.520"/><circle cx="39.6" cy="39.0" r="0.520"/><circle cx="51.2" cy="25.9" r="0.520"/><circle cx="48.9" cy="36.4" r="0.520"/><circle cx="43.9" cy="39.3" r="0.520"/><circle cx="24.5" cy="49.0" r="0.520"/><circle cx="60.7" cy="48.2" r="0.520"/><circle cx="52.6" cy="43.6" r="0.520"/><circle cx="58.5" cy="50.1" r="0.520"/><circle cx="58.3" cy="38.6" r="0.520"/><circle cx="40.0" cy="37.9" r="0.520"/><circle cx="49.4" cy="42.9" r="0.520"/><circle cx="76.9" cy="38.8" r="0.520"/><circle cx="34.4" cy="36.5" r="0.520"/><circle cx="49.5" cy="48.4" r="0.520"/><circle cx="37.7" cy="30.9" r="0.520"/><circle cx="66.0" cy="55.5" r="0.520"/><circle cx="46.7" cy="22.0" r="0.520"/><circle cx="31.9" cy="46.4" r="0.520"/><circle cx="37.2" cy="35.7" r="0.520"/><circle cx="27.4" cy="38.5" r="0.520"/><circle cx="16.7" cy="33.3" r="0.520"/><circle cx="11.4" cy="41.3" r="0.520"/><circle cx="35.7" cy="32.1" r="0.520"/><circle cx="30.7" cy="47.1" r="0.520"/><circle cx="46.4" cy="30.5" r="0.520"/><circle cx="34.4" cy="38.0" r="0.520"/><circle cx="47.3" cy="33.3" r="0.520"/><circle cx="66.3" cy="28.7" r="0.520"/><circle cx="30.1" cy="44.4" r="0.520"/><circle cx="29.7" cy="40.2" r="0.520"/><circle cx="56.6" cy="41.3" r="0.520"/><circle cx="73.3" cy="36.6" r="0.520"/><circle cx="33.8" cy="34.8" r="0.520"/><circle cx="23.8" cy="30.8" r="0.520"/><circle cx="41.0" cy="34.4" r="0.520"/><circle cx="39.6" cy="37.1" r="0.520"/><circle cx="53.3" cy="32.1" r="0.520"/><circle cx="31.5" cy="28.6" r="0.520"/><circle cx="41.3" cy="29.1" r="0.520"/><circle cx="40.7" cy="21.0" r="0.520"/><circle cx="25.2" cy="40.4" r="0.520"/><circle cx="25.3" cy="34.3" r="0.520"/><circle cx="50.0" cy="45.4" r="0.520"/><circle cx="51.3" cy="40.8" r="0.520"/><circle cx="34.8" cy="31.5" r="0.520"/><circle cx="63.8" cy="27.0" r="0.520"/><circle cx="56.0" cy="39.4" r="0.520"/><circle cx="50.2" cy="32.6" r="0.520"/><circle cx="52.0" cy="35.3" r="0.520"/><circle cx="48.8" cy="32.3" r="0.520"/><circle cx="53.4" cy="34.3" r="0.520"/><circle cx="55.2" cy="39.3" r="0.520"/><circle cx="45.4" cy="51.8" r="0.520"/><circle cx="19.3" cy="46.5" r="0.520"/><circle cx="42.5" cy="33.2" r="0.520"/><circle cx="34.3" cy="36.5" r="0.520"/><circle cx="29.9" cy="21.1" r="0.520"/><circle cx="51.9" cy="35.5" r="0.520"/><circle cx="22.6" cy="29.4" r="0.520"/><circle cx="54.8" cy="44.2" r="0.520"/><circle cx="36.6" cy="45.8" r="0.520"/><circle cx="29.4" cy="34.5" r="0.520"/><circle cx="33.8" cy="24.0" r="0.520"/><circle cx="73.3" cy="33.0" r="0.520"/><circle cx="62.7" cy="38.1" r="0.520"/><circle cx="41.0" cy="33.0" r="0.520"/><circle cx="57.7" cy="31.5" r="0.520"/><circle cx="66.5" cy="32.7" r="0.520"/><circle cx="33.7" cy="35.7" r="0.520"/><circle cx="40.9" cy="43.3" r="0.520"/><circle cx="55.8" cy="43.9" r="0.520"/><circle cx="49.4" cy="39.5" r="0.520"/><circle cx="39.9" cy="36.8" r="0.520"/><circle cx="64.6" cy="45.2" r="0.520"/><circle cx="50.8" cy="24.6" r="0.520"/><circle cx="54.3" cy="31.7" r="0.520"/><circle cx="74.1" cy="39.6" r="0.520"/><circle cx="50.6" cy="30.5" r="0.520"/><circle cx="77.2" cy="18.7" r="0.520"/><circle cx="48.3" cy="34.1" r="0.520"/><circle cx="42.5" cy="34.3" r="0.520"/><circle cx="46.1" cy="28.6" r="0.520"/><circle cx="55.3" cy="45.4" r="0.520"/><circle cx="52.6" cy="39.8" r="0.520"/><circle cx="49.1" cy="41.3" r="0.520"/><circle cx="26.1" cy="30.4" r="0.520"/><circle cx="31.0" cy="47.7" r="0.520"/><circle cx="41.2" cy="33.6" r="0.520"/><circle cx="53.5" cy="39.3" r="0.520"/><circle cx="62.4" cy="37.9" r="0.520"/><circle cx="14.7" cy="39.8" r="0.520"/><circle cx="42.6" cy="25.5" r="0.520"/><circle cx="38.8" cy="41.9" r="0.520"/><circle cx="43.1" cy="44.3" r="0.520"/><circle cx="47.0" cy="33.7" r="0.520"/><circle cx="33.9" cy="39.9" r="0.520"/><circle cx="28.0" cy="32.3" r="0.520"/><circle cx="57.0" cy="36.3" r="0.520"/><circle cx="53.7" cy="35.6" r="0.520"/><circle cx="39.2" cy="35.5" r="0.520"/><circle cx="42.9" cy="47.8" r="0.520"/><circle cx="35.8" cy="50.1" r="0.520"/><circle cx="26.9" cy="21.7" r="0.520"/><circle cx="52.4" cy="44.2" r="0.520"/><circle cx="36.1" cy="32.2" r="0.520"/><circle cx="30.5" cy="43.8" r="0.520"/><circle cx="36.9" cy="36.5" r="0.520"/><circle cx="64.7" cy="37.8" r="0.520"/><circle cx="49.9" cy="25.7" r="0.520"/><circle cx="47.3" cy="37.4" r="0.520"/><circle cx="45.5" cy="46.7" r="0.520"/><circle cx="55.1" cy="45.9" r="0.520"/><circle cx="53.5" cy="33.8" r="0.520"/><circle cx="28.2" cy="29.8" r="0.520"/><circle cx="41.4" cy="21.8" r="0.520"/><circle cx="36.3" cy="21.0" r="0.520"/><circle cx="47.0" cy="45.9" r="0.520"/><circle cx="43.6" cy="36.8" r="0.520"/><circle cx="19.6" cy="44.5" r="0.520"/><circle cx="58.6" cy="34.0" r="0.520"/><circle cx="47.5" cy="30.3" r="0.520"/><circle cx="22.8" cy="48.8" r="0.520"/><circle cx="58.4" cy="29.9" r="0.520"/><circle cx="45.8" cy="30.9" r="0.520"/><circle cx="50.1" cy="37.7" r="0.520"/><circle cx="44.6" cy="40.1" r="0.520"/><circle cx="46.2" cy="24.2" r="0.520"/><circle cx="37.9" cy="37.0" r="0.520"/><circle cx="23.5" cy="43.6" r="0.520"/><circle cx="36.5" cy="35.1" r="0.520"/><circle cx="46.3" cy="28.6" r="0.520"/><circle cx="44.6" cy="31.1" r="0.520"/><circle cx="52.1" cy="49.7" r="0.520"/><circle cx="42.9" cy="45.5" r="0.520"/><circle cx="16.2" cy="38.8" r="0.520"/><circle cx="53.1" cy="34.9" r="0.520"/><circle cx="34.0" cy="34.9" r="0.520"/><circle cx="27.3" cy="44.8" r="0.520"/><circle cx="39.9" cy="29.5" r="0.520"/><circle cx="27.0" cy="32.6" r="0.520"/><circle cx="48.3" cy="47.0" r="0.520"/><circle cx="32.4" cy="42.7" r="0.520"/><circle cx="67.8" cy="36.7" r="0.520"/><circle cx="40.7" cy="46.6" r="0.520"/><circle cx="36.9" cy="35.7" r="0.520"/><circle cx="35.7" cy="34.7" r="0.520"/><circle cx="17.1" cy="39.0" r="0.520"/><circle cx="33.0" cy="31.9" r="0.520"/><circle cx="34.3" cy="23.2" r="0.520"/><circle cx="39.6" cy="40.5" r="0.520"/><circle cx="16.3" cy="32.6" r="0.520"/><circle cx="44.2" cy="39.1" r="0.520"/><circle cx="59.6" cy="25.1" r="0.520"/><circle cx="38.5" cy="27.1" r="0.520"/><circle cx="43.1" cy="35.9" r="0.520"/><circle cx="49.0" cy="40.2" r="0.520"/><circle cx="33.9" cy="30.4" r="0.520"/><circle cx="38.4" cy="36.3" r="0.520"/><circle cx="55.6" cy="44.5" r="0.520"/><circle cx="46.2" cy="43.0" r="0.520"/><circle cx="28.8" cy="37.0" r="0.520"/><circle cx="21.9" cy="20.6" r="0.520"/><circle cx="72.2" cy="28.2" r="0.520"/><circle cx="49.5" cy="26.1" r="0.520"/><circle cx="24.5" cy="29.3" r="0.520"/><circle cx="46.0" cy="26.2" r="0.520"/><circle cx="52.5" cy="25.3" r="0.520"/><circle cx="45.6" cy="43.7" r="0.520"/><circle cx="21.0" cy="31.6" r="0.520"/><circle cx="66.6" cy="31.5" r="0.520"/><circle cx="51.6" cy="32.4" r="0.520"/><circle cx="41.8" cy="32.9" r="0.520"/><circle cx="52.7" cy="53.6" r="0.520"/><circle cx="41.5" cy="34.6" r="0.520"/><circle cx="40.2" cy="45.4" r="0.520"/><circle cx="55.4" cy="29.2" r="0.520"/><circle cx="19.9" cy="39.5" r="0.520"/><circle cx="56.8" cy="37.8" r="0.520"/><circle cx="49.4" cy="36.3" r="0.520"/><circle cx="53.8" cy="50.3" r="0.520"/><circle cx="55.8" cy="37.1" r="0.520"/><circle cx="63.7" cy="44.8" r="0.520"/><circle cx="62.4" cy="29.2" r="0.520"/><circle cx="55.5" cy="39.6" r="0.520"/><circle cx="39.9" cy="43.9" r="0.520"/><circle cx="53.2" cy="27.2" r="0.520"/><circle cx="38.8" cy="38.0" r="0.520"/><circle cx="32.9" cy="42.8" r="0.520"/><circle cx="50.4" cy="36.7" r="0.520"/><circle cx="49.2" cy="37.3" r="0.520"/><circle cx="59.5" cy="34.3" r="0.520"/><circle cx="18.4" cy="43.0" r="0.520"/><circle cx="52.2" cy="28.4" r="0.520"/><circle cx="53.2" cy="33.7" r="0.520"/><circle cx="46.3" cy="24.5" r="0.520"/><circle cx="63.2" cy="32.0" r="0.520"/><circle cx="34.2" cy="42.8" r="0.520"/><circle cx="49.1" cy="28.5" r="0.520"/><circle cx="40.4" cy="37.7" r="0.520"/><circle cx="44.8" cy="35.2" r="0.520"/><circle cx="33.1" cy="53.2" r="0.520"/><circle cx="43.3" cy="44.7" r="0.520"/><circle cx="53.3" cy="26.3" r="0.520"/><circle cx="46.5" cy="28.2" r="0.520"/><circle cx="49.3" cy="48.2" r="0.520"/><circle cx="35.6" cy="33.6" r="0.520"/><circle cx="64.6" cy="33.5" r="0.520"/><circle cx="36.5" cy="27.1" r="0.520"/><circle cx="45.3" cy="43.5" r="0.520"/><circle cx="52.3" cy="48.1" r="0.520"/><circle cx="42.8" cy="33.7" r="0.520"/><circle cx="54.4" cy="40.5" r="0.520"/><circle cx="47.5" cy="40.0" r="0.520"/><circle cx="66.1" cy="42.2" r="0.520"/><circle cx="51.9" cy="27.1" r="0.520"/><circle cx="50.0" cy="41.9" r="0.520"/><circle cx="35.2" cy="29.1" r="0.520"/><circle cx="50.8" cy="31.5" r="0.520"/><circle cx="57.5" cy="40.4" r="0.520"/><circle cx="50.2" cy="29.0" r="0.520"/><circle cx="33.6" cy="26.9" r="0.520"/><circle cx="38.3" cy="33.3" r="0.520"/><circle cx="42.2" cy="37.4" r="0.520"/><circle cx="45.3" cy="30.5" r="0.520"/><circle cx="28.0" cy="41.0" r="0.520"/><circle cx="68.0" cy="32.3" r="0.520"/><circle cx="43.8" cy="25.0" r="0.520"/><circle cx="46.4" cy="45.2" r="0.520"/><circle cx="39.6" cy="48.5" r="0.520"/><circle cx="44.4" cy="30.7" r="0.520"/><circle cx="68.5" cy="42.0" r="0.520"/><circle cx="33.3" cy="39.0" r="0.520"/><circle cx="38.6" cy="34.7" r="0.520"/><circle cx="32.2" cy="40.1" r="0.520"/><circle cx="38.1" cy="34.9" r="0.520"/><circle cx="63.6" cy="42.7" r="0.520"/><circle cx="37.2" cy="39.5" r="0.520"/><circle cx="39.3" cy="36.4" r="0.520"/><circle cx="22.7" cy="31.9" r="0.520"/><circle cx="40.4" cy="38.7" r="0.520"/><circle cx="47.6" cy="33.4" r="0.520"/><circle cx="38.8" cy="31.5" r="0.520"/><circle cx="40.0" cy="32.3" r="0.520"/><circle cx="54.6" cy="36.6" r="0.520"/><circle cx="51.3" cy="26.6" r="0.520"/><circle cx="43.6" cy="41.2" r="0.520"/><circle cx="35.3" cy="28.4" r="0.520"/><circle cx="26.4" cy="28.8" r="0.520"/><circle cx="65.4" cy="29.5" r="0.520"/><circle cx="25.9" cy="39.4" r="0.520"/><circle cx="52.7" cy="29.0" r="0.520"/><circle cx="42.4" cy="32.4" r="0.520"/><circle cx="35.9" cy="43.6" r="0.520"/><circle cx="55.7" cy="37.9" r="0.520"/></g><path d="M10.500 35.900H84.500" stroke="#f2606e" stroke-width="0.4" stroke-dasharray="0.6 0.8"/><g font-family="Liberation Sans, sans-serif" fill="#555" font-size="1.700" text-anchor="middle"><text x="14.8" y="66.7">-10</text><text x="29.7" y="66.7">-5</text><text x="44.6" y="66.7">0</text><text x="59.5" y="66.7">5</text><text x="74.4" y="66.7">10</text><text transform="translate(5.1 21.8) rotate(-90)">1</text><text transform="translate(5.1 35.9) rotate(-90)">0</text><text transform="translate(5.1 50.2) rotate(-90)">-1</text></g><path d="M14.8 63.5v1M29.7 63.5v1M44.6 63.5v1M59.5 63.5v1M74.4 63.5v1M7.3 21.8h-1M7.3 35.9h-1M7.3 50.2h-1" stroke="#8d93a3" stroke-width="0.4" fill="none"/><g font-family="Liberation Sans, sans-serif" fill="#555" font-size="1.500" text-anchor="middle"><text x="47.4" y="6.500">Residuals vs Fitted</text><text x="47.4" y="70">Fitted values</text><text x="47.4" y="71.800">lm(y ~ x1 + x2)</text><text transform="translate(4.300 35.4) rotate(-90)">Residuals</text></g></svg>
<svg style="left:119.50px;top:299.90px" width="90.8" height="73" viewBox="0 0 90.8 73"><rect width="90.8" height="73" fill="#fff"/><rect x="7.3" y="7.3" width="80.3" height="56.2" fill="none" stroke="#8d93a3" stroke-width="0.45"/><path d="M13.300 61.200L15 60.500L22 55.500L30 49L38 43L46 37L54 31L62 25L70 20L76 15.500L79 13.800" stroke="#111" stroke-width="1.050" fill="none" stroke-linejoin="round"/><g fill="#333"><circle cx="11.5" cy="62.4" r="0.500"/><circle cx="12.3" cy="62.0" r="0.500"/><circle cx="80.5" cy="13.0" r="0.500"/><circle cx="82.0" cy="12.2" r="0.500"/><circle cx="84.0" cy="11.3" r="0.500"/></g><g font-family="Liberation Sans, sans-serif" fill="#555" font-size="1.700" text-anchor="middle"><text x="13.5" y="66.7">-3</text><text x="24.7" y="66.7">-2</text><text x="35.9" y="66.7">-1</text><text x="47.1" y="66.7">0</text><text x="58.3" y="66.7">1</text><text x="69.5" y="66.7">2</text><text x="80.7" y="66.7">3</text><text transform="translate(5.1 12.3) rotate(-90)">3</text><text transform="translate(5.1 20.4) rotate(-90)">2</text><text transform="translate(5.1 28.5) rotate(-90)">1</text><text transform="translate(5.1 36.6) rotate(-90)">0</text><text transform="translate(5.1 44.7) rotate(-90)">-1</text><text transform="translate(5.1 52.8) rotate(-90)">-2</text><text transform="translate(5.1 60.9) rotate(-90)">-3</text></g><path d="M13.5 63.5v1M24.7 63.5v1M35.9 63.5v1M47.1 63.5v1M58.3 63.5v1M69.5 63.5v1M80.7 63.5v1M7.3 12.3h-1M7.3 20.4h-1M7.3 28.5h-1M7.3 36.6h-1M7.3 44.7h-1M7.3 52.8h-1M7.3 60.9h-1" stroke="#8d93a3" stroke-width="0.4" fill="none"/><g font-family="Liberation Sans, sans-serif" fill="#555" font-size="1.500" text-anchor="middle"><text x="47.4" y="6.500">Normal Q-Q</text><text x="47.4" y="70">Theoretical Quantiles</text><text x="47.4" y="71.800">lm(y ~ x1 + x2)</text><text transform="translate(4.300 35.4) rotate(-90)">Standardized residuals</text></g></svg>
<svg style="left:223.70px;top:299.90px" width="91.1" height="73" viewBox="0 0 91.1 73"><rect width="91.1" height="73" fill="#fff"/><rect x="7.3" y="7.3" width="80.3" height="56.2" fill="none" stroke="#8d93a3" stroke-width="0.45"/><g fill="#111" opacity="0.85"><circle cx="36.0" cy="38.6" r="0.520"/><circle cx="53.7" cy="37.5" r="0.520"/><circle cx="44.1" cy="21.9" r="0.520"/><circle cx="50.1" cy="44.9" r="0.520"/><circle cx="60.9" cy="40.4" r="0.520"/><circle cx="51.1" cy="48.4" r="0.520"/><circle cx="61.0" cy="29.6" r="0.520"/><circle cx="55.0" cy="43.8" r="0.520"/><circle cx="62.5" cy="53.6" r="0.520"/><circle cx="31.9" cy="38.0" r="0.520"/><circle cx="35.0" cy="36.8" r="0.520"/><circle cx="29.3" cy="40.1" r="0.520"/><circle cx="51.4" cy="49.7" r="0.520"/><circle cx="41.7" cy="42.4" r="0.520"/><circle cx="55.7" cy="56.3" r="0.520"/><circle cx="48.4" cy="35.5" r="0.520"/><circle cx="46.1" cy="49.1" r="0.520"/><circle cx="70.7" cy="51.7" r="0.520"/><circle cx="51.9" cy="49.8" r="0.520"/><circle cx="44.3" cy="51.0" r="0.520"/><circle cx="32.7" cy="41.1" r="0.520"/><circle cx="59.0" cy="32.4" r="0.520"/><circle cx="56.1" cy="46.3" r="0.520"/><circle cx="31.4" cy="20.6" r="0.520"/><circle cx="42.8" cy="32.7" r="0.520"/><circle cx="47.5" cy="23.7" r="0.520"/><circle cx="24.7" cy="40.2" r="0.520"/><circle cx="41.2" cy="52.8" r="0.520"/><circle cx="61.6" cy="19.8" r="0.520"/><circle cx="25.0" cy="34.2" r="0.520"/><circle cx="50.5" cy="46.7" r="0.520"/><circle cx="67.5" cy="31.9" r="0.520"/><circle cx="37.1" cy="46.6" r="0.520"/><circle cx="39.1" cy="36.5" r="0.520"/><circle cx="47.2" cy="23.0" r="0.520"/><circle cx="50.8" cy="28.6" r="0.520"/><circle cx="49.4" cy="37.5" r="0.520"/><circle cx="26.3" cy="42.0" r="0.520"/><circle cx="35.3" cy="46.9" r="0.520"/><circle cx="45.8" cy="40.3" r="0.520"/><circle cx="40.8" cy="49.1" r="0.520"/><circle cx="58.4" cy="38.4" r="0.520"/><circle cx="40.7" cy="26.7" r="0.520"/><circle cx="40.1" cy="38.2" r="0.520"/><circle cx="67.0" cy="46.3" r="0.520"/><circle cx="43.6" cy="38.2" r="0.520"/><circle cx="32.7" cy="41.9" r="0.520"/><circle cx="44.6" cy="44.6" r="0.520"/><circle cx="41.8" cy="34.1" r="0.520"/><circle cx="53.2" cy="38.3" r="0.520"/><circle cx="50.1" cy="50.7" r="0.520"/><circle cx="40.6" cy="36.6" r="0.520"/><circle cx="39.9" cy="32.4" r="0.520"/><circle cx="38.2" cy="41.4" r="0.520"/><circle cx="61.0" cy="52.9" r="0.520"/><circle cx="69.0" cy="43.7" r="0.520"/><circle cx="43.9" cy="39.2" r="0.520"/><circle cx="51.4" cy="46.6" r="0.520"/><circle cx="49.0" cy="22.1" r="0.520"/><circle cx="38.4" cy="34.6" r="0.520"/><circle cx="38.3" cy="40.3" r="0.520"/><circle cx="38.8" cy="26.5" r="0.520"/><circle cx="21.3" cy="51.1" r="0.520"/><circle cx="35.4" cy="40.6" r="0.520"/><circle cx="50.1" cy="52.0" r="0.520"/><circle cx="55.8" cy="34.7" r="0.520"/><circle cx="42.1" cy="37.4" r="0.520"/><circle cx="40.0" cy="24.4" r="0.520"/><circle cx="52.4" cy="31.2" r="0.520"/><circle cx="69.5" cy="27.6" r="0.520"/><circle cx="33.3" cy="26.8" r="0.520"/><circle cx="35.2" cy="39.2" r="0.520"/><circle cx="39.3" cy="29.4" r="0.520"/><circle cx="51.2" cy="53.9" r="0.520"/><circle cx="34.2" cy="41.6" r="0.520"/><circle cx="50.2" cy="30.3" r="0.520"/><circle cx="35.9" cy="34.2" r="0.520"/><circle cx="51.4" cy="31.0" r="0.520"/><circle cx="40.8" cy="57.2" r="0.520"/><circle cx="39.4" cy="39.8" r="0.520"/><circle cx="54.5" cy="51.2" r="0.520"/><circle cx="30.2" cy="47.4" r="0.520"/><circle cx="35.3" cy="29.7" r="0.520"/><circle cx="53.4" cy="46.9" r="0.520"/><circle cx="53.9" cy="37.7" r="0.520"/><circle cx="47.1" cy="35.3" r="0.520"/><circle cx="18.1" cy="30.9" r="0.520"/><circle cx="53.4" cy="40.6" r="0.520"/><circle cx="48.8" cy="29.0" r="0.520"/><circle cx="40.5" cy="53.6" r="0.520"/><circle cx="21.0" cy="45.3" r="0.520"/><circle cx="54.7" cy="50.0" r="0.520"/><circle cx="65.8" cy="45.9" r="0.520"/><circle cx="50.7" cy="35.9" r="0.520"/><circle cx="60.7" cy="43.9" r="0.520"/><circle cx="36.6" cy="44.2" r="0.520"/><circle cx="46.8" cy="48.1" r="0.520"/><circle cx="36.7" cy="34.3" r="0.520"/><circle cx="31.0" cy="44.2" r="0.520"/><circle cx="40.4" cy="41.3" r="0.520"/><circle cx="33.6" cy="46.8" r="0.520"/><circle cx="35.6" cy="38.8" r="0.520"/><circle cx="35.3" cy="22.9" r="0.520"/><circle cx="39.6" cy="42.5" r="0.520"/><circle cx="41.1" cy="46.8" r="0.520"/><circle cx="46.1" cy="54.4" r="0.520"/><circle cx="29.5" cy="43.1" r="0.520"/><circle cx="48.4" cy="48.5" r="0.520"/><circle cx="22.6" cy="45.2" r="0.520"/><circle cx="45.3" cy="27.3" r="0.520"/><circle cx="45.6" cy="42.2" r="0.520"/><circle cx="16.5" cy="50.9" r="0.520"/><circle cx="40.5" cy="48.4" r="0.520"/><circle cx="57.8" cy="55.3" r="0.520"/><circle cx="50.1" cy="36.0" r="0.520"/><circle cx="38.6" cy="26.9" r="0.520"/><circle cx="38.0" cy="58.8" r="0.520"/><circle cx="48.1" cy="39.7" r="0.520"/><circle cx="46.5" cy="37.1" r="0.520"/><circle cx="54.5" cy="41.8" r="0.520"/><circle cx="46.3" cy="41.5" r="0.520"/><circle cx="55.6" cy="33.4" r="0.520"/><circle cx="49.5" cy="44.6" r="0.520"/><circle cx="35.3" cy="31.1" r="0.520"/><circle cx="32.3" cy="39.8" r="0.520"/><circle cx="38.2" cy="29.7" r="0.520"/><circle cx="49.6" cy="34.6" r="0.520"/><circle cx="34.1" cy="33.4" r="0.520"/><circle cx="55.4" cy="48.1" r="0.520"/><circle cx="25.9" cy="27.1" r="0.520"/><circle cx="41.4" cy="24.1" r="0.520"/><circle cx="33.3" cy="38.7" r="0.520"/><circle cx="48.4" cy="28.2" r="0.520"/><circle cx="46.3" cy="46.6" r="0.520"/><circle cx="42.8" cy="31.7" r="0.520"/><circle cx="29.6" cy="30.3" r="0.520"/><circle cx="33.9" cy="35.9" r="0.520"/><circle cx="36.6" cy="34.5" r="0.520"/><circle cx="56.6" cy="33.7" r="0.520"/><circle cx="36.8" cy="50.2" r="0.520"/><circle cx="50.7" cy="37.2" r="0.520"/><circle cx="55.8" cy="24.8" r="0.520"/><circle cx="34.4" cy="25.0" r="0.520"/><circle cx="38.3" cy="23.2" r="0.520"/><circle cx="17.9" cy="31.0" r="0.520"/><circle cx="39.7" cy="46.4" r="0.520"/><circle cx="53.2" cy="41.8" r="0.520"/><circle cx="33.1" cy="28.1" r="0.520"/><circle cx="48.9" cy="37.6" r="0.520"/><circle cx="54.2" cy="50.3" r="0.520"/><circle cx="49.0" cy="54.8" r="0.520"/><circle cx="39.3" cy="30.8" r="0.520"/><circle cx="47.4" cy="41.6" r="0.520"/><circle cx="36.4" cy="47.0" r="0.520"/><circle cx="39.5" cy="43.5" r="0.520"/><circle cx="73.5" cy="43.9" r="0.520"/><circle cx="38.4" cy="28.3" r="0.520"/><circle cx="36.3" cy="30.8" r="0.520"/><circle cx="46.5" cy="49.7" r="0.520"/><circle cx="48.0" cy="49.6" r="0.520"/><circle cx="53.7" cy="31.5" r="0.520"/><circle cx="35.4" cy="29.4" r="0.520"/><circle cx="31.8" cy="45.4" r="0.520"/><circle cx="32.8" cy="28.1" r="0.520"/><circle cx="53.7" cy="43.0" r="0.520"/><circle cx="57.6" cy="47.3" r="0.520"/><circle cx="35.4" cy="53.3" r="0.520"/><circle cx="38.4" cy="30.0" r="0.520"/><circle cx="44.3" cy="34.8" r="0.520"/><circle cx="33.0" cy="35.3" r="0.520"/><circle cx="38.6" cy="43.1" r="0.520"/><circle cx="56.0" cy="39.9" r="0.520"/><circle cx="29.8" cy="46.6" r="0.520"/><circle cx="49.1" cy="44.6" r="0.520"/><circle cx="58.9" cy="40.1" r="0.520"/><circle cx="31.6" cy="32.2" r="0.520"/><circle cx="57.9" cy="37.2" r="0.520"/><circle cx="44.7" cy="31.6" r="0.520"/><circle cx="38.1" cy="35.1" r="0.520"/><circle cx="55.1" cy="48.5" r="0.520"/><circle cx="45.5" cy="31.9" r="0.520"/><circle cx="41.7" cy="46.4" r="0.520"/><circle cx="37.6" cy="47.5" r="0.520"/><circle cx="34.4" cy="39.9" r="0.520"/><circle cx="37.9" cy="54.8" r="0.520"/><circle cx="41.7" cy="52.0" r="0.520"/><circle cx="53.8" cy="40.3" r="0.520"/><circle cx="41.5" cy="35.3" r="0.520"/><circle cx="48.1" cy="29.5" r="0.520"/><circle cx="39.9" cy="41.6" r="0.520"/><circle cx="50.4" cy="43.7" r="0.520"/><circle cx="43.7" cy="37.0" r="0.520"/><circle cx="60.0" cy="34.2" r="0.520"/><circle cx="47.7" cy="30.7" r="0.520"/><circle cx="24.4" cy="49.1" r="0.520"/><circle cx="43.1" cy="44.1" r="0.520"/><circle cx="39.2" cy="42.1" r="0.520"/><circle cx="56.2" cy="34.2" r="0.520"/><circle cx="44.8" cy="22.3" r="0.520"/><circle cx="55.1" cy="43.0" r="0.520"/><circle cx="53.6" cy="36.4" r="0.520"/><circle cx="36.6" cy="50.1" r="0.520"/><circle cx="40.9" cy="34.2" r="0.520"/><circle cx="45.1" cy="54.1" r="0.520"/><circle cx="31.7" cy="33.8" r="0.520"/><circle cx="51.0" cy="26.4" r="0.520"/><circle cx="29.1" cy="31.0" r="0.520"/><circle cx="27.5" cy="35.4" r="0.520"/><circle cx="46.1" cy="37.2" r="0.520"/><circle cx="39.9" cy="40.0" r="0.520"/><circle cx="25.8" cy="51.6" r="0.520"/><circle cx="23.7" cy="42.4" r="0.520"/><circle cx="44.8" cy="40.1" r="0.520"/><circle cx="39.0" cy="24.3" r="0.520"/><circle cx="49.5" cy="45.7" r="0.520"/><circle cx="43.2" cy="50.6" r="0.520"/><circle cx="57.9" cy="26.5" r="0.520"/><circle cx="22.4" cy="51.8" r="0.520"/><circle cx="51.9" cy="39.8" r="0.520"/><circle cx="34.7" cy="43.3" r="0.520"/><circle cx="33.3" cy="47.1" r="0.520"/><circle cx="56.3" cy="37.5" r="0.520"/><circle cx="21.2" cy="33.6" r="0.520"/><circle cx="43.5" cy="32.0" r="0.520"/><circle cx="40.2" cy="33.4" r="0.520"/><circle cx="59.1" cy="29.3" r="0.520"/><circle cx="26.9" cy="38.5" r="0.520"/><circle cx="48.8" cy="34.5" r="0.520"/><circle cx="50.3" cy="44.1" r="0.520"/><circle cx="44.4" cy="46.4" r="0.520"/><circle cx="45.9" cy="42.4" r="0.520"/><circle cx="42.7" cy="46.5" r="0.520"/><circle cx="26.9" cy="47.3" r="0.520"/><circle cx="38.1" cy="42.9" r="0.520"/><circle cx="21.2" cy="44.9" r="0.520"/><circle cx="56.0" cy="24.5" r="0.520"/><circle cx="56.1" cy="43.5" r="0.520"/><circle cx="27.5" cy="38.8" r="0.520"/><circle cx="59.2" cy="41.2" r="0.520"/><circle cx="42.4" cy="55.6" r="0.520"/><circle cx="26.1" cy="33.5" r="0.520"/><circle cx="35.7" cy="41.2" r="0.520"/><circle cx="51.6" cy="44.0" r="0.520"/><circle cx="43.3" cy="42.6" r="0.520"/><circle cx="31.5" cy="53.8" r="0.520"/><circle cx="52.5" cy="28.0" r="0.520"/><circle cx="41.9" cy="31.6" r="0.520"/><circle cx="38.4" cy="35.8" r="0.520"/><circle cx="29.4" cy="44.8" r="0.520"/><circle cx="50.7" cy="37.7" r="0.520"/><circle cx="54.8" cy="52.6" r="0.520"/><circle cx="31.8" cy="38.5" r="0.520"/><circle cx="40.9" cy="38.9" r="0.520"/><circle cx="41.2" cy="32.5" r="0.520"/><circle cx="46.4" cy="36.9" r="0.520"/><circle cx="31.3" cy="23.0" r="0.520"/><circle cx="68.6" cy="44.1" r="0.520"/><circle cx="47.8" cy="58.9" r="0.520"/><circle cx="55.2" cy="28.5" r="0.520"/><circle cx="40.6" cy="32.0" r="0.520"/><circle cx="70.0" cy="40.9" r="0.520"/><circle cx="49.9" cy="31.1" r="0.520"/><circle cx="22.6" cy="27.1" r="0.520"/><circle cx="56.7" cy="47.5" r="0.520"/><circle cx="44.0" cy="42.0" r="0.520"/><circle cx="31.7" cy="54.8" r="0.520"/><circle cx="43.9" cy="35.9" r="0.520"/><circle cx="33.6" cy="43.2" r="0.520"/><circle cx="53.1" cy="38.4" r="0.520"/><circle cx="52.0" cy="35.0" r="0.520"/><circle cx="27.7" cy="40.7" r="0.520"/><circle cx="52.6" cy="57.8" r="0.520"/><circle cx="57.3" cy="39.8" r="0.520"/><circle cx="14.4" cy="33.7" r="0.520"/><circle cx="60.4" cy="46.5" r="0.520"/><circle cx="52.6" cy="31.3" r="0.520"/><circle cx="54.6" cy="46.2" r="0.520"/><circle cx="61.9" cy="36.6" r="0.520"/><circle cx="44.0" cy="46.0" r="0.520"/><circle cx="34.1" cy="43.8" r="0.520"/><circle cx="49.1" cy="42.5" r="0.520"/><circle cx="42.6" cy="56.8" r="0.520"/><circle cx="50.0" cy="32.2" r="0.520"/><circle cx="16.4" cy="40.9" r="0.520"/><circle cx="39.6" cy="48.6" r="0.520"/><circle cx="76.0" cy="48.0" r="0.520"/><circle cx="49.1" cy="45.8" r="0.520"/><circle cx="56.7" cy="44.6" r="0.520"/><circle cx="48.7" cy="35.5" r="0.520"/><circle cx="40.4" cy="41.7" r="0.520"/><circle cx="54.8" cy="46.0" r="0.520"/><circle cx="53.6" cy="21.8" r="0.520"/><circle cx="40.3" cy="43.3" r="0.520"/><circle cx="42.3" cy="38.4" r="0.520"/><circle cx="52.7" cy="53.8" r="0.520"/><circle cx="34.9" cy="34.3" r="0.520"/><circle cx="34.4" cy="38.8" r="0.520"/><circle cx="58.8" cy="47.8" r="0.520"/><circle cx="58.5" cy="41.7" r="0.520"/><circle cx="42.3" cy="33.4" r="0.520"/><circle cx="63.6" cy="41.4" r="0.520"/><circle cx="55.0" cy="27.3" r="0.520"/><circle cx="49.6" cy="30.8" r="0.520"/><circle cx="38.4" cy="43.0" r="0.520"/><circle cx="54.0" cy="34.6" r="0.520"/><circle cx="38.1" cy="45.9" r="0.520"/><circle cx="43.7" cy="31.5" r="0.520"/><circle cx="37.1" cy="43.9" r="0.520"/><circle cx="59.3" cy="36.9" r="0.520"/><circle cx="46.3" cy="53.3" r="0.520"/><circle cx="44.8" cy="19.8" r="0.520"/><circle cx="52.8" cy="36.4" r="0.520"/><circle cx="74.8" cy="31.9" r="0.520"/><circle cx="57.4" cy="44.6" r="0.520"/><circle cx="26.0" cy="51.7" r="0.520"/><circle cx="44.8" cy="23.0" r="0.520"/><circle cx="46.0" cy="46.6" r="0.520"/><circle cx="37.8" cy="42.7" r="0.520"/><circle cx="33.0" cy="36.3" r="0.520"/><circle cx="65.4" cy="37.5" r="0.520"/><circle cx="54.0" cy="52.6" r="0.520"/><circle cx="56.1" cy="35.0" r="0.520"/><circle cx="49.4" cy="45.2" r="0.520"/><circle cx="55.1" cy="34.3" r="0.520"/><circle cx="50.9" cy="42.8" r="0.520"/><circle cx="47.0" cy="52.5" r="0.520"/><circle cx="42.6" cy="43.1" r="0.520"/><circle cx="32.9" cy="59.7" r="0.520"/><circle cx="36.1" cy="32.1" r="0.520"/><circle cx="44.2" cy="44.0" r="0.520"/><circle cx="33.9" cy="32.9" r="0.520"/><circle cx="48.9" cy="25.8" r="0.520"/><circle cx="33.8" cy="36.1" r="0.520"/><circle cx="54.2" cy="41.5" r="0.520"/><circle cx="27.7" cy="32.7" r="0.520"/><circle cx="48.6" cy="47.7" r="0.520"/><circle cx="60.1" cy="29.2" r="0.520"/><circle cx="55.1" cy="51.2" r="0.520"/><circle cx="38.3" cy="30.1" r="0.520"/><circle cx="60.6" cy="50.6" r="0.520"/><circle cx="45.1" cy="43.3" r="0.520"/><circle cx="49.0" cy="44.5" r="0.520"/><circle cx="44.1" cy="45.0" r="0.520"/><circle cx="23.5" cy="36.3" r="0.520"/><circle cx="51.5" cy="30.3" r="0.520"/><circle cx="49.9" cy="34.6" r="0.520"/><circle cx="53.8" cy="36.3" r="0.520"/><circle cx="32.8" cy="47.4" r="0.520"/><circle cx="54.4" cy="38.0" r="0.520"/><circle cx="36.8" cy="40.8" r="0.520"/><circle cx="30.4" cy="41.3" r="0.520"/><circle cx="32.2" cy="50.0" r="0.520"/><circle cx="47.1" cy="26.6" r="0.520"/><circle cx="39.7" cy="53.0" r="0.520"/><circle cx="63.3" cy="50.5" r="0.520"/><circle cx="54.3" cy="58.7" r="0.520"/><circle cx="58.5" cy="52.0" r="0.520"/><circle cx="42.6" cy="39.3" r="0.520"/><circle cx="31.6" cy="43.8" r="0.520"/><circle cx="25.2" cy="44.2" r="0.520"/><circle cx="41.9" cy="44.8" r="0.520"/><circle cx="60.1" cy="41.3" r="0.520"/><circle cx="59.8" cy="41.5" r="0.520"/><circle cx="24.6" cy="33.9" r="0.520"/><circle cx="47.9" cy="32.7" r="0.520"/><circle cx="53.2" cy="53.8" r="0.520"/><circle cx="32.7" cy="21.3" r="0.520"/><circle cx="44.8" cy="29.1" r="0.520"/><circle cx="35.9" cy="40.8" r="0.520"/><circle cx="46.5" cy="50.3" r="0.520"/><circle cx="47.1" cy="55.5" r="0.520"/><circle cx="40.7" cy="54.9" r="0.520"/><circle cx="43.2" cy="41.1" r="0.520"/><circle cx="36.4" cy="50.0" r="0.520"/><circle cx="45.9" cy="49.3" r="0.520"/><circle cx="50.4" cy="48.0" r="0.520"/><circle cx="57.2" cy="44.6" r="0.520"/><circle cx="28.6" cy="39.1" r="0.520"/><circle cx="42.2" cy="31.2" r="0.520"/><circle cx="51.7" cy="53.9" r="0.520"/><circle cx="36.0" cy="45.3" r="0.520"/><circle cx="36.3" cy="27.6" r="0.520"/><circle cx="43.8" cy="36.1" r="0.520"/><circle cx="53.6" cy="40.1" r="0.520"/><circle cx="27.8" cy="44.6" r="0.520"/><circle cx="47.4" cy="43.7" r="0.520"/><circle cx="51.0" cy="38.8" r="0.520"/><circle cx="28.0" cy="29.0" r="0.520"/><circle cx="46.4" cy="41.0" r="0.520"/><circle cx="62.1" cy="36.6" r="0.520"/><circle cx="44.5" cy="50.0" r="0.520"/><circle cx="42.7" cy="32.4" r="0.520"/><circle cx="62.0" cy="33.7" r="0.520"/><circle cx="37.6" cy="32.8" r="0.520"/><circle cx="42.6" cy="26.3" r="0.520"/><circle cx="60.8" cy="23.3" r="0.520"/><circle cx="66.0" cy="31.8" r="0.520"/><circle cx="31.6" cy="53.1" r="0.520"/><circle cx="42.3" cy="41.4" r="0.520"/><circle cx="50.5" cy="35.5" r="0.520"/><circle cx="60.1" cy="41.3" r="0.520"/><circle cx="50.2" cy="28.6" r="0.520"/><circle cx="37.4" cy="32.9" r="0.520"/><circle cx="54.2" cy="40.7" r="0.520"/><circle cx="17.5" cy="57.4" r="0.520"/><circle cx="46.3" cy="29.3" r="0.520"/><circle cx="53.6" cy="34.8" r="0.520"/><circle cx="58.1" cy="41.0" r="0.520"/><circle cx="50.1" cy="38.3" r="0.520"/><circle cx="27.3" cy="37.6" r="0.520"/><circle cx="56.0" cy="39.5" r="0.520"/><circle cx="38.1" cy="54.0" r="0.520"/><circle cx="39.0" cy="52.0" r="0.520"/><circle cx="58.6" cy="53.0" r="0.520"/><circle cx="20.6" cy="25.5" r="0.520"/><circle cx="71.7" cy="31.7" r="0.520"/><circle cx="55.5" cy="37.2" r="0.520"/><circle cx="55.4" cy="34.5" r="0.520"/><circle cx="42.8" cy="44.1" r="0.520"/><circle cx="53.1" cy="22.6" r="0.520"/><circle cx="52.0" cy="56.4" r="0.520"/><circle cx="47.5" cy="58.6" r="0.520"/><circle cx="26.3" cy="38.1" r="0.520"/><circle cx="50.0" cy="41.6" r="0.520"/><circle cx="47.7" cy="46.6" r="0.520"/><circle cx="56.0" cy="41.6" r="0.520"/><circle cx="49.7" cy="40.2" r="0.520"/><circle cx="47.9" cy="44.1" r="0.520"/><circle cx="46.6" cy="34.1" r="0.520"/><circle cx="26.6" cy="24.0" r="0.520"/><circle cx="22.1" cy="28.8" r="0.520"/><circle cx="43.3" cy="52.2" r="0.520"/><circle cx="36.1" cy="33.3" r="0.520"/><circle cx="50.1" cy="33.6" r="0.520"/><circle cx="29.8" cy="46.1" r="0.520"/><circle cx="37.8" cy="31.9" r="0.520"/><circle cx="53.2" cy="37.9" r="0.520"/><circle cx="44.7" cy="45.7" r="0.520"/><circle cx="34.0" cy="41.8" r="0.520"/><circle cx="51.3" cy="38.3" r="0.520"/><circle cx="47.8" cy="18.6" r="0.520"/><circle cx="32.1" cy="42.6" r="0.520"/><circle cx="36.9" cy="44.5" r="0.520"/><circle cx="47.0" cy="47.6" r="0.520"/><circle cx="42.2" cy="44.1" r="0.520"/><circle cx="41.4" cy="26.9" r="0.520"/><circle cx="38.1" cy="37.7" r="0.520"/><circle cx="11.9" cy="45.9" r="0.520"/><circle cx="50.4" cy="36.1" r="0.520"/><circle cx="48.3" cy="43.0" r="0.520"/><circle cx="42.9" cy="44.0" r="0.520"/><circle cx="22.8" cy="23.9" r="0.520"/><circle cx="39.5" cy="55.2" r="0.520"/><circle cx="44.3" cy="42.1" r="0.520"/><circle cx="41.8" cy="57.2" r="0.520"/><circle cx="43.2" cy="51.1" r="0.520"/><circle cx="17.5" cy="27.0" r="0.520"/><circle cx="51.7" cy="38.3" r="0.520"/><circle cx="51.2" cy="27.2" r="0.520"/><circle cx="52.2" cy="38.9" r="0.520"/><circle cx="59.8" cy="51.6" r="0.520"/><circle cx="46.8" cy="16.7" r="0.520"/><circle cx="60.5" cy="48.0" r="0.520"/><circle cx="29.4" cy="54.1" r="0.520"/><circle cx="52.3" cy="42.0" r="0.520"/><circle cx="41.3" cy="44.4" r="0.520"/><circle cx="61.1" cy="35.3" r="0.520"/><circle cx="38.3" cy="40.4" r="0.520"/><circle cx="37.7" cy="55.8" r="0.520"/><circle cx="36.3" cy="41.2" r="0.520"/><circle cx="49.9" cy="35.3" r="0.520"/><circle cx="34.4" cy="21.7" r="0.520"/><circle cx="54.3" cy="42.6" r="0.520"/><circle cx="52.8" cy="51.0" r="0.520"/><circle cx="44.6" cy="30.7" r="0.520"/><circle cx="45.6" cy="43.6" r="0.520"/><circle cx="36.3" cy="16.0" r="0.520"/><circle cx="66.9" cy="50.1" r="0.520"/><circle cx="53.8" cy="38.5" r="0.520"/><circle cx="30.0" cy="56.1" r="0.520"/><circle cx="56.0" cy="35.4" r="0.520"/><circle cx="30.7" cy="51.2" r="0.520"/><circle cx="47.4" cy="25.7" r="0.520"/><circle cx="51.2" cy="26.1" r="0.520"/><circle cx="39.7" cy="48.4" r="0.520"/><circle cx="36.5" cy="31.0" r="0.520"/><circle cx="47.8" cy="45.9" r="0.520"/><circle cx="50.3" cy="40.0" r="0.520"/><circle cx="46.0" cy="34.3" r="0.520"/><circle cx="48.0" cy="35.1" r="0.520"/><circle cx="26.8" cy="45.3" r="0.520"/><circle cx="42.8" cy="24.4" r="0.520"/><circle cx="31.5" cy="33.5" r="0.520"/><circle cx="44.6" cy="30.7" r="0.520"/><circle cx="30.6" cy="37.2" r="0.520"/><circle cx="33.5" cy="36.0" r="0.520"/><circle cx="31.8" cy="28.0" r="0.520"/><circle cx="37.8" cy="36.0" r="0.520"/><circle cx="39.3" cy="41.0" r="0.520"/><circle cx="41.1" cy="31.5" r="0.520"/><circle cx="49.6" cy="53.4" r="0.520"/><circle cx="31.1" cy="42.8" r="0.520"/><circle cx="61.7" cy="51.5" r="0.520"/><circle cx="38.0" cy="43.6" r="0.520"/><circle cx="33.0" cy="56.2" r="0.520"/><circle cx="45.8" cy="38.8" r="0.520"/><circle cx="37.1" cy="32.3" r="0.520"/><circle cx="36.4" cy="52.5" r="0.520"/><circle cx="44.4" cy="26.0" r="0.520"/><circle cx="26.9" cy="31.7" r="0.520"/><circle cx="54.3" cy="50.6" r="0.520"/><circle cx="25.6" cy="41.4" r="0.520"/><circle cx="33.8" cy="35.6" r="0.520"/><circle cx="55.0" cy="47.5" r="0.520"/><circle cx="55.6" cy="41.7" r="0.520"/><circle cx="46.3" cy="44.1" r="0.520"/><circle cx="25.0" cy="40.9" r="0.520"/><circle cx="37.5" cy="34.6" r="0.520"/><circle cx="34.8" cy="51.3" r="0.520"/><circle cx="34.4" cy="42.4" r="0.520"/><circle cx="38.2" cy="51.0" r="0.520"/><circle cx="46.7" cy="44.9" r="0.520"/><circle cx="52.5" cy="29.2" r="0.520"/><circle cx="45.0" cy="48.6" r="0.520"/><circle cx="31.8" cy="25.4" r="0.520"/><circle cx="42.6" cy="32.0" r="0.520"/><circle cx="45.3" cy="45.1" r="0.520"/><circle cx="52.8" cy="38.1" r="0.520"/><circle cx="35.0" cy="47.2" r="0.520"/><circle cx="36.7" cy="18.0" r="0.520"/><circle cx="34.6" cy="32.6" r="0.520"/><circle cx="28.9" cy="42.1" r="0.520"/><circle cx="47.0" cy="39.1" r="0.520"/><circle cx="35.8" cy="42.9" r="0.520"/><circle cx="53.5" cy="41.2" r="0.520"/><circle cx="52.7" cy="46.0" r="0.520"/><circle cx="42.8" cy="34.3" r="0.520"/><circle cx="45.6" cy="46.5" r="0.520"/><circle cx="38.1" cy="22.4" r="0.520"/><circle cx="45.3" cy="39.4" r="0.520"/><circle cx="44.2" cy="29.8" r="0.520"/><circle cx="56.8" cy="44.3" r="0.520"/><circle cx="37.4" cy="51.1" r="0.520"/><circle cx="56.0" cy="34.6" r="0.520"/><circle cx="51.0" cy="35.6" r="0.520"/><circle cx="47.5" cy="31.1" r="0.520"/><circle cx="29.2" cy="34.7" r="0.520"/><circle cx="31.3" cy="29.5" r="0.520"/><circle cx="43.1" cy="16.0" r="0.520"/><circle cx="44.9" cy="50.9" r="0.520"/><circle cx="28.4" cy="34.2" r="0.520"/><circle cx="64.1" cy="35.3" r="0.520"/><circle cx="45.5" cy="40.8" r="0.520"/><circle cx="42.0" cy="40.3" r="0.520"/><circle cx="50.0" cy="32.7" r="0.520"/><circle cx="34.4" cy="31.2" r="0.520"/><circle cx="18.6" cy="44.6" r="0.520"/><circle cx="42.2" cy="30.7" r="0.520"/><circle cx="35.1" cy="24.1" r="0.520"/><circle cx="44.0" cy="40.0" r="0.520"/><circle cx="46.0" cy="31.9" r="0.520"/><circle cx="24.8" cy="48.6" r="0.520"/><circle cx="34.4" cy="52.8" r="0.520"/><circle cx="54.7" cy="40.1" r="0.520"/><circle cx="61.4" cy="36.1" r="0.520"/><circle cx="43.3" cy="29.1" r="0.520"/><circle cx="45.8" cy="50.2" r="0.520"/><circle cx="48.5" cy="48.0" r="0.520"/><circle cx="47.9" cy="39.2" r="0.520"/><circle cx="76.2" cy="37.4" r="0.520"/><circle cx="65.0" cy="23.6" r="0.520"/><circle cx="37.2" cy="49.3" r="0.520"/><circle cx="41.1" cy="44.9" r="0.520"/><circle cx="58.8" cy="30.3" r="0.520"/><circle cx="51.9" cy="41.7" r="0.520"/><circle cx="56.4" cy="36.5" r="0.520"/><circle cx="53.0" cy="51.4" r="0.520"/><circle cx="34.7" cy="52.9" r="0.520"/><circle cx="29.9" cy="47.9" r="0.520"/><circle cx="27.3" cy="43.6" r="0.520"/><circle cx="36.6" cy="25.8" r="0.520"/><circle cx="50.0" cy="27.5" r="0.520"/><circle cx="38.5" cy="34.3" r="0.520"/><circle cx="69.4" cy="34.2" r="0.520"/><circle cx="25.7" cy="26.4" r="0.520"/><circle cx="41.8" cy="45.5" r="0.520"/><circle cx="57.5" cy="27.4" r="0.520"/><circle cx="67.6" cy="48.8" r="0.520"/><circle cx="33.4" cy="37.2" r="0.520"/><circle cx="48.5" cy="27.1" r="0.520"/><circle cx="53.3" cy="40.8" r="0.520"/><circle cx="21.0" cy="40.8" r="0.520"/><circle cx="54.5" cy="26.0" r="0.520"/><circle cx="46.8" cy="31.4" r="0.520"/><circle cx="39.8" cy="37.9" r="0.520"/><circle cx="56.5" cy="32.9" r="0.520"/><circle cx="45.7" cy="57.7" r="0.520"/><circle cx="35.7" cy="56.3" r="0.520"/><circle cx="61.1" cy="36.8" r="0.520"/><circle cx="37.1" cy="37.0" r="0.520"/><circle cx="60.3" cy="58.6" r="0.520"/><circle cx="15.9" cy="36.1" r="0.520"/><circle cx="55.8" cy="30.7" r="0.520"/><circle cx="41.1" cy="46.7" r="0.520"/><circle cx="48.2" cy="26.2" r="0.520"/><circle cx="47.0" cy="38.7" r="0.520"/><circle cx="57.2" cy="53.1" r="0.520"/><circle cx="34.7" cy="29.6" r="0.520"/><circle cx="42.6" cy="44.6" r="0.520"/><circle cx="41.0" cy="39.8" r="0.520"/><circle cx="50.7" cy="47.0" r="0.520"/><circle cx="44.8" cy="53.2" r="0.520"/><circle cx="48.3" cy="42.6" r="0.520"/><circle cx="49.4" cy="51.7" r="0.520"/><circle cx="24.6" cy="35.3" r="0.520"/><circle cx="42.2" cy="32.1" r="0.520"/><circle cx="46.2" cy="39.5" r="0.520"/><circle cx="47.6" cy="26.3" r="0.520"/><circle cx="74.9" cy="34.1" r="0.520"/><circle cx="54.8" cy="37.0" r="0.520"/><circle cx="60.8" cy="52.0" r="0.520"/><circle cx="39.8" cy="49.0" r="0.520"/><circle cx="55.0" cy="21.7" r="0.520"/><circle cx="67.0" cy="35.8" r="0.520"/><circle cx="39.8" cy="37.4" r="0.520"/><circle cx="37.7" cy="27.6" r="0.520"/><circle cx="27.0" cy="55.5" r="0.520"/><circle cx="29.5" cy="36.5" r="0.520"/><circle cx="65.5" cy="49.1" r="0.520"/><circle cx="27.3" cy="46.4" r="0.520"/><circle cx="44.0" cy="33.2" r="0.520"/><circle cx="54.6" cy="56.7" r="0.520"/><circle cx="47.3" cy="43.4" r="0.520"/><circle cx="48.4" cy="34.5" r="0.520"/><circle cx="44.2" cy="42.7" r="0.520"/><circle cx="57.4" cy="33.6" r="0.520"/><circle cx="28.1" cy="55.4" r="0.520"/><circle cx="40.7" cy="43.1" r="0.520"/><circle cx="44.5" cy="47.4" r="0.520"/><circle cx="22.4" cy="41.3" r="0.520"/><circle cx="36.3" cy="55.8" r="0.520"/><circle cx="42.8" cy="40.3" r="0.520"/><circle cx="63.4" cy="42.2" r="0.520"/><circle cx="37.4" cy="49.7" r="0.520"/><circle cx="59.3" cy="39.4" r="0.520"/><circle cx="36.4" cy="27.3" r="0.520"/><circle cx="65.3" cy="42.2" r="0.520"/><circle cx="40.1" cy="54.9" r="0.520"/><circle cx="57.7" cy="41.7" r="0.520"/><circle cx="80.6" cy="23.9" r="0.520"/><circle cx="57.0" cy="42.4" r="0.520"/><circle cx="62.7" cy="39.8" r="0.520"/><circle cx="32.2" cy="39.0" r="0.520"/><circle cx="52.0" cy="47.2" r="0.520"/><circle cx="53.9" cy="39.6" r="0.520"/><circle cx="42.7" cy="52.2" r="0.520"/><circle cx="48.3" cy="48.3" r="0.520"/><circle cx="31.6" cy="38.9" r="0.520"/><circle cx="39.2" cy="42.2" r="0.520"/><circle cx="29.9" cy="41.1" r="0.520"/><circle cx="26.4" cy="39.4" r="0.520"/><circle cx="53.7" cy="28.0" r="0.520"/><circle cx="34.9" cy="25.4" r="0.520"/><circle cx="48.7" cy="50.0" r="0.520"/><circle cx="67.3" cy="26.8" r="0.520"/><circle cx="58.1" cy="51.1" r="0.520"/><circle cx="37.1" cy="40.9" r="0.520"/><circle cx="41.7" cy="35.9" r="0.520"/><circle cx="36.8" cy="52.9" r="0.520"/><circle cx="44.8" cy="29.4" r="0.520"/><circle cx="65.5" cy="26.0" r="0.520"/><circle cx="64.5" cy="55.3" r="0.520"/><circle cx="38.5" cy="29.8" r="0.520"/><circle cx="28.2" cy="45.9" r="0.520"/><circle cx="57.6" cy="32.1" r="0.520"/><circle cx="17.0" cy="30.7" r="0.520"/><circle cx="51.8" cy="50.7" r="0.520"/><circle cx="17.1" cy="29.3" r="0.520"/><circle cx="49.8" cy="36.6" r="0.520"/><circle cx="47.4" cy="44.3" r="0.520"/><circle cx="39.5" cy="21.4" r="0.520"/><circle cx="31.1" cy="46.2" r="0.520"/><circle cx="51.3" cy="22.8" r="0.520"/><circle cx="50.1" cy="53.8" r="0.520"/><circle cx="46.5" cy="58.7" r="0.520"/><circle cx="73.3" cy="52.3" r="0.520"/><circle cx="41.8" cy="41.3" r="0.520"/><circle cx="38.3" cy="12.4" r="0.520"/><circle cx="62.1" cy="18.3" r="0.520"/><circle cx="82.2" cy="33.7" r="0.520"/><circle cx="37.3" cy="37.8" r="0.520"/><circle cx="42.7" cy="43.0" r="0.520"/><circle cx="39.3" cy="35.4" r="0.520"/><circle cx="48.5" cy="51.3" r="0.520"/><circle cx="54.8" cy="23.0" r="0.520"/><circle cx="36.2" cy="37.9" r="0.520"/><circle cx="42.1" cy="37.9" r="0.520"/><circle cx="33.5" cy="54.4" r="0.520"/><circle cx="47.5" cy="51.1" r="0.520"/><circle cx="41.7" cy="47.2" r="0.520"/><circle cx="49.8" cy="31.2" r="0.520"/><circle cx="42.1" cy="30.9" r="0.520"/><circle cx="46.8" cy="33.4" r="0.520"/><circle cx="24.8" cy="34.6" r="0.520"/><circle cx="37.4" cy="50.6" r="0.520"/><circle cx="39.8" cy="57.9" r="0.520"/><circle cx="47.1" cy="36.9" r="0.520"/><circle cx="31.9" cy="38.0" r="0.520"/><circle cx="38.4" cy="37.8" r="0.520"/><circle cx="56.6" cy="19.4" r="0.520"/><circle cx="50.1" cy="43.6" r="0.520"/><circle cx="36.9" cy="52.3" r="0.520"/><circle cx="44.5" cy="37.2" r="0.520"/><circle cx="40.7" cy="50.1" r="0.520"/><circle cx="47.6" cy="28.3" r="0.520"/><circle cx="41.2" cy="27.8" r="0.520"/><circle cx="33.3" cy="43.5" r="0.520"/><circle cx="46.1" cy="32.4" r="0.520"/><circle cx="26.2" cy="17.3" r="0.520"/><circle cx="52.7" cy="57.8" r="0.520"/><circle cx="56.6" cy="34.7" r="0.520"/><circle cx="55.4" cy="35.6" r="0.520"/><circle cx="28.1" cy="33.7" r="0.520"/><circle cx="43.1" cy="28.3" r="0.520"/><circle cx="55.1" cy="46.7" r="0.520"/><circle cx="47.6" cy="27.1" r="0.520"/><circle cx="48.6" cy="43.4" r="0.520"/><circle cx="46.7" cy="52.0" r="0.520"/><circle cx="54.6" cy="49.1" r="0.520"/><circle cx="43.1" cy="36.9" r="0.520"/><circle cx="25.3" cy="47.1" r="0.520"/><circle cx="48.5" cy="51.0" r="0.520"/><circle cx="71.3" cy="42.0" r="0.520"/><circle cx="53.8" cy="60.5" r="0.520"/><circle cx="52.7" cy="48.7" r="0.520"/><circle cx="68.9" cy="26.7" r="0.520"/><circle cx="35.9" cy="23.9" r="0.520"/><circle cx="33.1" cy="51.5" r="0.520"/><circle cx="40.2" cy="49.6" r="0.520"/><circle cx="50.8" cy="37.7" r="0.520"/><circle cx="67.1" cy="27.2" r="0.520"/><circle cx="58.5" cy="49.5" r="0.520"/><circle cx="44.7" cy="44.5" r="0.520"/><circle cx="63.0" cy="34.9" r="0.520"/><circle cx="49.2" cy="50.3" r="0.520"/><circle cx="49.2" cy="43.9" r="0.520"/><circle cx="43.4" cy="40.8" r="0.520"/><circle cx="34.4" cy="40.0" r="0.520"/><circle cx="42.7" cy="32.8" r="0.520"/><circle cx="33.6" cy="27.0" r="0.520"/><circle cx="20.2" cy="30.4" r="0.520"/><circle cx="35.3" cy="34.7" r="0.520"/><circle cx="61.5" cy="36.8" r="0.520"/><circle cx="42.0" cy="40.6" r="0.520"/><circle cx="28.1" cy="29.5" r="0.520"/><circle cx="47.0" cy="27.3" r="0.520"/><circle cx="74.2" cy="53.8" r="0.520"/><circle cx="44.0" cy="55.9" r="0.520"/><circle cx="75.3" cy="31.4" r="0.520"/><circle cx="52.2" cy="41.4" r="0.520"/><circle cx="20.5" cy="31.9" r="0.520"/><circle cx="49.5" cy="32.5" r="0.520"/><circle cx="71.4" cy="44.3" r="0.520"/><circle cx="51.7" cy="29.0" r="0.520"/><circle cx="31.3" cy="32.7" r="0.520"/><circle cx="50.5" cy="44.9" r="0.520"/><circle cx="61.8" cy="33.3" r="0.520"/><circle cx="26.8" cy="30.2" r="0.520"/><circle cx="47.4" cy="40.8" r="0.520"/><circle cx="49.8" cy="42.4" r="0.520"/><circle cx="58.9" cy="23.9" r="0.520"/><circle cx="41.1" cy="45.6" r="0.520"/><circle cx="35.2" cy="31.2" r="0.520"/><circle cx="53.5" cy="30.5" r="0.520"/><circle cx="49.8" cy="31.0" r="0.520"/><circle cx="45.1" cy="34.2" r="0.520"/><circle cx="39.9" cy="49.1" r="0.520"/><circle cx="56.0" cy="43.4" r="0.520"/><circle cx="39.6" cy="34.9" r="0.520"/><circle cx="72.5" cy="28.8" r="0.520"/><circle cx="41.5" cy="27.0" r="0.520"/><circle cx="61.3" cy="35.1" r="0.520"/><circle cx="58.7" cy="24.3" r="0.520"/><circle cx="51.0" cy="42.4" r="0.520"/><circle cx="44.0" cy="43.2" r="0.520"/><circle cx="59.2" cy="34.1" r="0.520"/><circle cx="47.1" cy="36.8" r="0.520"/><circle cx="34.8" cy="33.5" r="0.520"/><circle cx="46.8" cy="36.3" r="0.520"/><circle cx="50.7" cy="44.4" r="0.520"/><circle cx="24.4" cy="40.2" r="0.520"/><circle cx="59.0" cy="47.1" r="0.520"/><circle cx="22.6" cy="40.7" r="0.520"/><circle cx="48.2" cy="30.5" r="0.520"/><circle cx="44.2" cy="43.1" r="0.520"/><circle cx="24.3" cy="40.1" r="0.520"/><circle cx="42.3" cy="43.2" r="0.520"/><circle cx="32.4" cy="42.5" r="0.520"/><circle cx="49.6" cy="44.9" r="0.520"/><circle cx="37.1" cy="58.7" r="0.520"/><circle cx="47.8" cy="20.9" r="0.520"/><circle cx="49.4" cy="33.7" r="0.520"/><circle cx="58.5" cy="40.4" r="0.520"/><circle cx="34.4" cy="51.2" r="0.520"/><circle cx="65.7" cy="41.5" r="0.520"/><circle cx="19.9" cy="49.6" r="0.520"/><circle cx="31.2" cy="39.3" r="0.520"/><circle cx="39.1" cy="55.1" r="0.520"/><circle cx="24.1" cy="41.0" r="0.520"/><circle cx="23.0" cy="41.3" r="0.520"/><circle cx="48.4" cy="54.7" r="0.520"/><circle cx="23.1" cy="49.3" r="0.520"/><circle cx="34.7" cy="42.9" r="0.520"/><circle cx="54.3" cy="38.3" r="0.520"/><circle cx="58.4" cy="37.8" r="0.520"/><circle cx="39.9" cy="41.0" r="0.520"/><circle cx="53.2" cy="48.6" r="0.520"/><circle cx="54.0" cy="31.2" r="0.520"/><circle cx="51.1" cy="44.4" r="0.520"/><circle cx="41.1" cy="43.7" r="0.520"/><circle cx="32.7" cy="36.4" r="0.520"/><circle cx="27.1" cy="30.9" r="0.520"/><circle cx="61.5" cy="44.6" r="0.520"/><circle cx="50.7" cy="34.4" r="0.520"/><circle cx="42.7" cy="60.0" r="0.520"/><circle cx="43.5" cy="51.7" r="0.520"/><circle cx="53.9" cy="56.8" r="0.520"/><circle cx="55.5" cy="37.0" r="0.520"/><circle cx="43.6" cy="53.7" r="0.520"/><circle cx="31.3" cy="56.9" r="0.520"/><circle cx="53.9" cy="35.6" r="0.520"/><circle cx="39.4" cy="35.6" r="0.520"/><circle cx="26.2" cy="55.4" r="0.520"/><circle cx="60.7" cy="47.0" r="0.520"/><circle cx="67.0" cy="35.1" r="0.520"/><circle cx="48.6" cy="45.4" r="0.520"/><circle cx="43.9" cy="41.7" r="0.520"/><circle cx="42.9" cy="51.1" r="0.520"/><circle cx="40.2" cy="33.8" r="0.520"/><circle cx="38.7" cy="32.1" r="0.520"/><circle cx="34.2" cy="44.9" r="0.520"/><circle cx="34.0" cy="53.3" r="0.520"/><circle cx="37.4" cy="31.7" r="0.520"/><circle cx="42.4" cy="34.8" r="0.520"/><circle cx="45.3" cy="40.4" r="0.520"/><circle cx="49.7" cy="37.1" r="0.520"/><circle cx="31.4" cy="52.4" r="0.520"/><circle cx="51.3" cy="39.6" r="0.520"/><circle cx="32.2" cy="43.0" r="0.520"/><circle cx="31.7" cy="25.9" r="0.520"/><circle cx="49.4" cy="39.6" r="0.520"/><circle cx="22.6" cy="26.3" r="0.520"/><circle cx="42.4" cy="38.5" r="0.520"/><circle cx="19.7" cy="43.0" r="0.520"/><circle cx="37.6" cy="39.7" r="0.520"/><circle cx="51.6" cy="48.7" r="0.520"/><circle cx="53.7" cy="42.3" r="0.520"/><circle cx="30.4" cy="20.5" r="0.520"/><circle cx="31.1" cy="26.3" r="0.520"/><circle cx="62.8" cy="31.7" r="0.520"/><circle cx="49.0" cy="26.6" r="0.520"/><circle cx="61.2" cy="33.7" r="0.520"/><circle cx="25.1" cy="42.2" r="0.520"/><circle cx="61.6" cy="26.3" r="0.520"/><circle cx="48.6" cy="37.5" r="0.520"/><circle cx="29.1" cy="37.6" r="0.520"/><circle cx="45.1" cy="58.9" r="0.520"/><circle cx="62.2" cy="43.1" r="0.520"/><circle cx="51.5" cy="58.7" r="0.520"/><circle cx="29.7" cy="38.4" r="0.520"/><circle cx="24.9" cy="35.7" r="0.520"/><circle cx="58.6" cy="44.2" r="0.520"/><circle cx="40.5" cy="37.3" r="0.520"/><circle cx="34.4" cy="35.5" r="0.520"/><circle cx="38.0" cy="34.5" r="0.520"/><circle cx="35.2" cy="40.8" r="0.520"/><circle cx="26.3" cy="45.7" r="0.520"/><circle cx="41.3" cy="23.9" r="0.520"/><circle cx="47.3" cy="24.6" r="0.520"/><circle cx="26.0" cy="38.2" r="0.520"/><circle cx="56.8" cy="23.0" r="0.520"/><circle cx="34.1" cy="32.0" r="0.520"/><circle cx="47.6" cy="48.1" r="0.520"/><circle cx="54.2" cy="38.2" r="0.520"/><circle cx="54.6" cy="35.0" r="0.520"/><circle cx="62.1" cy="31.5" r="0.520"/><circle cx="22.8" cy="40.7" r="0.520"/><circle cx="19.8" cy="55.1" r="0.520"/><circle cx="24.7" cy="29.9" r="0.520"/><circle cx="36.6" cy="34.1" r="0.520"/><circle cx="49.1" cy="44.3" r="0.520"/><circle cx="29.7" cy="56.5" r="0.520"/><circle cx="30.6" cy="50.6" r="0.520"/><circle cx="37.5" cy="43.1" r="0.520"/><circle cx="36.2" cy="44.4" r="0.520"/><circle cx="70.0" cy="57.9" r="0.520"/><circle cx="31.1" cy="52.9" r="0.520"/><circle cx="65.4" cy="32.1" r="0.520"/><circle cx="71.5" cy="52.9" r="0.520"/><circle cx="42.4" cy="53.0" r="0.520"/><circle cx="41.6" cy="36.5" r="0.520"/><circle cx="42.2" cy="43.2" r="0.520"/><circle cx="35.7" cy="28.0" r="0.520"/><circle cx="36.4" cy="25.4" r="0.520"/><circle cx="27.7" cy="27.2" r="0.520"/><circle cx="48.3" cy="36.6" r="0.520"/><circle cx="54.7" cy="51.4" r="0.520"/><circle cx="34.1" cy="32.4" r="0.520"/><circle cx="53.7" cy="44.2" r="0.520"/><circle cx="37.8" cy="43.8" r="0.520"/><circle cx="35.1" cy="54.2" r="0.520"/><circle cx="45.0" cy="34.4" r="0.520"/><circle cx="39.7" cy="25.7" r="0.520"/><circle cx="64.2" cy="36.7" r="0.520"/><circle cx="60.7" cy="39.4" r="0.520"/><circle cx="60.4" cy="52.0" r="0.520"/><circle cx="53.9" cy="56.5" r="0.520"/><circle cx="28.0" cy="36.9" r="0.520"/><circle cx="37.2" cy="37.5" r="0.520"/><circle cx="42.6" cy="37.4" r="0.520"/><circle cx="65.5" cy="47.3" r="0.520"/><circle cx="34.2" cy="38.8" r="0.520"/><circle cx="58.9" cy="48.1" r="0.520"/><circle cx="20.3" cy="41.9" r="0.520"/><circle cx="38.6" cy="48.7" r="0.520"/><circle cx="39.8" cy="48.7" r="0.520"/><circle cx="57.6" cy="51.4" r="0.520"/><circle cx="56.5" cy="43.2" r="0.520"/><circle cx="45.9" cy="38.6" r="0.520"/><circle cx="49.9" cy="21.6" r="0.520"/><circle cx="28.1" cy="39.3" r="0.520"/><circle cx="22.5" cy="45.2" r="0.520"/><circle cx="57.9" cy="34.2" r="0.520"/><circle cx="78.5" cy="54.9" r="0.520"/><circle cx="57.4" cy="30.6" r="0.520"/><circle cx="39.1" cy="19.9" r="0.520"/><circle cx="51.1" cy="48.8" r="0.520"/><circle cx="22.1" cy="40.9" r="0.520"/><circle cx="42.2" cy="27.9" r="0.520"/><circle cx="40.6" cy="32.6" r="0.520"/><circle cx="60.9" cy="33.5" r="0.520"/><circle cx="48.2" cy="45.7" r="0.520"/><circle cx="56.7" cy="30.2" r="0.520"/><circle cx="28.0" cy="23.2" r="0.520"/><circle cx="41.5" cy="43.3" r="0.520"/><circle cx="35.0" cy="41.6" r="0.520"/><circle cx="55.0" cy="44.9" r="0.520"/><circle cx="48.1" cy="34.7" r="0.520"/><circle cx="46.7" cy="35.4" r="0.520"/><circle cx="20.0" cy="40.4" r="0.520"/><circle cx="66.3" cy="24.8" r="0.520"/><circle cx="40.6" cy="40.9" r="0.520"/><circle cx="45.0" cy="50.1" r="0.520"/><circle cx="75.7" cy="47.1" r="0.520"/><circle cx="63.4" cy="38.9" r="0.520"/><circle cx="47.1" cy="51.9" r="0.520"/><circle cx="53.4" cy="37.7" r="0.520"/><circle cx="28.8" cy="44.8" r="0.520"/><circle cx="35.3" cy="34.6" r="0.520"/><circle cx="54.0" cy="37.7" r="0.520"/><circle cx="38.3" cy="41.8" r="0.520"/><circle cx="41.4" cy="35.2" r="0.520"/><circle cx="27.0" cy="47.5" r="0.520"/><circle cx="36.3" cy="48.0" r="0.520"/><circle cx="36.6" cy="39.3" r="0.520"/><circle cx="38.1" cy="41.0" r="0.520"/><circle cx="66.2" cy="31.6" r="0.520"/><circle cx="43.0" cy="45.0" r="0.520"/><circle cx="45.6" cy="27.6" r="0.520"/><circle cx="58.4" cy="46.0" r="0.520"/><circle cx="40.9" cy="25.4" r="0.520"/><circle cx="53.1" cy="26.9" r="0.520"/><circle cx="22.0" cy="28.6" r="0.520"/><circle cx="40.4" cy="30.0" r="0.520"/><circle cx="51.2" cy="38.1" r="0.520"/><circle cx="35.7" cy="53.1" r="0.520"/><circle cx="50.7" cy="49.1" r="0.520"/><circle cx="40.4" cy="50.6" r="0.520"/><circle cx="52.0" cy="42.5" r="0.520"/><circle cx="57.8" cy="33.4" r="0.520"/><circle cx="41.8" cy="27.4" r="0.520"/><circle cx="30.6" cy="42.0" r="0.520"/><circle cx="32.4" cy="32.5" r="0.520"/><circle cx="45.5" cy="24.3" r="0.520"/><circle cx="43.9" cy="47.3" r="0.520"/><circle cx="24.7" cy="34.9" r="0.520"/><circle cx="56.7" cy="46.5" r="0.520"/><circle cx="59.5" cy="21.7" r="0.520"/><circle cx="44.6" cy="35.1" r="0.520"/><circle cx="48.3" cy="34.3" r="0.520"/><circle cx="48.2" cy="46.1" r="0.520"/><circle cx="33.1" cy="40.6" r="0.520"/><circle cx="44.2" cy="29.1" r="0.520"/><circle cx="48.5" cy="46.6" r="0.520"/><circle cx="42.5" cy="50.3" r="0.520"/><circle cx="28.4" cy="36.5" r="0.520"/><circle cx="26.3" cy="32.4" r="0.520"/><circle cx="36.1" cy="36.0" r="0.520"/></g><path d="M10.500 40.500C30 40 50 39.500 84.500 35.600" stroke="#f2606e" stroke-width="0.4" stroke-dasharray="0.6 0.8" fill="none"/><g font-family="Liberation Sans, sans-serif" fill="#555" font-size="1.700" text-anchor="middle"><text x="14.8" y="66.7">-10</text><text x="29.7" y="66.7">-5</text><text x="44.6" y="66.7">0</text><text x="59.5" y="66.7">5</text><text x="74.4" y="66.7">10</text><text transform="translate(5.1 18.5) rotate(-90)">1.5</text><text transform="translate(5.1 32.5) rotate(-90)">1.0</text><text transform="translate(5.1 47) rotate(-90)">0.5</text><text transform="translate(5.1 61) rotate(-90)">0.0</text></g><path d="M14.8 63.5v1M29.7 63.5v1M44.6 63.5v1M59.5 63.5v1M74.4 63.5v1M7.3 18.5h-1M7.3 32.5h-1M7.3 47h-1M7.3 61h-1" stroke="#8d93a3" stroke-width="0.4" fill="none"/><g font-family="Liberation Sans, sans-serif" fill="#555" font-size="1.500" text-anchor="middle"><text x="47.4" y="6.500">Scale-Location</text><text x="47.4" y="70">Fitted values</text><text x="47.4" y="71.800">lm(y ~ x1 + x2)</text><text transform="translate(4.300 35.4) rotate(-90)">√|Standardized residuals|</text></g></svg>
<svg style="left:323.70px;top:312.00px" width="101.200" height="49.400" viewBox="0 0 516.400 253.900"><rect width="516.400" height="253.900" fill="#fff"/><path d="M53.8 37.7V207.2M37.4 123.5H497.8" stroke="#b9b9b9" stroke-width="0.7" stroke-dasharray="0.8 1.6" fill="none"/><g fill="none" stroke="#000" stroke-width="1.35"><circle cx="120.3" cy="102.3" r="2.3"/><circle cx="150.8" cy="123.6" r="2.3"/><circle cx="175.2" cy="107.1" r="2.3"/><circle cx="145.9" cy="116.2" r="2.3"/><circle cx="139.9" cy="109.1" r="2.3"/><circle cx="123.0" cy="135.6" r="2.3"/><circle cx="180.1" cy="127.4" r="2.3"/><circle cx="98.3" cy="115.0" r="2.3"/><circle cx="188.2" cy="141.8" r="2.3"/><circle cx="142.6" cy="106.3" r="2.3"/><circle cx="189.4" cy="123.0" r="2.3"/><circle cx="138.2" cy="121.8" r="2.3"/><circle cx="122.1" cy="130.4" r="2.3"/><circle cx="245.9" cy="116.3" r="2.3"/><circle cx="210.2" cy="135.9" r="2.3"/><circle cx="95.0" cy="102.9" r="2.3"/><circle cx="173.1" cy="123.2" r="2.3"/><circle cx="123.9" cy="132.2" r="2.3"/><circle cx="144.0" cy="139.5" r="2.3"/><circle cx="98.4" cy="135.4" r="2.3"/><circle cx="121.0" cy="111.4" r="2.3"/><circle cx="153.0" cy="113.6" r="2.3"/><circle cx="148.4" cy="118.2" r="2.3"/><circle cx="95.5" cy="128.6" r="2.3"/><circle cx="209.5" cy="139.5" r="2.3"/><circle cx="117.7" cy="119.1" r="2.3"/><circle cx="152.8" cy="126.2" r="2.3"/><circle cx="166.8" cy="140.9" r="2.3"/><circle cx="191.7" cy="134.3" r="2.3"/><circle cx="256.2" cy="98.7" r="2.3"/><circle cx="196.9" cy="160.1" r="2.3"/><circle cx="109.0" cy="145.9" r="2.3"/><circle cx="130.7" cy="103.0" r="2.3"/><circle cx="120.4" cy="137.8" r="2.3"/><circle cx="150.7" cy="106.2" r="2.3"/><circle cx="157.5" cy="128.3" r="2.3"/><circle cx="121.5" cy="109.0" r="2.3"/><circle cx="137.2" cy="136.0" r="2.3"/><circle cx="107.8" cy="130.5" r="2.3"/><circle cx="162.2" cy="132.4" r="2.3"/><circle cx="125.5" cy="160.4" r="2.3"/><circle cx="217.4" cy="164.4" r="2.3"/><circle cx="105.8" cy="115.9" r="2.3"/><circle cx="107.5" cy="109.9" r="2.3"/><circle cx="95.5" cy="107.1" r="2.3"/><circle cx="119.3" cy="119.2" r="2.3"/><circle cx="178.3" cy="130.2" r="2.3"/><circle cx="97.6" cy="117.7" r="2.3"/><circle cx="96.1" cy="144.1" r="2.3"/><circle cx="143.7" cy="140.5" r="2.3"/><circle cx="95.7" cy="129.5" r="2.3"/><circle cx="138.8" cy="141.8" r="2.3"/><circle cx="206.7" cy="131.0" r="2.3"/><circle cx="108.6" cy="157.0" r="2.3"/><circle cx="190.4" cy="160.6" r="2.3"/><circle cx="132.2" cy="133.0" r="2.3"/><circle cx="207.8" cy="121.7" r="2.3"/><circle cx="107.9" cy="128.0" r="2.3"/><circle cx="99.9" cy="106.5" r="2.3"/><circle cx="112.1" cy="128.5" r="2.3"/><circle cx="155.1" cy="137.1" r="2.3"/><circle cx="215.0" cy="136.5" r="2.3"/><circle cx="237.4" cy="136.7" r="2.3"/><circle cx="107.3" cy="109.7" r="2.3"/><circle cx="226.1" cy="128.6" r="2.3"/><circle cx="112.9" cy="143.9" r="2.3"/><circle cx="145.6" cy="112.7" r="2.3"/><circle cx="105.7" cy="150.3" r="2.3"/><circle cx="105.0" cy="143.7" r="2.3"/><circle cx="120.9" cy="141.6" r="2.3"/><circle cx="195.5" cy="106.2" r="2.3"/><circle cx="121.3" cy="129.4" r="2.3"/><circle cx="187.0" cy="128.2" r="2.3"/><circle cx="138.9" cy="125.3" r="2.3"/><circle cx="128.5" cy="114.0" r="2.3"/><circle cx="254.5" cy="141.6" r="2.3"/><circle cx="118.3" cy="136.7" r="2.3"/><circle cx="154.7" cy="103.6" r="2.3"/><circle cx="188.5" cy="92.1" r="2.3"/><circle cx="105.3" cy="138.0" r="2.3"/><circle cx="178.6" cy="106.8" r="2.3"/><circle cx="160.2" cy="152.9" r="2.3"/><circle cx="119.4" cy="121.2" r="2.3"/><circle cx="107.7" cy="157.3" r="2.3"/><circle cx="108.0" cy="157.6" r="2.3"/><circle cx="174.6" cy="116.9" r="2.3"/><circle cx="121.8" cy="127.0" r="2.3"/><circle cx="180.1" cy="102.4" r="2.3"/><circle cx="105.5" cy="130.8" r="2.3"/><circle cx="104.5" cy="145.7" r="2.3"/><circle cx="171.4" cy="127.6" r="2.3"/><circle cx="104.4" cy="116.0" r="2.3"/><circle cx="163.0" cy="125.1" r="2.3"/><circle cx="186.3" cy="140.4" r="2.3"/><circle cx="170.2" cy="130.0" r="2.3"/><circle cx="161.4" cy="95.9" r="2.3"/><circle cx="114.5" cy="128.1" r="2.3"/><circle cx="123.4" cy="160.5" r="2.3"/><circle cx="129.9" cy="154.8" r="2.3"/><circle cx="156.3" cy="132.2" r="2.3"/><circle cx="101.8" cy="110.0" r="2.3"/><circle cx="229.5" cy="118.0" r="2.3"/><circle cx="109.6" cy="139.5" r="2.3"/><circle cx="149.4" cy="164.1" r="2.3"/><circle cx="117.3" cy="158.8" r="2.3"/><circle cx="117.9" cy="124.3" r="2.3"/><circle cx="154.3" cy="118.3" r="2.3"/><circle cx="124.5" cy="143.4" r="2.3"/><circle cx="190.0" cy="120.3" r="2.3"/><circle cx="91.5" cy="90.4" r="2.3"/><circle cx="218.8" cy="155.2" r="2.3"/><circle cx="165.3" cy="139.0" r="2.3"/><circle cx="99.5" cy="158.8" r="2.3"/><circle cx="98.5" cy="145.8" r="2.3"/><circle cx="112.0" cy="119.9" r="2.3"/><circle cx="110.1" cy="125.2" r="2.3"/><circle cx="129.0" cy="152.4" r="2.3"/><circle cx="175.4" cy="122.3" r="2.3"/><circle cx="150.1" cy="141.8" r="2.3"/><circle cx="122.5" cy="143.6" r="2.3"/><circle cx="89.7" cy="105.9" r="2.3"/><circle cx="134.1" cy="110.7" r="2.3"/><circle cx="91.4" cy="111.5" r="2.3"/><circle cx="203.2" cy="130.9" r="2.3"/><circle cx="239.9" cy="107.3" r="2.3"/><circle cx="154.2" cy="118.2" r="2.3"/><circle cx="136.1" cy="112.7" r="2.3"/><circle cx="91.8" cy="162.9" r="2.3"/><circle cx="173.1" cy="119.1" r="2.3"/><circle cx="195.9" cy="116.5" r="2.3"/><circle cx="193.4" cy="120.0" r="2.3"/><circle cx="160.1" cy="151.1" r="2.3"/><circle cx="174.9" cy="108.5" r="2.3"/><circle cx="166.0" cy="146.3" r="2.3"/><circle cx="112.1" cy="122.2" r="2.3"/><circle cx="134.9" cy="96.9" r="2.3"/><circle cx="112.1" cy="117.9" r="2.3"/><circle cx="138.9" cy="105.9" r="2.3"/><circle cx="96.0" cy="111.8" r="2.3"/><circle cx="125.3" cy="123.6" r="2.3"/><circle cx="193.5" cy="138.7" r="2.3"/><circle cx="235.3" cy="121.4" r="2.3"/><circle cx="92.8" cy="122.2" r="2.3"/><circle cx="178.7" cy="101.8" r="2.3"/><circle cx="153.6" cy="121.0" r="2.3"/><circle cx="143.9" cy="141.2" r="2.3"/><circle cx="188.3" cy="149.0" r="2.3"/><circle cx="165.8" cy="106.9" r="2.3"/><circle cx="186.2" cy="129.7" r="2.3"/><circle cx="167.8" cy="120.4" r="2.3"/><circle cx="149.4" cy="112.5" r="2.3"/><circle cx="169.6" cy="99.2" r="2.3"/><circle cx="108.5" cy="106.3" r="2.3"/><circle cx="102.5" cy="137.6" r="2.3"/><circle cx="160.6" cy="130.3" r="2.3"/><circle cx="186.0" cy="146.1" r="2.3"/><circle cx="225.8" cy="92.0" r="2.3"/><circle cx="176.4" cy="91.4" r="2.3"/><circle cx="129.4" cy="133.1" r="2.3"/><circle cx="124.9" cy="142.2" r="2.3"/><circle cx="120.6" cy="102.4" r="2.3"/><circle cx="192.9" cy="122.3" r="2.3"/><circle cx="91.5" cy="120.3" r="2.3"/><circle cx="135.7" cy="132.7" r="2.3"/><circle cx="120.4" cy="120.2" r="2.3"/><circle cx="107.7" cy="129.4" r="2.3"/><circle cx="175.0" cy="129.9" r="2.3"/><circle cx="173.3" cy="125.8" r="2.3"/><circle cx="109.8" cy="119.5" r="2.3"/><circle cx="203.2" cy="142.6" r="2.3"/><circle cx="111.2" cy="116.1" r="2.3"/><circle cx="184.8" cy="152.6" r="2.3"/><circle cx="157.3" cy="133.7" r="2.3"/><circle cx="184.4" cy="116.7" r="2.3"/><circle cx="162.0" cy="122.9" r="2.3"/><circle cx="127.1" cy="124.8" r="2.3"/><circle cx="95.7" cy="158.8" r="2.3"/><circle cx="137.6" cy="125.0" r="2.3"/><circle cx="135.1" cy="123.6" r="2.3"/><circle cx="117.3" cy="123.9" r="2.3"/><circle cx="117.3" cy="116.0" r="2.3"/><circle cx="176.3" cy="103.7" r="2.3"/><circle cx="108.8" cy="102.7" r="2.3"/><circle cx="144.5" cy="114.1" r="2.3"/><circle cx="100.5" cy="131.5" r="2.3"/><circle cx="96.3" cy="122.2" r="2.3"/><circle cx="129.6" cy="120.4" r="2.3"/><circle cx="90.6" cy="111.2" r="2.3"/><circle cx="138.0" cy="110.5" r="2.3"/><circle cx="179.7" cy="108.5" r="2.3"/><circle cx="232.0" cy="102.3" r="2.3"/><circle cx="130.6" cy="90.0" r="2.3"/><circle cx="178.1" cy="112.0" r="2.3"/><circle cx="102.0" cy="117.5" r="2.3"/><circle cx="121.6" cy="153.8" r="2.3"/><circle cx="156.5" cy="120.7" r="2.3"/><circle cx="141.8" cy="126.0" r="2.3"/><circle cx="176.0" cy="108.6" r="2.3"/><circle cx="194.6" cy="110.6" r="2.3"/><circle cx="169.2" cy="148.7" r="2.3"/><circle cx="97.1" cy="152.6" r="2.3"/><circle cx="115.6" cy="114.7" r="2.3"/><circle cx="133.0" cy="148.3" r="2.3"/><circle cx="155.8" cy="133.5" r="2.3"/><circle cx="136.2" cy="148.5" r="2.3"/><circle cx="189.1" cy="128.7" r="2.3"/><circle cx="155.9" cy="157.8" r="2.3"/><circle cx="139.5" cy="102.7" r="2.3"/><circle cx="215.6" cy="148.2" r="2.3"/><circle cx="128.8" cy="142.0" r="2.3"/><circle cx="155.2" cy="138.2" r="2.3"/><circle cx="221.0" cy="131.4" r="2.3"/><circle cx="162.3" cy="97.6" r="2.3"/><circle cx="98.9" cy="109.3" r="2.3"/><circle cx="132.1" cy="132.1" r="2.3"/><circle cx="166.2" cy="99.0" r="2.3"/><circle cx="109.3" cy="122.2" r="2.3"/><circle cx="111.8" cy="117.0" r="2.3"/><circle cx="98.0" cy="147.4" r="2.3"/><circle cx="193.4" cy="120.8" r="2.3"/><circle cx="93.0" cy="143.5" r="2.3"/><circle cx="109.3" cy="115.1" r="2.3"/><circle cx="89.4" cy="118.8" r="2.3"/><circle cx="101.6" cy="100.3" r="2.3"/><circle cx="98.8" cy="127.5" r="2.3"/><circle cx="93.5" cy="140.8" r="2.3"/><circle cx="103.0" cy="128.1" r="2.3"/><circle cx="176.7" cy="133.4" r="2.3"/><circle cx="117.9" cy="132.3" r="2.3"/><circle cx="162.9" cy="92.2" r="2.3"/><circle cx="123.1" cy="127.9" r="2.3"/><circle cx="224.2" cy="135.0" r="2.3"/><circle cx="158.8" cy="104.3" r="2.3"/><circle cx="121.3" cy="106.4" r="2.3"/><circle cx="205.6" cy="129.5" r="2.3"/><circle cx="118.1" cy="123.6" r="2.3"/><circle cx="188.4" cy="125.1" r="2.3"/><circle cx="199.0" cy="118.5" r="2.3"/><circle cx="194.8" cy="122.2" r="2.3"/><circle cx="193.8" cy="100.2" r="2.3"/><circle cx="99.2" cy="129.7" r="2.3"/><circle cx="95.6" cy="154.4" r="2.3"/><circle cx="222.3" cy="102.2" r="2.3"/><circle cx="138.0" cy="119.4" r="2.3"/><circle cx="187.2" cy="144.6" r="2.3"/><circle cx="183.1" cy="148.1" r="2.3"/><circle cx="134.6" cy="138.1" r="2.3"/><circle cx="182.4" cy="132.1" r="2.3"/><circle cx="159.1" cy="121.4" r="2.3"/><circle cx="165.9" cy="127.0" r="2.3"/><circle cx="194.0" cy="108.9" r="2.3"/><circle cx="97.8" cy="138.7" r="2.3"/><circle cx="134.6" cy="103.9" r="2.3"/><circle cx="191.7" cy="109.6" r="2.3"/><circle cx="172.3" cy="116.1" r="2.3"/><circle cx="141.8" cy="92.8" r="2.3"/><circle cx="126.1" cy="117.3" r="2.3"/><circle cx="115.5" cy="102.1" r="2.3"/><circle cx="115.6" cy="149.6" r="2.3"/><circle cx="155.3" cy="116.3" r="2.3"/><circle cx="113.2" cy="100.7" r="2.3"/><circle cx="94.7" cy="122.6" r="2.3"/><circle cx="140.6" cy="99.9" r="2.3"/><circle cx="140.5" cy="145.3" r="2.3"/><circle cx="179.8" cy="97.4" r="2.3"/><circle cx="101.0" cy="127.0" r="2.3"/><circle cx="117.0" cy="109.0" r="2.3"/><circle cx="123.2" cy="128.5" r="2.3"/><circle cx="133.3" cy="157.0" r="2.3"/><circle cx="137.4" cy="88.3" r="2.3"/><circle cx="108.7" cy="133.2" r="2.3"/><circle cx="91.5" cy="113.9" r="2.3"/><circle cx="111.6" cy="150.0" r="2.3"/><circle cx="264.1" cy="129.2" r="2.3"/><circle cx="110.1" cy="103.9" r="2.3"/><circle cx="225.8" cy="97.7" r="2.3"/><circle cx="187.9" cy="92.2" r="2.3"/><circle cx="130.3" cy="106.3" r="2.3"/><circle cx="181.8" cy="110.6" r="2.3"/><circle cx="176.6" cy="136.9" r="2.3"/><circle cx="142.5" cy="132.7" r="2.3"/><circle cx="95.4" cy="104.7" r="2.3"/><circle cx="173.2" cy="113.8" r="2.3"/><circle cx="95.7" cy="124.4" r="2.3"/><circle cx="100.9" cy="120.6" r="2.3"/><circle cx="163.0" cy="162.5" r="2.3"/><circle cx="151.5" cy="151.9" r="2.3"/><circle cx="109.9" cy="129.6" r="2.3"/><circle cx="194.6" cy="112.9" r="2.3"/><circle cx="153.2" cy="114.1" r="2.3"/><circle cx="116.4" cy="97.6" r="2.3"/><circle cx="168.9" cy="137.7" r="2.3"/><circle cx="185.4" cy="105.7" r="2.3"/><circle cx="147.9" cy="116.9" r="2.3"/><circle cx="183.6" cy="138.1" r="2.3"/><circle cx="130.7" cy="150.3" r="2.3"/><circle cx="93.4" cy="106.2" r="2.3"/><circle cx="163.7" cy="138.8" r="2.3"/><circle cx="204.6" cy="131.4" r="2.3"/><circle cx="142.9" cy="127.6" r="2.3"/><circle cx="170.1" cy="144.2" r="2.3"/><circle cx="157.4" cy="124.4" r="2.3"/><circle cx="187.0" cy="106.7" r="2.3"/><circle cx="166.5" cy="114.7" r="2.3"/><circle cx="185.9" cy="133.0" r="2.3"/><circle cx="93.8" cy="146.4" r="2.3"/><circle cx="176.4" cy="104.1" r="2.3"/><circle cx="111.1" cy="138.8" r="2.3"/><circle cx="173.7" cy="135.7" r="2.3"/><circle cx="133.2" cy="103.9" r="2.3"/><circle cx="101.4" cy="88.1" r="2.3"/><circle cx="232.5" cy="134.0" r="2.3"/><circle cx="112.2" cy="117.2" r="2.3"/><circle cx="151.3" cy="147.2" r="2.3"/><circle cx="90.4" cy="162.0" r="2.3"/><circle cx="219.1" cy="150.4" r="2.3"/><circle cx="250.2" cy="111.0" r="2.3"/><circle cx="133.1" cy="103.6" r="2.3"/><circle cx="153.7" cy="100.2" r="2.3"/><circle cx="106.4" cy="116.0" r="2.3"/><circle cx="193.0" cy="110.4" r="2.3"/><circle cx="183.1" cy="119.6" r="2.3"/><circle cx="135.4" cy="118.8" r="2.3"/><circle cx="133.1" cy="119.3" r="2.3"/><circle cx="129.9" cy="100.5" r="2.3"/><circle cx="251.7" cy="93.8" r="2.3"/><circle cx="160.3" cy="124.5" r="2.3"/><circle cx="91.6" cy="116.7" r="2.3"/><circle cx="89.6" cy="143.8" r="2.3"/><circle cx="161.6" cy="121.3" r="2.3"/><circle cx="248.9" cy="116.6" r="2.3"/><circle cx="160.9" cy="96.2" r="2.3"/><circle cx="169.0" cy="124.1" r="2.3"/><circle cx="156.2" cy="102.2" r="2.3"/><circle cx="97.0" cy="134.3" r="2.3"/><circle cx="147.7" cy="117.3" r="2.3"/><circle cx="95.8" cy="142.2" r="2.3"/><circle cx="92.8" cy="120.1" r="2.3"/><circle cx="173.2" cy="116.0" r="2.3"/><circle cx="105.6" cy="102.2" r="2.3"/><circle cx="137.0" cy="148.8" r="2.3"/><circle cx="106.6" cy="138.4" r="2.3"/><circle cx="169.6" cy="99.3" r="2.3"/><circle cx="91.4" cy="144.3" r="2.3"/><circle cx="122.6" cy="83.1" r="2.3"/><circle cx="107.2" cy="111.5" r="2.3"/><circle cx="139.5" cy="123.6" r="2.3"/><circle cx="93.6" cy="114.3" r="2.3"/><circle cx="157.6" cy="144.1" r="2.3"/><circle cx="130.6" cy="135.2" r="2.3"/><circle cx="95.4" cy="113.7" r="2.3"/><circle cx="133.5" cy="126.8" r="2.3"/><circle cx="146.4" cy="135.4" r="2.3"/><circle cx="162.9" cy="132.6" r="2.3"/><circle cx="105.4" cy="99.1" r="2.3"/><circle cx="105.6" cy="134.7" r="2.3"/><circle cx="109.3" cy="139.6" r="2.3"/><circle cx="91.9" cy="108.3" r="2.3"/><circle cx="98.7" cy="144.3" r="2.3"/><circle cx="164.8" cy="82.2" r="2.3"/><circle cx="184.0" cy="142.6" r="2.3"/><circle cx="171.0" cy="88.0" r="2.3"/><circle cx="118.4" cy="113.5" r="2.3"/><circle cx="165.3" cy="107.5" r="2.3"/><circle cx="152.9" cy="104.1" r="2.3"/><circle cx="206.6" cy="142.2" r="2.3"/><circle cx="113.4" cy="118.5" r="2.3"/><circle cx="124.5" cy="121.3" r="2.3"/><circle cx="167.4" cy="137.0" r="2.3"/><circle cx="133.5" cy="159.3" r="2.3"/><circle cx="224.5" cy="135.6" r="2.3"/><circle cx="178.6" cy="127.7" r="2.3"/><circle cx="154.6" cy="102.2" r="2.3"/><circle cx="115.7" cy="138.7" r="2.3"/><circle cx="143.4" cy="113.3" r="2.3"/><circle cx="170.8" cy="137.3" r="2.3"/><circle cx="168.3" cy="121.3" r="2.3"/><circle cx="100.0" cy="127.9" r="2.3"/><circle cx="108.0" cy="129.8" r="2.3"/><circle cx="110.5" cy="116.1" r="2.3"/><circle cx="93.6" cy="101.3" r="2.3"/><circle cx="104.5" cy="144.4" r="2.3"/><circle cx="195.1" cy="114.2" r="2.3"/><circle cx="127.7" cy="106.9" r="2.3"/><circle cx="91.6" cy="149.2" r="2.3"/><circle cx="93.9" cy="100.0" r="2.3"/><circle cx="95.7" cy="83.5" r="2.3"/><circle cx="176.4" cy="143.6" r="2.3"/><circle cx="115.0" cy="109.7" r="2.3"/><circle cx="194.6" cy="111.2" r="2.3"/><circle cx="160.6" cy="134.5" r="2.3"/><circle cx="168.0" cy="135.7" r="2.3"/><circle cx="140.5" cy="117.5" r="2.3"/><circle cx="119.4" cy="109.4" r="2.3"/><circle cx="144.9" cy="93.9" r="2.3"/><circle cx="145.8" cy="107.5" r="2.3"/><circle cx="157.3" cy="106.6" r="2.3"/><circle cx="140.4" cy="118.7" r="2.3"/><circle cx="130.9" cy="163.1" r="2.3"/><circle cx="174.0" cy="129.5" r="2.3"/><circle cx="163.7" cy="152.0" r="2.3"/><circle cx="224.2" cy="102.6" r="2.3"/><circle cx="167.2" cy="139.9" r="2.3"/><circle cx="104.0" cy="123.0" r="2.3"/><circle cx="188.1" cy="132.1" r="2.3"/><circle cx="136.8" cy="132.9" r="2.3"/><circle cx="140.6" cy="136.3" r="2.3"/><circle cx="141.6" cy="100.4" r="2.3"/><circle cx="106.5" cy="149.4" r="2.3"/><circle cx="151.5" cy="113.5" r="2.3"/><circle cx="95.9" cy="108.6" r="2.3"/><circle cx="126.9" cy="133.1" r="2.3"/><circle cx="207.1" cy="120.1" r="2.3"/><circle cx="90.5" cy="122.6" r="2.3"/><circle cx="102.2" cy="151.9" r="2.3"/><circle cx="255.0" cy="98.6" r="2.3"/><circle cx="193.9" cy="95.0" r="2.3"/><circle cx="154.3" cy="139.9" r="2.3"/><circle cx="222.6" cy="137.1" r="2.3"/><circle cx="158.7" cy="140.7" r="2.3"/><circle cx="101.0" cy="109.3" r="2.3"/><circle cx="135.3" cy="132.8" r="2.3"/><circle cx="288.5" cy="69.8" r="2.3"/><circle cx="283.0" cy="91.1" r="2.3"/><circle cx="283.8" cy="94.9" r="2.3"/><circle cx="308.4" cy="92.7" r="2.3"/><circle cx="302.1" cy="97.1" r="2.3"/><circle cx="316.2" cy="96.0" r="2.3"/><circle cx="321.7" cy="89.7" r="2.3"/><circle cx="327.0" cy="95.5" r="2.3"/><circle cx="353.5" cy="96.0" r="2.3"/><circle cx="354.1" cy="96.9" r="2.3"/><circle cx="401.9" cy="94.7" r="2.3"/><circle cx="405.8" cy="99.6" r="2.3"/><circle cx="380.6" cy="104.3" r="2.3"/><circle cx="429.6" cy="110.1" r="2.3"/><circle cx="272.5" cy="104.6" r="2.3"/><circle cx="273.3" cy="108.5" r="2.3"/><circle cx="273.9" cy="110.7" r="2.3"/><circle cx="280.8" cy="111.5" r="2.3"/><circle cx="278.3" cy="114.0" r="2.3"/><circle cx="270.0" cy="115.7" r="2.3"/><circle cx="289.4" cy="111.3" r="2.3"/><circle cx="294.9" cy="112.4" r="2.3"/><circle cx="290.2" cy="118.2" r="2.3"/><circle cx="314.8" cy="107.4" r="2.3"/><circle cx="324.8" cy="114.6" r="2.3"/><circle cx="336.4" cy="106.3" r="2.3"/><circle cx="339.7" cy="107.9" r="2.3"/><circle cx="279.4" cy="121.5" r="2.3"/><circle cx="313.4" cy="120.4" r="2.3"/><circle cx="341.6" cy="121.8" r="2.3"/><circle cx="349.1" cy="118.7" r="2.3"/><circle cx="354.9" cy="119.8" r="2.3"/><circle cx="363.8" cy="115.7" r="2.3"/><circle cx="367.1" cy="115.1" r="2.3"/><circle cx="301.3" cy="125.6" r="2.3"/><circle cx="281.3" cy="128.7" r="2.3"/><circle cx="291.0" cy="129.0" r="2.3"/><circle cx="322.6" cy="130.9" r="2.3"/><circle cx="343.3" cy="128.7" r="2.3"/><circle cx="352.7" cy="131.4" r="2.3"/><circle cx="394.5" cy="126.5" r="2.3"/><circle cx="302.4" cy="135.9" r="2.3"/><circle cx="318.1" cy="135.9" r="2.3"/><circle cx="285.2" cy="140.6" r="2.3"/><circle cx="295.2" cy="141.7" r="2.3"/><circle cx="304.0" cy="141.7" r="2.3"/><circle cx="271.4" cy="141.7" r="2.3"/><circle cx="274.1" cy="143.3" r="2.3"/><circle cx="362.7" cy="142.2" r="2.3"/><circle cx="366.0" cy="144.2" r="2.3"/><circle cx="274.7" cy="146.7" r="2.3"/><circle cx="320.1" cy="147.5" r="2.3"/><circle cx="457.0" cy="135.3" r="2.3"/><circle cx="329.7" cy="159.1" r="2.3"/><circle cx="480.2" cy="155.8" r="2.3"/><circle cx="309.8" cy="172.1" r="2.3"/><circle cx="340.3" cy="170.5" r="2.3"/><circle cx="347.4" cy="174.3" r="2.3"/><circle cx="135.2" cy="54.1" r="2.3"/><circle cx="104.0" cy="68.0" r="2.3"/><circle cx="100.9" cy="75.7" r="2.3"/><circle cx="107.9" cy="76.7" r="2.3"/><circle cx="111.0" cy="74.8" r="2.3"/><circle cx="115.7" cy="74.3" r="2.3"/><circle cx="152.6" cy="71.0" r="2.3"/><circle cx="156.4" cy="70.6" r="2.3"/><circle cx="158.0" cy="80.0" r="2.3"/><circle cx="139.7" cy="80.2" r="2.3"/><circle cx="140.6" cy="80.2" r="2.3"/><circle cx="176.3" cy="79.0" r="2.3"/><circle cx="192.1" cy="64.9" r="2.3"/><circle cx="208.1" cy="65.4" r="2.3"/><circle cx="205.2" cy="73.4" r="2.3"/><circle cx="198.7" cy="75.5" r="2.3"/><circle cx="193.3" cy="81.9" r="2.3"/><circle cx="196.8" cy="81.4" r="2.3"/><circle cx="199.6" cy="87.3" r="2.3"/><circle cx="171.6" cy="86.1" r="2.3"/><circle cx="178.7" cy="85.4" r="2.3"/><circle cx="228.7" cy="60.7" r="2.3"/><circle cx="235.3" cy="76.0" r="2.3"/><circle cx="233.4" cy="85.1" r="2.3"/><circle cx="239.1" cy="90.1" r="2.3"/><circle cx="259.1" cy="87.3" r="2.3"/><circle cx="262.6" cy="87.3" r="2.3"/><circle cx="127.9" cy="190.0" r="2.3"/><circle cx="164.1" cy="186.0" r="2.3"/><circle cx="156.8" cy="179.2" r="2.3"/><circle cx="142.7" cy="177.7" r="2.3"/><circle cx="115.2" cy="177.0" r="2.3"/><circle cx="93.6" cy="174.0" r="2.3"/><circle cx="91.7" cy="171.9" r="2.3"/><circle cx="202.9" cy="181.3" r="2.3"/><circle cx="204.3" cy="171.9" r="2.3"/><circle cx="212.8" cy="166.0" r="2.3"/><circle cx="221.9" cy="165.0" r="2.3"/><circle cx="240.0" cy="178.4" r="2.3"/><circle cx="252.5" cy="175.9" r="2.3"/><circle cx="91.0" cy="165.3" r="2.3"/><circle cx="94.1" cy="164.1" r="2.3"/><circle cx="99.3" cy="166.0" r="2.3"/><circle cx="124.2" cy="168.8" r="2.3"/><circle cx="134.5" cy="170.7" r="2.3"/><circle cx="163.2" cy="167.2" r="2.3"/><circle cx="163.9" cy="168.8" r="2.3"/><circle cx="172.6" cy="166.9" r="2.3"/><circle cx="175.6" cy="167.6" r="2.3"/><circle cx="181.5" cy="166.9" r="2.3"/><circle cx="186.2" cy="166.0" r="2.3"/></g><path d="M89.1 123.1C138.1 124.4 198.1 124.0 258.1 122.4S398.1 120.2 480.5 119.4" stroke="#f5808a" stroke-width="0.6" fill="none"/><rect x="37.2" y="37.4" width="460.8" height="170.1" fill="none" stroke="#666" stroke-width="0.8"/><path d="M37.2 38.6h-4.6M37.2 81.1h-4.6M37.2 123.5h-4.6M37.2 166.0h-4.6M37.2 38.6V166.0M53.8 207.5v4.6M125.0 207.5v4.6M196.1 207.5v4.6M267.2 207.5v4.6M338.4 207.5v4.6M409.6 207.5v4.6M480.7 207.5v4.6M53.8 207.5H480.7" stroke="#444" stroke-width="0.8" fill="none"/><g font-family="Liberation Sans, sans-serif" fill="#0a0a0a" stroke="#0a0a0a" stroke-width="0.12" font-size="7.600" text-anchor="middle"><text x="267.0" y="32.9" font-size="7.700">Residuals vs Leverage</text><text x="53.8" y="224.4" font-size="7.650">0.000</text><text x="125.0" y="224.4" font-size="7.650">0.002</text><text x="196.1" y="224.4" font-size="7.650">0.004</text><text x="267.2" y="224.4" font-size="7.650">0.006</text><text x="338.4" y="224.4" font-size="7.650">0.008</text><text x="409.6" y="224.4" font-size="7.650">0.010</text><text x="480.7" y="224.4" font-size="7.650">0.012</text><text x="267.0" y="241.9">Leverage</text><text x="267.0" y="251.4">lm(y ~ x1 + x2)</text><text transform="translate(27.3 38.6) rotate(-90)" font-size="7.650">4</text><text transform="translate(27.3 81.1) rotate(-90)" font-size="7.650">2</text><text transform="translate(27.3 123.5) rotate(-90)" font-size="7.650">0</text><text transform="translate(27.3 166.0) rotate(-90)" font-size="7.650">-2</text><text transform="translate(8.5 122.2) rotate(-90)">Standardized residuals</text><text x="69.1" y="204.6" text-anchor="start">Cook's distance</text><text x="231.7" y="62.2" text-anchor="start" font-size="5.500">867</text><text x="285.9" y="71.2" text-anchor="end" font-size="5.500">265</text><text x="344.9" y="176.6" text-anchor="end" font-size="5.500">439</text></g><path d="M44.4 201.9H60.8" stroke="#f2606e" stroke-width="0.8" stroke-dasharray="2 1.6" fill="none"/></svg>
<div class="abs" style="left:545.10px;top:22.00px;width:6.600px;height:209px;background:#2a2e35"></div>
</div>
<style>
#term{position:absolute;left:779.4px;top:18.5px;width:403.6px;height:690px;background:#1c1f23;border-left:1px solid #191c21}
.tl2{position:absolute;left:6.100px;font-family:"DejaVu Sans Mono","Liberation Mono",monospace;font-size:7.500px;letter-spacing:0.108px;white-space:pre;color:#dadde1;-webkit-text-stroke:0.22px;height:9.895px;line-height:9.895px}
.tl2 .g{color:#3cb52c}.tl2 .n{color:#5289bd}.tl2 .o{color:#525861}.tl2 .pr{color:#2a7de1;font-weight:bold}.tl2 .cy{color:#27c2d6;font-weight:bold}.tl2 .ar{color:#3cb52c}
</style>
<div id="term">
<svg style="left:6.60px;top:6.60px" width="10.6" height="10.6" viewBox="0 0 16 16"><path d="M7.56 1h.88l6.54 12.26-.44.74H1.44L1 13.26 7.56 1zM8 2.28L2.28 13H13.7L8 2.28zM8.625 12v-1h-1.25v1h1.25zm-1.25-2V6h1.25v4h-1.25z" fill="#9aa0a8" /></svg>
<svg style="left:22.60px;top:6.30px" width="11.200" height="11.200" viewBox="0 0 16 16" fill="none" stroke="#9aa0a8" stroke-width="1.100"><path d="M5.500 6.500V2h9v8.500h-5"/><path d="M8.800 4.600l1.700 1.700-1.700 1.700" /><circle cx="4.500" cy="11.500" r="2.300"/><path d="M1 9.500l1.500 1M8 9.500l-1.500 1M1 14l1.600-1M8 14l-1.600-1M4.500 9.200V8"/></svg>
<svg style="left:38.60px;top:6.30px" width="11.2" height="11.2" viewBox="0 0 16 16" fill="none" stroke="#e6e9ec" stroke-width="1.1" stroke-linejoin="round" stroke-linecap="round"><rect x="1.600" y="1.600" width="12.800" height="12.800" rx="1.200"/><path d="M5.800 5.200L8.600 8l-2.800 2.800"/></svg>
<div class="abs" style="left:37.40px;top:18.30px;width:13.400px;height:1px;background:#e8795f"></div>
<svg style="left:54.60px;top:6.30px" width="11.200" height="11.200" viewBox="0 0 16 16" fill="none" stroke="#9aa0a8" stroke-width="1.100"><rect x="2.600" y="2" width="10.800" height="12.400" rx="1.200"/><path d="M5 1.200h6M5.300 5.500h5.400M5.300 8h5.400M5.300 10.500h5.400"/></svg>
<svg style="left:280.20px;top:6.30px" width="11.2" height="11.2" viewBox="0 0 16 16" fill="none" stroke="#c8ccd1" stroke-width="1.1" stroke-linejoin="round" stroke-linecap="round"><rect x="1.600" y="1.600" width="12.800" height="12.800" rx="1.200"/><path d="M5.800 5.200L8.600 8l-2.800 2.800"/></svg>
<div class="abs" style="left:294.10px;top:6.50px;line-height:12px;font-size:7.700px;color:#d5d9de;letter-spacing:.1px">Python</div>
<svg style="left:324.20px;top:6.50px" width="10.8" height="10.8" viewBox="0 0 16 16"><path d="M14 7v1H8v6H7V8H1V7h6V1h1v6h6z" fill="#c8ccd1" /></svg>
<svg style="left:336.10px;top:7.70px" width="9" height="9" viewBox="0 0 16 16"><path d="M7.976 10.072l4.357-4.357.62.618L8.284 11h-.618L3 6.333l.619-.618 4.357 4.357z" fill="#c8ccd1" /></svg>
<svg style="left:349.50px;top:6.20px" width="11.4" height="11.4" viewBox="0 0 16 16"><path d="M14 1H3L2 2v11l1 1h11l1-1V2l-1-1zm0 12H3V8h11v5zm0-6H3V2h11v5z" fill="#c8ccd1" /></svg>
<svg style="left:366.80px;top:6.30px" width="11.2" height="11.2" viewBox="0 0 16 16"><path d="M10 3h3v1h-1v9l-1 1H4l-1-1V4H2V3h3V2a1 1 0 0 1 1-1h3a1 1 0 0 1 1 1v1zM9 2H6v1h3V2zM4 13h7V4H4v9zm2-8H5v7h1V5zm1 0h1v7H7V5zm2 0h1v7H9V5z" fill="#c8ccd1" /></svg>
<svg style="left:384.90px;top:6.60px" width="10.6" height="10.6" viewBox="0 0 16 16"><path d="M8 8.707l3.646 3.647.708-.707L8.707 8l3.647-3.646-.707-.708L8 7.293 4.354 3.646l-.707.708L7.293 8l-3.646 3.646.707.708L8 8.707z" fill="#c8ccd1" /></svg>
<div class="tl2" style="top:25.90px"><span class="ar">→</span>  <span class="cy">rdemo</span> r</div>
<div class="tl2" style="top:35.80px">R version 4.1.3 (2022-03-10) -- "One Push-Up"</div>
<div class="tl2" style="top:45.69px">Platform: x86_64-apple-darwin17.0 (64-bit)</div>
<div class="tl2" style="top:65.48px"><span class="pr">&gt;</span> <span class="g">library</span>(data.table)</div>
<div class="tl2" style="top:85.27px">  <span class="g">set.seed</span>(<span class="n">123</span>)</div>
<div class="tl2" style="top:95.16px">  n <span class="o">=</span> <span class="n">1000</span></div>
<div class="tl2" style="top:105.06px">  dt <span class="o">&lt;-</span> <span class="g">data.table</span>(id <span class="o">=</span> <span class="n">1</span><span class="o">:</span>n)</div>
<div class="tl2" style="top:114.95px">  dt[, x1 <span class="o">:=</span> <span class="g">rnorm</span>(.N, mean <span class="o">=</span> <span class="n">0</span>, sd <span class="o">=</span> <span class="n">2</span>)]</div>
<div class="tl2" style="top:124.85px">  dt[, x2 <span class="o">:=</span> <span class="g">runif</span>(.N, min <span class="o">=</span> <span class="n">-1</span>, max <span class="o">=</span> <span class="n">1</span>)]</div>
<div class="tl2" style="top:134.75px">  dt[, y <span class="o">:=</span> <span class="n">2</span> <span class="o">*</span> x1 <span class="o">+</span> x2 <span class="o">+</span> <span class="n">0.5</span> <span class="o">*</span> <span class="g">rnorm</span>(.N)]</div>
<div class="tl2" style="top:154.53px">  model <span class="o">&lt;-</span> <span class="g">lm</span>(y <span class="o">~</span> x1<span class="o">+</span>x2, data <span class="o">=</span> dt)</div>
<div class="tl2" style="top:164.43px">  rows <span class="o">&lt;-</span> <span class="n">1</span><span class="o">:</span><span class="g">nrow</span>(dt)</div>
<div class="tl2" style="top:174.32px">  <span class="g">summary</span>(model)</div>
<div class="tl2" style="top:194.12px">  <span class="g">plot</span>(model)</div>
<div class="tl2" style="top:213.91px">Call:</div>
<div class="tl2" style="top:223.80px">lm(formula = y ~ x1 + x2, data = dt)</div>
<div class="tl2" style="top:243.59px">Residuals:</div>
<div class="tl2" style="top:253.48px">     Min       1Q   Median       3Q      Max </div>
<div class="tl2" style="top:263.38px">-1.54376 -0.31646 -0.01093  0.34316  1.61131 </div>
<div class="tl2" style="top:283.17px">Coefficients:</div>
<div class="tl2" style="top:293.06px">              Estimate Std. Error t value Pr(&gt;|t|)    </div>
<div class="tl2" style="top:302.96px">(Intercept) -0.0007977  0.0155577  -0.051    0.959    </div>
<div class="tl2" style="top:312.85px">x1           1.9855040  0.0078490 252.963   &lt;2e-16 ***</div>
<div class="tl2" style="top:322.75px">x2           1.0224384  0.0266384  38.382   &lt;2e-16 ***</div>
<div class="tl2" style="top:332.64px">---</div>
<div class="tl2" style="top:342.54px">Signif. codes:  0 '***' 0.001 '**' 0.01 '*' 0.05 '.' 0.1 ' ' 1</div>
<div class="tl2" style="top:362.33px">Residual standard error: 0.4919 on 997 degrees of freedom</div>
<div class="tl2" style="top:372.22px">Multiple R-squared:  0.9851,    Adjusted R-squared:  0.9851 </div>
<div class="tl2" style="top:382.12px">F-statistic: 3.298e+04 on 2 and 997 DF,  p-value: &lt; 2.2e-16</div>
<div class="tl2" style="top:411.80px"><span class="pr">&gt;</span> <span class="g">View</span>(dt)</div>
<div class="tl2" style="top:431.59px"><span class="pr">&gt;</span> </div>
<div class="abs" style="left:15.65px;top:432.39px;width:4.300px;height:8.300px;border:1px solid #4d8fd6"></div>
</div>
</div>
</body>
</html>
